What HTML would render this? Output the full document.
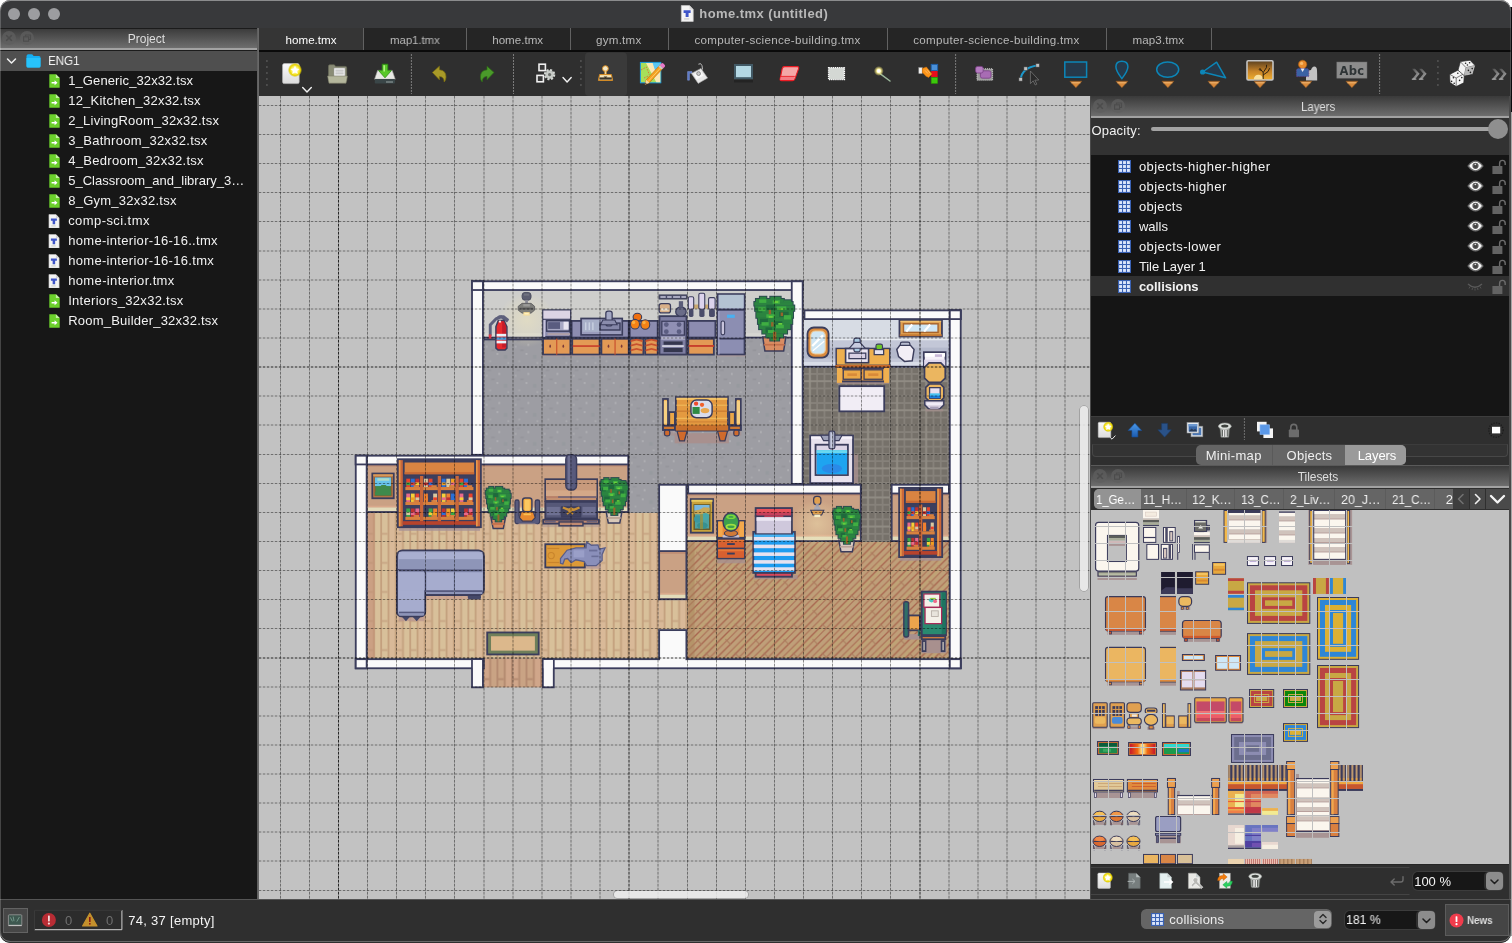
<!DOCTYPE html>
<html lang="en"><head><meta charset="utf-8"><title>home.tmx (untitled)</title>
<style>
*{box-sizing:border-box;margin:0;padding:0}
html,body{width:1512px;height:943px;overflow:hidden;background:#fff}
body{font-family:"Liberation Sans",sans-serif;font-size:13px;color:#e8e8e8;position:relative;-webkit-font-smoothing:antialiased}
#win{position:absolute;left:0;top:0;width:1510.5px;height:943.4px;background:#2f2f2f;border-radius:10.5px;overflow:hidden;will-change:transform}
#edge{position:absolute;left:0;top:0;width:1510.5px;height:942.4px;border-radius:10.5px;box-shadow:inset 0 1px 0 0 rgba(255,255,255,.42),inset 1px 0 0 0 rgba(255,255,255,.2),inset 0 -1px 0 0 rgba(255,255,255,.28),inset -1px 0 0 0 rgba(255,255,255,.16);pointer-events:none}
#behind1{position:absolute;left:1506px;top:7px;width:6px;height:105px;background:#0b0b0e}
#behind2{position:absolute;left:1506px;top:112px;width:6px;height:824px;background:#a6a6a6}
.abs{position:absolute}
.t{position:absolute;white-space:nowrap;line-height:1}
#titlebar{left:0;top:0;width:1512px;height:28px;background:#38393b}
.tl{position:absolute;top:8px;width:12px;height:12px;border-radius:50%;background:#9c9da0}
.dockhead{position:absolute;height:22px;background:linear-gradient(#3a3a3a 0,#3e3e3e 8%,#6c6c6c 88%,#707070 90%,#a2a2a2 91%,#a2a2a2 100%)}
.dockhead .ttl{position:absolute;left:0;right:0;top:4px;text-align:center;font-size:12px;color:#dedede;line-height:14px;letter-spacing:.2px}
.dbtn{position:absolute;top:2.8px;width:14px;height:14px;border-radius:50%;background:rgba(95,95,95,.75)}
.dbtn svg{position:absolute;left:0;top:0}
#proj{left:0;top:51px;width:258px;height:848px;background:#171717}
.row{position:absolute;left:0;width:258px;height:20px}
.row .t{top:3px;font-size:13px;line-height:14px;color:#f2f2f2;letter-spacing:.12px}
#tabs{left:259px;top:28px;width:1253px;height:23px;background:#252525}
.tab{position:absolute;top:0;height:23px;border-right:1.6px solid #626262}
.tab.act{background:#353535}
#toolbar{left:259px;top:52px;width:1253px;height:44px;background:#2f2f2f}
#mapview{left:259px;top:96px;width:831px;height:803px;background:#c2c2c2;overflow:hidden}
#right{left:1091px;top:96px;width:421px;height:803px;background:#2f2f2f}
#status{left:0;top:899px;width:1512px;height:44px;background:#2f2f2f;border-top:1px solid #555}
.lrow{position:absolute;left:0;width:418px;height:20px}
.lrow .t{left:48px;top:3px;font-size:13px;line-height:14px;color:#f2f2f2;letter-spacing:.15px}
.sep{position:absolute;width:1px;border-left:1px dotted #b0b0b0}
.grip{position:absolute;width:2px}

.ic{position:absolute}
</style></head><body><div id="behind1"></div><div id="behind2"></div><div id="win">
<div id="titlebar" class="abs">
<div class="tl" style="left:8px"></div>
<div class="tl" style="left:28px"></div>
<div class="tl" style="left:48px"></div>
<svg class="ic" style="left:680px;top:5px" width="14" height="17" viewBox="0 0 12 15"><path d="M1 .5h7.2L11.5 4v10.5H1z" fill="#f4f4f4" stroke="#c8c8c8" stroke-width=".6"/><path d="M8.2 .5V4h3.3z" fill="#d8d8d8"/><path d="M3 4.6h6.2v2.4H7.4v3.6H4.8V7H3z" fill="#3f55c8"/><rect x="3.4" y="11.8" width="4.6" height="1" fill="#c9c9c9"/></svg>
<div class="t" style="left:699.3px;top:6px;font-size:13px;line-height:15px;color:#b9b9b9;font-weight:bold;letter-spacing:0.438px;">home.tmx (untitled)</div>
</div>
<div class="dockhead" style="left:0;top:28px;width:258px"><div class="dbtn" style="left:2px"><svg width="14" height="14" viewBox="0 0 14 14"><path d="M4.2 4.2L9.8 9.8M9.8 4.2L4.2 9.8" stroke="#4c4c4c" stroke-width="1.6" fill="none"/></svg></div><div class="dbtn" style="left:20px"><svg width="14" height="14" viewBox="0 0 14 14"><path d="M5.5 5.5V4h5v4.5H9" stroke="#4c4c4c" stroke-width="1.1" fill="none"/><rect x="3.6" y="5.8" width="5" height="4.4" stroke="#4c4c4c" stroke-width="1.1" fill="none"/></svg></div><div class="t" style="left:127.7px;top:3.5px;font-size:12px;line-height:14px;color:#dedede;letter-spacing:0.007px;">Project</div></div>
<div class="abs" style="left:0;top:50px;width:258px;height:1px;background:#1c1c1c"></div>
<div class="abs" style="left:0;top:28px;width:258px;height:1px;background:#1b1b1b"></div>
<div id="proj" class="abs">
<div class="row" style="top:0;background:#4f4f4f"><svg class="ic" style="left:6px;top:5px" width="11" height="10" viewBox="0 0 11 10"><path d="M1.5 3L5.5 7L9.5 3" stroke="#f2f2f2" stroke-width="1.5" fill="none" stroke-linecap="round" stroke-linejoin="round"/></svg><svg class="ic" style="left:26px;top:2px" width="15" height="16" viewBox="0 0 15 16"><path d="M.5 3.2Q.5 1.2 2.4 1.2H5.4Q6.6 1.2 7.2 2.4L7.6 3H13Q14.5 3 14.5 4.6V13Q14.5 14.6 13 14.6H2Q.5 14.6 .5 13z" fill="#16b0f3"/><path d="M.5 5H14.5V13Q14.5 14.6 13 14.6H2Q.5 14.6 .5 13z" fill="#27c3fb"/></svg><div class="t" style="left:48.3px;top:1.8px;font-size:13px;line-height:15px;color:#f2f2f2;letter-spacing:-0.100px;transform:scaleX(0.9001);transform-origin:0 0;will-change:transform;">ENG1</div></div>
<div class="row" style="top:20px"><svg class="ic" style="left:48.6px;top:3.2px" width="11" height="14" viewBox="0 0 11 14"><path d="M.3 .3h6.600l3.800 3.800v9.600H.3z" fill="#6cd02c"/><path d="M6.900 .3v3.800h3.800z" fill="#c4f0a4"/><path d="M2.600 7.900h3V6.200l2.900 2.500-2.900 2.500V9.500h-3z" fill="#fff"/></svg><div class="t" style="left:68.2px;top:1.6px;font-size:13px;line-height:15px;color:#f2f2f2;letter-spacing:0.108px;">1_Generic_32x32.tsx</div></div>
<div class="row" style="top:40px"><svg class="ic" style="left:48.6px;top:3.2px" width="11" height="14" viewBox="0 0 11 14"><path d="M.3 .3h6.600l3.800 3.800v9.600H.3z" fill="#6cd02c"/><path d="M6.900 .3v3.800h3.800z" fill="#c4f0a4"/><path d="M2.600 7.900h3V6.200l2.900 2.500-2.900 2.500V9.500h-3z" fill="#fff"/></svg><div class="t" style="left:68.2px;top:1.6px;font-size:13px;line-height:15px;color:#f2f2f2;letter-spacing:0.230px;">12_Kitchen_32x32.tsx</div></div>
<div class="row" style="top:60px"><svg class="ic" style="left:48.6px;top:3.2px" width="11" height="14" viewBox="0 0 11 14"><path d="M.3 .3h6.600l3.800 3.800v9.600H.3z" fill="#6cd02c"/><path d="M6.900 .3v3.800h3.800z" fill="#c4f0a4"/><path d="M2.600 7.900h3V6.200l2.900 2.500-2.900 2.500V9.500h-3z" fill="#fff"/></svg><div class="t" style="left:68.2px;top:1.6px;font-size:13px;line-height:15px;color:#f2f2f2;letter-spacing:0.225px;">2_LivingRoom_32x32.tsx</div></div>
<div class="row" style="top:80px"><svg class="ic" style="left:48.6px;top:3.2px" width="11" height="14" viewBox="0 0 11 14"><path d="M.3 .3h6.600l3.800 3.800v9.600H.3z" fill="#6cd02c"/><path d="M6.900 .3v3.800h3.800z" fill="#c4f0a4"/><path d="M2.600 7.900h3V6.200l2.900 2.500-2.900 2.500V9.500h-3z" fill="#fff"/></svg><div class="t" style="left:68.2px;top:1.6px;font-size:13px;line-height:15px;color:#f2f2f2;letter-spacing:0.289px;">3_Bathroom_32x32.tsx</div></div>
<div class="row" style="top:100px"><svg class="ic" style="left:48.6px;top:3.2px" width="11" height="14" viewBox="0 0 11 14"><path d="M.3 .3h6.600l3.800 3.800v9.600H.3z" fill="#6cd02c"/><path d="M6.900 .3v3.800h3.800z" fill="#c4f0a4"/><path d="M2.600 7.900h3V6.200l2.900 2.500-2.900 2.500V9.500h-3z" fill="#fff"/></svg><div class="t" style="left:68.2px;top:1.6px;font-size:13px;line-height:15px;color:#f2f2f2;letter-spacing:0.295px;">4_Bedroom_32x32.tsx</div></div>
<div class="row" style="top:120px"><svg class="ic" style="left:48.6px;top:3.2px" width="11" height="14" viewBox="0 0 11 14"><path d="M.3 .3h6.600l3.800 3.800v9.600H.3z" fill="#6cd02c"/><path d="M6.900 .3v3.800h3.800z" fill="#c4f0a4"/><path d="M2.600 7.900h3V6.200l2.900 2.500-2.900 2.500V9.500h-3z" fill="#fff"/></svg><div class="t" style="left:68.2px;top:1.6px;font-size:13px;line-height:15px;color:#f2f2f2;letter-spacing:0.020px;">5_Classroom_and_library_3…</div></div>
<div class="row" style="top:140px"><svg class="ic" style="left:48.6px;top:3.2px" width="11" height="14" viewBox="0 0 11 14"><path d="M.3 .3h6.600l3.800 3.800v9.600H.3z" fill="#6cd02c"/><path d="M6.900 .3v3.800h3.800z" fill="#c4f0a4"/><path d="M2.600 7.900h3V6.200l2.900 2.500-2.900 2.500V9.500h-3z" fill="#fff"/></svg><div class="t" style="left:68.2px;top:1.6px;font-size:13px;line-height:15px;color:#f2f2f2;letter-spacing:0.244px;">8_Gym_32x32.tsx</div></div>
<div class="row" style="top:160px"><svg class="ic" style="left:48.4px;top:2.6px" width="11.6" height="14.6" viewBox="0 0 12 15"><path d="M1 .5h7.2L11.5 4v10.5H1z" fill="#f4f4f4" stroke="#c8c8c8" stroke-width=".6"/><path d="M8.2 .5V4h3.3z" fill="#d8d8d8"/><path d="M3 4.6h6.2v2.4H7.4v3.6H4.8V7H3z" fill="#3f55c8"/><rect x="3.4" y="11.8" width="4.6" height="1" fill="#c9c9c9"/></svg><div class="t" style="left:68.2px;top:1.6px;font-size:13px;line-height:15px;color:#f2f2f2;letter-spacing:0.422px;">comp-sci.tmx</div></div>
<div class="row" style="top:180px"><svg class="ic" style="left:48.4px;top:2.6px" width="11.6" height="14.6" viewBox="0 0 12 15"><path d="M1 .5h7.2L11.5 4v10.5H1z" fill="#f4f4f4" stroke="#c8c8c8" stroke-width=".6"/><path d="M8.2 .5V4h3.3z" fill="#d8d8d8"/><path d="M3 4.6h6.2v2.4H7.4v3.6H4.8V7H3z" fill="#3f55c8"/><rect x="3.4" y="11.8" width="4.6" height="1" fill="#c9c9c9"/></svg><div class="t" style="left:68.2px;top:1.6px;font-size:13px;line-height:15px;color:#f2f2f2;letter-spacing:0.307px;">home-interior-16-16..tmx</div></div>
<div class="row" style="top:200px"><svg class="ic" style="left:48.4px;top:2.6px" width="11.6" height="14.6" viewBox="0 0 12 15"><path d="M1 .5h7.2L11.5 4v10.5H1z" fill="#f4f4f4" stroke="#c8c8c8" stroke-width=".6"/><path d="M8.2 .5V4h3.3z" fill="#d8d8d8"/><path d="M3 4.6h6.2v2.4H7.4v3.6H4.8V7H3z" fill="#3f55c8"/><rect x="3.4" y="11.8" width="4.6" height="1" fill="#c9c9c9"/></svg><div class="t" style="left:68.2px;top:1.6px;font-size:13px;line-height:15px;color:#f2f2f2;letter-spacing:0.313px;">home-interior-16-16.tmx</div></div>
<div class="row" style="top:220px"><svg class="ic" style="left:48.4px;top:2.6px" width="11.6" height="14.6" viewBox="0 0 12 15"><path d="M1 .5h7.2L11.5 4v10.5H1z" fill="#f4f4f4" stroke="#c8c8c8" stroke-width=".6"/><path d="M8.2 .5V4h3.3z" fill="#d8d8d8"/><path d="M3 4.6h6.2v2.4H7.4v3.6H4.8V7H3z" fill="#3f55c8"/><rect x="3.4" y="11.8" width="4.6" height="1" fill="#c9c9c9"/></svg><div class="t" style="left:68.2px;top:1.6px;font-size:13px;line-height:15px;color:#f2f2f2;letter-spacing:0.355px;">home-interior.tmx</div></div>
<div class="row" style="top:240px"><svg class="ic" style="left:48.6px;top:3.2px" width="11" height="14" viewBox="0 0 11 14"><path d="M.3 .3h6.600l3.800 3.800v9.600H.3z" fill="#6cd02c"/><path d="M6.900 .3v3.800h3.800z" fill="#c4f0a4"/><path d="M2.600 7.900h3V6.200l2.900 2.500-2.900 2.500V9.500h-3z" fill="#fff"/></svg><div class="t" style="left:68.2px;top:1.6px;font-size:13px;line-height:15px;color:#f2f2f2;letter-spacing:0.292px;">Interiors_32x32.tsx</div></div>
<div class="row" style="top:260px"><svg class="ic" style="left:48.6px;top:3.2px" width="11" height="14" viewBox="0 0 11 14"><path d="M.3 .3h6.600l3.800 3.800v9.600H.3z" fill="#6cd02c"/><path d="M6.900 .3v3.800h3.800z" fill="#c4f0a4"/><path d="M2.600 7.900h3V6.200l2.900 2.500-2.900 2.500V9.500h-3z" fill="#fff"/></svg><div class="t" style="left:68.2px;top:1.6px;font-size:13px;line-height:15px;color:#f2f2f2;letter-spacing:0.221px;">Room_Builder_32x32.tsx</div></div>
</div>
<div class="abs" style="left:256.8px;top:28px;width:2.2px;height:871px;background:linear-gradient(90deg,#555,#6c6c6c 50%,#646464)"></div>
<div id="tabs" class="abs">
<div class="tab act" style="left:0px;width:105px"><div class="t" style="left:26.6px;top:4.5px;font-size:11.6px;line-height:13.6px;color:#fff;letter-spacing:-0.001px;">home.tmx</div></div>
<div class="tab" style="left:106px;width:102px"><div class="t" style="left:24.5px;top:4.5px;font-size:11.6px;line-height:13.6px;color:#b8b8b8;letter-spacing:-0.100px;transform:scaleX(0.9899);transform-origin:0 0;will-change:transform;">map1.tmx</div></div>
<div class="tab" style="left:209px;width:103px"><div class="t" style="left:24.2px;top:4.5px;font-size:11.6px;line-height:13.6px;color:#b8b8b8;letter-spacing:-0.001px;">home.tmx</div></div>
<div class="tab" style="left:313px;width:97px"><div class="t" style="left:24.1px;top:4.5px;font-size:11.6px;line-height:13.6px;color:#b8b8b8;letter-spacing:0.215px;">gym.tmx</div></div>
<div class="tab" style="left:411px;width:218px"><div class="t" style="left:24.5px;top:4.5px;font-size:11.6px;line-height:13.6px;color:#b8b8b8;letter-spacing:0.302px;">computer-science-building.tmx</div></div>
<div class="tab" style="left:630px;width:218px"><div class="t" style="left:24.2px;top:4.5px;font-size:11.6px;line-height:13.6px;color:#b8b8b8;letter-spacing:0.317px;">computer-science-building.tmx</div></div>
<div class="tab" style="left:849px;width:104px"><div class="t" style="left:24.6px;top:4.5px;font-size:11.6px;line-height:13.6px;color:#b8b8b8;letter-spacing:0.071px;">map3.tmx</div></div>
</div>
<div class="abs" style="left:259px;top:50px;width:1253px;height:2px;background:#0a0a0a"></div>
<div id="toolbar" class="abs"><svg class="ic" style="left:0;top:0" width="1253" height="44" viewBox="259 52 1253 44"><defs><radialGradient id="gst"><stop offset="0" stop-color="#fff"/><stop offset=".45" stop-color="#fff36a"/><stop offset=".75" stop-color="#e8d400"/><stop offset="1" stop-color="#c8b400" stop-opacity="0"/></radialGradient><linearGradient id="gpg" x1="0" y1="0" x2="0" y2="1"><stop offset="0" stop-color="#fafafa"/><stop offset="1" stop-color="#dcdcdc"/></linearGradient><linearGradient id="gch" x1="0" y1="0" x2="1" y2="1"><stop offset="0" stop-color="#4a4a4a"/><stop offset="1" stop-color="#b0b0b0"/></linearGradient><linearGradient id="gsun" x1="0" y1="0" x2="0" y2="1"><stop offset="0" stop-color="#5a4020"/><stop offset=".55" stop-color="#c88428"/><stop offset="1" stop-color="#f0b030"/></linearGradient><radialGradient id="gwand"><stop offset="0" stop-color="#fff"/><stop offset=".4" stop-color="#fff6a0"/><stop offset="1" stop-color="#f0e060" stop-opacity="0"/></radialGradient></defs><rect x="585" y="52.5" width="42" height="43.5" rx="4" fill="#3a3a3a"/><rect x="266.1" y="60.2" width="1.6" height="1.6" fill="#595959"/><rect x="266.1" y="66.2" width="1.6" height="1.6" fill="#595959"/><rect x="266.1" y="72.2" width="1.6" height="1.6" fill="#595959"/><rect x="266.1" y="78.2" width="1.6" height="1.6" fill="#595959"/><rect x="266.1" y="84.2" width="1.6" height="1.6" fill="#595959"/><rect x="580.1" y="60.2" width="1.6" height="1.6" fill="#595959"/><rect x="580.1" y="66.2" width="1.6" height="1.6" fill="#595959"/><rect x="580.1" y="72.2" width="1.6" height="1.6" fill="#595959"/><rect x="580.1" y="78.2" width="1.6" height="1.6" fill="#595959"/><rect x="580.1" y="84.2" width="1.6" height="1.6" fill="#595959"/><rect x="1437.1" y="60.2" width="1.6" height="1.6" fill="#595959"/><rect x="1437.1" y="66.2" width="1.6" height="1.6" fill="#595959"/><rect x="1437.1" y="72.2" width="1.6" height="1.6" fill="#595959"/><rect x="1437.1" y="78.2" width="1.6" height="1.6" fill="#595959"/><rect x="1437.1" y="84.2" width="1.6" height="1.6" fill="#595959"/><path d="M411.4 54.5V94" stroke="#c8c8c8" stroke-width="1" stroke-dasharray="1 2"/><path d="M513.5 54.5V94" stroke="#c8c8c8" stroke-width="1" stroke-dasharray="1 2"/><path d="M955.6 54.5V94" stroke="#c8c8c8" stroke-width="1" stroke-dasharray="1 2"/><path d="M1379.6 54.5V94" stroke="#c8c8c8" stroke-width="1" stroke-dasharray="1 2"/><rect x="282.6" y="63.6" width="16.6" height="20" rx="1.6" fill="url(#gpg)" stroke="#bdbdbd" stroke-width=".6"/><circle cx="295" cy="70" r="7.2" fill="url(#gst)"/><path d="M295 65.6l1.3 3 3.2.3-2.4 2.1.7 3.1-2.8-1.7-2.8 1.7.7-3.1-2.4-2.1 3.2-.3z" fill="#fff"/><path d="M302.7 87.6L307 92L311.3 87.6" stroke="#f2f2f2" stroke-width="1.4" fill="none" stroke-linecap="round" stroke-linejoin="round"/><path d="M328.5 66.2q0-1.4 1.4-1.4h4.4l1.4 1.6h9.6q1.4 0 1.4 1.4V81h-18.2z" fill="#8a8c76" stroke="#6c6e5a" stroke-width=".6"/><rect x="334" y="68" width="11" height="8.6" fill="#f0f0f0" stroke="#9a9a9a" stroke-width=".5"/><path d="M335.4 70.2h8.2M335.4 72h8.2M335.4 73.8h8.2" stroke="#a0a0a0" stroke-width=".7"/><path d="M327.6 76h19.8l-1.4 7.2h-17z" fill="#b4b69c" stroke="#7c7e68" stroke-width=".6"/><path d="M377.6 70.4h14.6l3 8.8h-20.6z" fill="#e8e8e4" stroke="#a8a8a4" stroke-width=".6"/><rect x="374.8" y="79" width="20.2" height="4.6" rx=".8" fill="#3a4648"/><path d="M386 82h7" stroke="#98a4a4" stroke-width="1"/><path d="M382.2 64.2h5.6v6.4h3.6l-6.4 7.2-6.4-7.2h3.6z" fill="#58c828" stroke="#2a8a10" stroke-width=".8"/><path d="M383.4 65.2h1.6v6.4h-1.6z" fill="#b0f080"/><path d="M432.4 72.4l7-6.2v3.6q6.6.6 6.6 7.2 0 3-1.8 5-0 -5.4-4.8-5.6v3.4z" fill="#a89a28" stroke="#7c7010" stroke-width=".7"/><path d="M494 72.4l-7-6.2v3.6q-6.6.6-6.6 7.2 0 3 1.8 5 0-5.4 4.8-5.6v3.4z" fill="#4a9a2a" stroke="#2c6c14" stroke-width=".7"/><rect x="539" y="64.2" width="6.4" height="6.4" fill="#3a3a3a" stroke="#f0f0f0" stroke-width="1.6"/><path d="M537.4 67.4h9.6M542.2 62.6v9.6" stroke="#f0f0f0" stroke-width=".01"/><rect x="537" y="75.4" width="6.4" height="6.4" fill="#3a3a3a" stroke="#f0f0f0" stroke-width="1.6"/><path d="M535.4 78.6h9.6M540.2 73.8v9.6" stroke="#f0f0f0" stroke-width=".01"/><circle cx="549.6" cy="74.6" r="4.6" fill="#9a9e9a" stroke="#d4d8d4" stroke-width="2.2" stroke-dasharray="2 1.6"/><circle cx="549.6" cy="74.6" r="3.6" fill="#c8ccc8"/><circle cx="549.6" cy="74.6" r="1.6" fill="#6c706c"/><path d="M563 77.6L567.1 82L571.2 77.6" stroke="#f2f2f2" stroke-width="1.4" fill="none" stroke-linecap="round" stroke-linejoin="round"/><circle cx="605.4" cy="68.6" r="2.9" fill="#f4e8c8" stroke="#d88a1c" stroke-width="1"/><rect x="604.6" y="71" width="1.8" height="4" fill="#e8d8a8" stroke="#d88a1c" stroke-width=".5"/><path d="M599.6 74.6h11.8l1.2 5.8h-14.2z" fill="#f4e4b8" stroke="#d88a1c" stroke-width="1"/><rect x="599.4" y="77.4" width="12.4" height="2.2" fill="#3a3428"/><path d="M603.6 76.6h3.8l-1.9 1.8z" fill="#3a3428"/><rect x="640.4" y="62.4" width="20.4" height="20.4" fill="#a6e05a" stroke="#1c9ae0" stroke-width="1"/><path d="M646 62.9h14.3v19.4h-4z" fill="#fbe8b4"/><path d="M652.6 62.9h7.7v8.2h-5z" fill="#5ac8f4"/><path d="M641 70l5.4-3 3 8M644 78l5-2.4" stroke="#e06a3a" stroke-width=".9" fill="none" stroke-dasharray="1.6 1.2"/><path d="M645 84.4l1.2-4.6 13.6-14.6 3.2 3-13.6 14.6z" fill="#f6a21e" stroke="#b86a10" stroke-width=".6"/><path d="M659.8 65.2l1.6-1.8q1-.8 2 .2l1.4 1.4q.8 1-.2 2l-1.6 1.6z" fill="#e878c8"/><path d="M658.4 66.6l1.4-1.4 3.2 3-1.4 1.4z" fill="#c8c8c8"/><path d="M645 84.4l1.2-4.6 3.2 3z" fill="#f4d8a8"/><path d="M645 84.4l.5-1.8 1.2 1.2z" fill="#333"/><path d="M648 81.6l12.4-13.4" stroke="#fcd070" stroke-width=".9"/><path d="M687.6 71.6h4.4v1.6h-2.6v7h-1.8z" fill="#5a78c8" stroke="#8aa0e0" stroke-width=".5"/><path d="M698.4 64.2q2.6-1.8 3.6 1.4l.6 4" stroke="#b8b8b8" stroke-width="1" fill="none"/><path d="M691.4 73.4l9.6-5 6.6 9.6-9.4 5.4z" fill="#e8e8e8" stroke="#a8a8a8" stroke-width=".6"/><path d="M694 74.6l6.6-3.4 3 4.4-7 3.8z" fill="#f8f8f8"/><circle cx="698.6" cy="73.6" r="1.9" fill="#c8c8c8" stroke="#6a6a6a" stroke-width=".7"/><rect x="734" y="80" width="19" height="2.4" fill="#1c1c1c" opacity=".6"/><rect x="735" y="65" width="17" height="13.2" fill="#b4d8e4" stroke="#425a66" stroke-width="2"/><path d="M784.6 66.6h12.6q2 0 1.4 2l-3.6 10q-.6 2-2.6 2h-10.8q-2 0-1.4-2l2-10q.4-2 2.400-2z" fill="#f4a8a8" stroke="#ec1c24" stroke-width="1.1"/><path d="M780.4 76.400h14.400" stroke="#ec1c24" stroke-width=".9"/><path d="M780.6 77h13.8l-.6 3h-13.600z" fill="#f47c84"/><rect x="828.6" y="67.6" width="15.8" height="12" fill="#d4d8d4" stroke="#ffffff" stroke-width="1.4" stroke-dasharray="1.2 .9"/><path d="M880 73.600l10 7.400" stroke="#9cb89c" stroke-width="1.5" stroke-linecap="round"/><circle cx="878.8" cy="71" r="5" fill="url(#gwand)"/><circle cx="878.8" cy="71" r="1.8" fill="#fff"/><rect x="931.200" y="64.400" width="6.400" height="6.200" fill="#4a90d8" stroke="#2060a8" stroke-width="1"/><rect x="931.200" y="71" width="6.400" height="6" fill="#e80c1c"/><rect x="931.200" y="77.400" width="6.400" height="6" fill="#3cc80c" stroke="#2a9800" stroke-width=".6"/><rect x="918.800" y="67.600" width="3.400" height="6" fill="#f0f0f0" stroke="#9a9a9a" stroke-width=".5"/><path d="M922.400 68.400l4-1.400 5.600 7-3.400 3.400-2.600-1.200-3.600-3.600z" fill="#fc9418" stroke="#d87000" stroke-width=".5"/><path d="M925 70.400l3 3.200M927 69.400l3 3.600" stroke="#fcd49c" stroke-width=".6"/><rect x="977" y="68.800" width="15.600" height="11.400" fill="#9a9a9a" stroke="#d0d0d0" stroke-width="1" stroke-dasharray="1 1"/><rect x="980.400" y="70.800" width="10.600" height="7.400" rx="2" fill="#a86cb4" stroke="#7c4088" stroke-width=".8"/><rect x="975.600" y="66.400" width="7.600" height="6.600" rx="2" fill="#b47cc0" stroke="#7c4088" stroke-width=".8"/><path d="M1020.600 79.400q1.400-12 17-14" stroke="#1c98cc" stroke-width="2" fill="none"/><rect x="1018.9" y="77.7" width="3.400" height="3.400" fill="#c0c0c0" stroke="#404040" stroke-width=".5"/><rect x="1023.9" y="66.9" width="3.400" height="3.400" fill="#c0c0c0" stroke="#404040" stroke-width=".5"/><rect x="1035.9" y="63.7" width="3.400" height="3.400" fill="#c0c0c0" stroke="#404040" stroke-width=".5"/><path d="M1030.400 71v12.600l2.800-2.800 2 4.200 1.600-.800-2-4 4-.2z" fill="#2a2a2a" stroke="#8a8a8a" stroke-width=".6"/><rect x="1064.800" y="62" width="21.800" height="15.200" fill="#26394a" stroke="#0c86b8" stroke-width="1.500"/><path d="M1121.900 78.600q-6-7.600-6-11.800 0-5.600 6-5.600t6 5.600q0 4.200-6 11.800z" fill="#26394a" stroke="#0c86b8" stroke-width="1.500"/><ellipse cx="1167.700" cy="69.600" rx="11" ry="7.700" fill="#26394a" stroke="#0c86b8" stroke-width="1.500"/><path d="M1202.600 72l14-9.800 9 15.600z" fill="#26394a" stroke="#0c86b8" stroke-width="1.500" stroke-linejoin="round"/><circle cx="1202.600" cy="72" r="2.600" fill="#0c86b8"/><rect x="1247" y="60.800" width="26" height="19.200" rx="1.200" fill="url(#gsun)" stroke="#c4c4c4" stroke-width="1.600"/><path d="M1253.800 79.200a4.600 4.600 0 0 1 9.200 0z" fill="#f8e0a0"/><path d="M1263.200 79v-6.400l-3.600-4.600M1263.200 72.600l3.200-5 .2-2.800M1263.200 75l4.800-3.400 1.600-3.400M1261.400 70.400l-2.600-.8" stroke="#20180c" stroke-width=".9" fill="none"/><path d="M1306 76.400q0-6 5-6.400 1-3.600 3.400-3.600t2.600 3.600q.2 4 .2 10.400h-11.200z" fill="#d4d4d4" opacity=".9"/><circle cx="1302.600" cy="64.400" r="4.200" fill="#e88a2c" stroke="#a85a10" stroke-width=".6"/><circle cx="1301.600" cy="63.400" r="1.600" fill="#f8b868"/><path d="M1296.400 76.600v-6q0-2.200 2.200-2.200h8q2.200 0 2.200 2.200v6z" fill="#3a62a4" stroke="#6c3c8c" stroke-width=".7" stroke-dasharray="1 .8"/><path d="M1300.600 68.600l2 3.400 2-3.400z" fill="#e8e8f0"/><rect x="1336.800" y="62" width="30.200" height="16.200" fill="#8c8c8c" stroke="#6a6a6a" stroke-width=".5"/><text x="1351.900" y="75" text-anchor="middle" font-family="DejaVu Sans, Liberation Sans, sans-serif" font-weight="bold" font-size="11.500" fill="#2e3436" letter-spacing=".3">Abc</text><path d="M1069.9 81.2H1081.9L1075.9 87.8Z" fill="#d88a3c" stroke="#8a5420" stroke-width=".6"/><path d="M1071.3 82.8H1080.5" stroke="#f4c080" stroke-width=".8"/><path d="M1115.9 81.2H1127.9L1121.9 87.8Z" fill="#d88a3c" stroke="#8a5420" stroke-width=".6"/><path d="M1117.3 82.8H1126.5" stroke="#f4c080" stroke-width=".8"/><path d="M1161.9 81.2H1173.9L1167.9 87.8Z" fill="#d88a3c" stroke="#8a5420" stroke-width=".6"/><path d="M1163.3 82.8H1172.5" stroke="#f4c080" stroke-width=".8"/><path d="M1207.9 81.2H1219.9L1213.9 87.8Z" fill="#d88a3c" stroke="#8a5420" stroke-width=".6"/><path d="M1209.3 82.8H1218.5" stroke="#f4c080" stroke-width=".8"/><path d="M1254 81.2H1266L1260 87.8Z" fill="#d88a3c" stroke="#8a5420" stroke-width=".6"/><path d="M1255.4 82.8H1264.6" stroke="#f4c080" stroke-width=".8"/><path d="M1299.9 81.2H1311.9L1305.9 87.8Z" fill="#d88a3c" stroke="#8a5420" stroke-width=".6"/><path d="M1301.3 82.8H1310.5" stroke="#f4c080" stroke-width=".8"/><path d="M1345.9 81.2H1357.9L1351.9 87.8Z" fill="#d88a3c" stroke="#8a5420" stroke-width=".6"/><path d="M1347.3 82.8H1356.5" stroke="#f4c080" stroke-width=".8"/><path d="M1412 68.8h3l4.6 5-4.6 5.4h-3l4.4-5.4z" fill="url(#gch)"/><path d="M1411.8 79.2h4.6" stroke="#d8d8d8" stroke-width=".8"/><path d="M1419 68.8h3l4.6 5-4.6 5.4h-3l4.4-5.4z" fill="url(#gch)"/><path d="M1418.8 79.2h4.6" stroke="#d8d8d8" stroke-width=".8"/><path d="M1492 68.8h3l4.6 5-4.6 5.4h-3l4.4-5.4z" fill="url(#gch)"/><path d="M1491.8 79.2h4.6" stroke="#d8d8d8" stroke-width=".8"/><path d="M1499 68.8h3l4.6 5-4.6 5.4h-3l4.4-5.4z" fill="url(#gch)"/><path d="M1498.8 79.2h4.6" stroke="#d8d8d8" stroke-width=".8"/><path d="M1449.600 74.400l8.200-4.200 6.600 3.600-.6 9-7.600 3.800-6.200-4z" fill="#f4f4f4" stroke="#2a2a2a" stroke-width=".7"/><path d="M1456.200 78l7.600-4.200M1456.200 78l-6.400-3.600M1456.200 78v8.400" stroke="#2a2a2a" stroke-width=".6" fill="none"/><path d="M1458 70.200l2.400-8.600 9.600-1.400 5.200 5.400-2.600 8.600-8.200 1.600z" fill="#f4f4f4" stroke="#2a2a2a" stroke-width=".7"/><path d="M1460.400 61.800l5.600 5.800 9-2M1466 67.600l-1.600 8" stroke="#2a2a2a" stroke-width=".6" fill="none"/><path d="M1466 67.600l8.800-1.800-2.400 8-8 1.600z" fill="#b8b8b8"/><circle cx="1465.6" cy="63.2" r=".8" fill="#222"/><circle cx="1469.6" cy="62.8" r=".8" fill="#222"/><circle cx="1467.4" cy="65" r=".8" fill="#222"/><circle cx="1468.4" cy="70.4" r=".8" fill="#222"/><circle cx="1470.4" cy="72.4" r=".8" fill="#222"/><circle cx="1472.2" cy="68.6" r=".8" fill="#222"/><circle cx="1453.4" cy="77.8" r=".8" fill="#222"/><circle cx="1451.6" cy="81.4" r=".8" fill="#222"/><circle cx="1454.2" cy="83.2" r=".8" fill="#222"/><circle cx="1457.8" cy="73.2" r=".8" fill="#222"/><circle cx="1459.6" cy="80.4" r=".8" fill="#222"/><circle cx="1461.8" cy="77.6" r=".8" fill="#222"/></svg></div>
<div id="mapview" class="abs">
<svg width="831" height="803" viewBox="0 0 831 803" style="position:absolute;left:0;top:0"><defs>
<pattern id="fk" width="16" height="16" patternUnits="userSpaceOnUse"><rect width="16" height="16" fill="#9d9da3"/>
<rect x="8" y="3" width="1" height="1" fill="#b2b2b6"/><rect x="1" y="4" width="1" height="1" fill="#acacb0"/><rect x="7" y="8" width="1" height="1" fill="#b0b0b4"/><rect x="13" y="13" width="1" height="1" fill="#acacb0"/><rect x="3" y="12" width="1" height="1" fill="#aaaaae"/>
<rect x="4" y="6" width="2" height="1" fill="#95959b"/><rect x="11" y="9" width="2" height="2" fill="#979a9f"/><rect x="2" y="1" width="2" height="1" fill="#96969c"/></pattern>
<pattern id="fb" width="4" height="4" patternUnits="userSpaceOnUse"><rect width="4" height="4" fill="#76716a"/><rect x="0" y="3" width="4" height="1" fill="#86817a"/><rect x="3" y="0" width="1" height="4" fill="#86817a"/></pattern>
<pattern id="fb2" width="16" height="16" patternUnits="userSpaceOnUse"><rect x="3" y="0" width="1" height="16" fill="#9a958b" opacity=".6"/><rect x="0" y="7" width="16" height="1" fill="#9a958b" opacity=".5"/></pattern>
<pattern id="fw" width="16" height="16" patternUnits="userSpaceOnUse"><rect width="16" height="16" fill="#d8c09a"/>
<rect x="0" y="0" width="3" height="16" fill="#d9b998"/><rect x="12" y="0" width="3" height="16" fill="#d9b998"/>
<rect x="3" y="0" width="1" height="16" fill="#c4a07e"/><rect x="7" y="0" width="1" height="16" fill="#c4a07e"/><rect x="11" y="0" width="1" height="16" fill="#c4a07e"/><rect x="15" y="0" width="1" height="16" fill="#c4a07e"/>
<rect x="0" y="11" width="3" height="1" fill="#c8a684"/><rect x="8" y="11" width="3" height="1" fill="#c8a684"/></pattern>
<pattern id="fwd" width="16" height="16" patternUnits="userSpaceOnUse"><rect width="16" height="16" fill="#c9a384"/>
<rect x="0" y="0" width="3" height="16" fill="#d0a68a"/><rect x="12" y="0" width="3" height="16" fill="#d0a68a"/>
<rect x="3" y="0" width="1" height="16" fill="#b48a70"/><rect x="7" y="0" width="1" height="16" fill="#b48a70"/><rect x="11" y="0" width="1" height="16" fill="#b48a70"/><rect x="15" y="0" width="1" height="16" fill="#b48a70"/>
<rect x="0" y="11" width="3" height="1" fill="#b48a70"/><rect x="8" y="11" width="3" height="1" fill="#b48a70"/></pattern>
<pattern id="fd" width="16" height="16" patternUnits="userSpaceOnUse"><rect width="16" height="16" fill="#bf9f79"/>
<path d="M-1 11L11 -1M5 17L17 5" stroke="#bfa672" stroke-width="1.8" fill="none" opacity=".55"/>
<path d="M-1 1L1 -1M-1 9L9 -1M-1 17L17 -1M7 17L17 7M15 17L17 15" stroke="#a25845" stroke-width=".75" fill="none" opacity=".8"/>
<path d="M-1 5L5 -1M-1 13L13 -1M3 17L17 3M11 17L17 11" stroke="#a5624c" stroke-width=".7" fill="none" opacity=".65"/>
<path d="M5 5.500L8 8.500M10 13L13 16M13 -1L16 2" stroke="#aa7a5c" stroke-width=".7" fill="none" opacity=".8"/></pattern>
<radialGradient id="glow"><stop offset="0" stop-color="#f8ecb8" stop-opacity=".42"/><stop offset=".6" stop-color="#f8ecb8" stop-opacity=".2"/><stop offset="1" stop-color="#fff3b0" stop-opacity="0"/></radialGradient>
</defs><g transform="translate(79.5 271.6) scale(1.81667)"><rect x="80" y="-16" width="170" height="64" fill="url(#fk)"/>
<rect x="160" y="48" width="90" height="16" fill="url(#fk)"/>
<rect x="160" y="48" width="16" height="32" fill="url(#fk)"/>
<rect x="256" y="0" width="80" height="64" fill="url(#fb)"/>
<rect x="288" y="64" width="16" height="32" fill="url(#fb)"/>
<rect x="256" y="0" width="80" height="64" fill="url(#fb2)"/>
<rect x="288" y="64" width="16" height="32" fill="url(#fb2)"/>
<rect x="16" y="80" width="160" height="80" fill="url(#fw)"/>
<rect x="176" y="128" width="16" height="16" fill="url(#fw)"/>
<rect x="16" y="80" width="4" height="80" fill="#c08c72" opacity=".55"/>
<rect x="80" y="160" width="32" height="16" fill="url(#fwd)"/>
<rect x="192" y="96" width="144" height="64" fill="url(#fd)"/>
<rect x="192" y="96" width="4" height="64" fill="#a8835c" opacity=".45"/>
<rect x="80" y="-43" width="170" height="27" fill="#cececc"/>
<rect x="80" y="-19" width="170" height="2" fill="#d6d6d2"/>
<rect x="80" y="-17" width="170" height="1" fill="#3b3d5c"/>
<rect x="256" y="-27" width="80" height="27" fill="#d7dce4"/>
<rect x="256" y="-16" width="80" height="1" fill="#e6eaf0"/>
<rect x="256" y="-15" width="80" height="12" fill="#c3c7d7"/>
<rect x="256" y="-11" width="80" height="6" fill="#b4b9cc"/>
<rect x="256" y="-3" width="80" height="2" fill="#d8dce8"/>
<rect x="256" y="-1" width="80" height="1" fill="#3b3d5c"/>
<rect x="16" y="53" width="144" height="27" fill="#caa184"/>
<rect x="16" y="53" width="144" height="1.5" fill="#bf8e74"/>
<rect x="16" y="76" width="144" height="1" fill="#d9a98c"/>
<rect x="16" y="77" width="144" height="2" fill="#e2dbba"/>
<rect x="16" y="79" width="144" height="1" fill="#3b3d5c"/>
<rect x="159" y="53" width="1" height="27" fill="#3b3d5c"/>
<rect x="192" y="69" width="96" height="27" fill="#caa184"/>
<rect x="192" y="69" width="96" height="1.5" fill="#bf8e74"/>
<rect x="192" y="92" width="96" height="1" fill="#d9a98c"/>
<rect x="192" y="93" width="96" height="2" fill="#e2dbba"/>
<rect x="192" y="95" width="96" height="1" fill="#3b3d5c"/>
<rect x="287" y="64" width="1" height="32" fill="#3b3d5c"/>
<rect x="304" y="69" width="32" height="27" fill="#caa184"/>
<rect x="304" y="69" width="32" height="1.5" fill="#bf8e74"/>
<rect x="304" y="92" width="32" height="1" fill="#d9a98c"/>
<rect x="304" y="93" width="32" height="2" fill="#e2dbba"/>
<rect x="304" y="95" width="32" height="1" fill="#3b3d5c"/>
<rect x="304" y="64" width="1" height="32" fill="#3b3d5c"/>
<rect x="176" y="101" width="16" height="27" fill="#caa184"/>
<rect x="176" y="101" width="16" height="1.5" fill="#bf8e74"/>
<rect x="176" y="124" width="16" height="1" fill="#d9a98c"/>
<rect x="176" y="125" width="16" height="2" fill="#e2dbba"/>
<rect x="176" y="127" width="16" height="1" fill="#3b3d5c"/>
<rect x="176" y="101" width="1" height="27" fill="#3b3d5c"/>
<rect x="191" y="101" width="1" height="27" fill="#3b3d5c"/>
<rect x="73.5" y="-47.5" width="182" height="4.8" fill="#fafafa" stroke="#3b3d5c" stroke-width="1"/>
<rect x="73.5" y="-47.5" width="6" height="95.5" fill="#fafafa" stroke="#3b3d5c" stroke-width="1"/>
<rect x="73.5" y="-47.5" width="6" height="4.8" fill="#fafafa" stroke="#3b3d5c" stroke-width="1"/>
<rect x="249.5" y="-47.5" width="6" height="111.5" fill="#fafafa" stroke="#3b3d5c" stroke-width="1"/>
<rect x="256.5" y="-31.5" width="86" height="4.8" fill="#fafafa" stroke="#3b3d5c" stroke-width="1"/>
<rect x="336.5" y="-31.5" width="6" height="197" fill="#fafafa" stroke="#3b3d5c" stroke-width="1"/>
<rect x="336.5" y="-31.5" width="6" height="4.8" fill="#fafafa" stroke="#3b3d5c" stroke-width="1"/>
<rect x="9.5" y="48.5" width="150" height="4.8" fill="#fafafa" stroke="#3b3d5c" stroke-width="1"/>
<rect x="9.5" y="48.5" width="6" height="117" fill="#fafafa" stroke="#3b3d5c" stroke-width="1"/>
<rect x="9.5" y="48.5" width="6" height="4.8" fill="#fafafa" stroke="#3b3d5c" stroke-width="1"/>
<rect x="9.5" y="160.5" width="70.5" height="5" fill="#fafafa" stroke="#3b3d5c" stroke-width="1"/>
<rect x="9.5" y="160.5" width="6" height="5" fill="#fafafa" stroke="#3b3d5c" stroke-width="1"/>
<rect x="73.5" y="160.5" width="6" height="15.5" fill="#fafafa" stroke="#3b3d5c" stroke-width="1"/>
<rect x="74" y="161" width="5" height="4.5" fill="#fafafa"/>
<rect x="112.5" y="160.5" width="230" height="5" fill="#fafafa" stroke="#3b3d5c" stroke-width="1"/>
<rect x="112.5" y="160.5" width="6" height="15.5" fill="#fafafa" stroke="#3b3d5c" stroke-width="1"/>
<rect x="113" y="161" width="5" height="4.5" fill="#fafafa"/>
<rect x="336.5" y="160.5" width="6" height="5" fill="#fafafa" stroke="#3b3d5c" stroke-width="1"/>
<rect x="192.5" y="64.5" width="95" height="4.8" fill="#fafafa" stroke="#3b3d5c" stroke-width="1"/>
<rect x="304.5" y="64.5" width="31.5" height="4.8" fill="#fafafa" stroke="#3b3d5c" stroke-width="1"/>
<rect x="176.5" y="64.5" width="15" height="36.5" fill="#fafafa" stroke="#3b3d5c" stroke-width="1"/>
<rect x="176.5" y="144.5" width="15" height="16" fill="#fafafa" stroke="#3b3d5c" stroke-width="1"/>
<rect x="177" y="159.5" width="14" height="2" fill="#fafafa"/>
<ellipse cx="103.58" cy="-26.2" rx="15.5" ry="15" fill="url(#glow)" />
<rect x="80" y="-16" width="32" height="1" fill="#3b3d5c"/>
<rect x="101.06" y="-41.36" width="4.92" height="4.26" rx="1.6" fill="#5c5e70" stroke="#4a4c5e" stroke-width="0.5"/>
<rect x="102.04" y="-40.7" width="2.95" height="1.14" fill="#70727f"/>
<rect x="102.77" y="-37.26" width="1.5" height="2.13" fill="#8a8b96"/>
<path d="M101.06 -35.36L105.98 -35.36L107.94 -33.72L107.94 -31.63L105.98 -29.99L101.06 -29.99L98.93 -31.63L98.93 -33.72Z" fill="#7e7e7a" stroke="#5e5e60" stroke-width="0.5" />
<rect x="101.72" y="-34.97" width="3.6" height="1.31" fill="#9a9a98"/>
<rect x="99.75" y="-32.94" width="7.37" height="0.98" fill="#5c5c5c"/>
<rect x="101.78" y="-30.55" width="3.48" height="1.87" fill="#f6dc98"/>
<rect x="102.37" y="-30.05" width="2.3" height="0.81" fill="#fdf0c0"/>
<path d="M83.53 -17.6L83.53 -23.5L86.64 -26.78L89.59 -27.93L93.2 -25.47" fill="none" stroke="#5e607c" stroke-width="1.6" />
<path d="M86.64 -26.78L88.61 -28.15L90.9 -28.15L93.53 -26.12" fill="none" stroke="#5e607c" stroke-width="1.4" />
<path d="M87.96 -25.96L91.07 -25.96L92.71 -22.52L92.71 -10.72L91.72 -9.74L87.79 -9.74L86.64 -10.72L86.64 -22.52Z" fill="#e62a2e" stroke="#3b3d5c" stroke-width="0.8" />
<path d="M90.09 -25.47L91.07 -25.47L92.28 -22.36L92.28 -11.05L90.09 -11.05Z" fill="#c41c2a" />
<rect x="88.28" y="-25.86" width="1.15" height="1.05" fill="#fbe0e0"/>
<rect x="87.04" y="-18.59" width="5.24" height="1.48" fill="#e8f2fa"/>
<rect x="87.04" y="-16.62" width="5.24" height="1.31" fill="#4aa8e8"/>
<rect x="87.04" y="-14.82" width="5.24" height="1.48" fill="#e8f2fa"/>
<rect x="82.71" y="-18.26" width="1.48" height="2.29" fill="#e03848"/>
<rect x="112.6" y="-31.6" width="15.05" height="14.73" fill="#8c8cae" stroke="#3b3d5c" stroke-width="1"/>
<rect x="112.75" y="-31.44" width="14.75" height="4.58" fill="#dcd4e4"/>
<rect x="112.75" y="-26.86" width="14.75" height="0.53" fill="#3b3d5c"/>
<rect x="114.59" y="-25.8" width="12.51" height="5.75" fill="#a8a8c4" stroke="#3b3d5c" stroke-width="0.8"/>
<rect x="115.37" y="-25.02" width="6.56" height="3.73" fill="#5a5c80"/>
<rect x="123.89" y="-25.22" width="2.75" height="4.26" fill="#e8e4f0"/>
<rect x="115.05" y="-18.99" width="12.45" height="1.18" fill="#b0a0a8"/>
<rect x="112.75" y="-26.2" width="1.05" height="9.3" fill="#c8c4dc"/>
<rect x="128.32" y="-25.7" width="31.44" height="9.16" fill="#8c8cb0" stroke="#3b3d5c" stroke-width="1"/>
<rect x="133.52" y="-27.06" width="22.69" height="9.06" fill="#9a9cbc" stroke="#3b3d5c" stroke-width="0.9"/>
<rect x="134.38" y="-26.2" width="9.17" height="6.55" fill="#a8b0c8"/>
<rect x="135.69" y="-24.89" width="0.78" height="4.26" fill="#c8d0e0"/>
<rect x="137.65" y="-24.89" width="0.79" height="4.26" fill="#c8d0e0"/>
<rect x="139.62" y="-24.89" width="0.79" height="4.26" fill="#c8d0e0"/>
<rect x="143.95" y="-24.49" width="11" height="3.79" fill="#8486a8" stroke="#3b3d5c" stroke-width="0.8"/>
<rect x="147.16" y="-31.12" width="3.47" height="8.19" rx="1.2" fill="#a4a8c4" stroke="#3b3d5c" stroke-width="0.7"/>
<path d="M145.52 -26.2L152.07 -26.2L153.38 -23.58L144.21 -23.58Z" fill="#8a8cac" stroke="#3b3d5c" stroke-width="0.6" />
<rect x="112.6" y="-15.87" width="15.05" height="8.7" fill="#e39a55" stroke="#3b3d5c" stroke-width="1"/>
<rect x="119.8" y="-16.04" width="0.65" height="8.97" fill="#c8502e"/>
<ellipse cx="116.51" cy="-11.79" rx="0.458715" ry="0.91743" fill="#7a3a3a" />
<ellipse cx="123.74" cy="-11.79" rx="0.458715" ry="0.91743" fill="#7a3a3a" />
<rect x="128.65" y="-15.87" width="15.06" height="8.7" fill="#e39a55" stroke="#3b3d5c" stroke-width="1"/>
<rect x="128.94" y="-12.31" width="14.87" height="0.92" fill="#c8402c"/>
<rect x="144.71" y="-15.87" width="15.05" height="8.7" fill="#e39a55" stroke="#3b3d5c" stroke-width="1"/>
<rect x="151.91" y="-16.04" width="0.65" height="8.97" fill="#c8502e"/>
<ellipse cx="148.62" cy="-11.79" rx="0.458715" ry="0.91743" fill="#7a3a3a" />
<ellipse cx="155.85" cy="-11.79" rx="0.458715" ry="0.91743" fill="#7a3a3a" />
<rect x="112.1" y="-6.67" width="48.16" height="0.52" fill="#b89a98" opacity=".7"/>
<rect x="160.3" y="-25.7" width="15.39" height="9.16" fill="#8c8cb0" stroke="#3b3d5c" stroke-width="1"/>
<rect x="160.63" y="-15.87" width="7.19" height="8.7" fill="#e39a55" stroke="#3b3d5c" stroke-width="1"/>
<rect x="168.82" y="-15.87" width="6.87" height="8.7" fill="#e39a55" stroke="#3b3d5c" stroke-width="1"/>
<path d="M160.79 -15.06L164.06 -15.85L167.34 -15.06L167.34 -14.14L164.06 -14.93L160.79 -14.14Z" fill="#c8502e" />
<path d="M160.79 -12.57L164.06 -13.36L167.34 -12.57L167.34 -11.65L164.06 -12.44L160.79 -11.65Z" fill="#c8502e" />
<path d="M160.79 -9.95L164.06 -10.74L167.34 -9.95L167.34 -9.03L164.06 -9.82L160.79 -9.03Z" fill="#c8502e" />
<path d="M168.98 -15.06L172.25 -15.85L175.53 -15.06L175.53 -14.14L172.25 -14.93L168.98 -14.14Z" fill="#c8502e" />
<path d="M168.98 -12.57L172.25 -13.36L175.53 -12.57L175.53 -11.65L172.25 -12.44L168.98 -11.65Z" fill="#c8502e" />
<path d="M168.98 -9.95L172.25 -10.74L175.53 -9.95L175.53 -9.03L172.25 -9.82L168.98 -9.03Z" fill="#c8502e" />
<ellipse cx="164.52" cy="-27.84" rx="2.3591" ry="2.09698" fill="#f07010" stroke="#3b3d5c" stroke-width="0.6" />
<ellipse cx="163.21" cy="-23.91" rx="2.49017" ry="2.62123" fill="#f58216" stroke="#3b3d5c" stroke-width="0.6" />
<ellipse cx="168.85" cy="-23.71" rx="2.49017" ry="2.62123" fill="#f58216" stroke="#3b3d5c" stroke-width="0.6" />
<ellipse cx="162.42" cy="-24.89" rx="0.91743" ry="0.91743" fill="#fcb040" />
<ellipse cx="168.19" cy="-24.76" rx="0.91743" ry="0.91743" fill="#fcb040" />
<rect x="176.69" y="-28.32" width="14.85" height="21.15" fill="#7e7ea2" stroke="#3b3d5c" stroke-width="1"/>
<rect x="176.19" y="-40.29" width="15.85" height="2.82" fill="#44465f"/>
<rect x="177.17" y="-39.44" width="14.09" height="1.12" fill="#a8a8c0"/>
<rect x="180.12" y="-39.57" width="0.78" height="1.44" fill="#4a4c6a"/>
<rect x="183.39" y="-39.57" width="0.79" height="1.44" fill="#4a4c6a"/>
<rect x="187.98" y="-39.57" width="0.79" height="1.44" fill="#4a4c6a"/>
<rect x="176.51" y="-35.25" width="6.23" height="5.12" rx="1.2" fill="#d8b088" stroke="#3b3d5c" stroke-width="0.7"/>
<rect x="177.63" y="-32.62" width="4.13" height="1.18" fill="#f4ecdc"/>
<ellipse cx="188.51" cy="-30.79" rx="2.88335" ry="2.62123" fill="#6a6c88" stroke="#3b3d5c" stroke-width="0.7" />
<rect x="187.33" y="-36.56" width="2.36" height="3.28" fill="#5a5c78"/>
<rect x="177.98" y="-25.52" width="12.4" height="7.62" fill="#9090b4" stroke="#3b3d5c" stroke-width="0.7"/>
<ellipse cx="180.45" cy="-23.71" rx="1.31061" ry="1.31061" fill="#5c5e82" />
<ellipse cx="187.46" cy="-23.71" rx="1.31061" ry="1.31061" fill="#5c5e82" />
<ellipse cx="180.45" cy="-19.78" rx="1.31061" ry="1.31061" fill="#5c5e82" />
<ellipse cx="187.46" cy="-19.78" rx="1.31061" ry="1.31061" fill="#5c5e82" />
<rect x="177.63" y="-17.03" width="13.1" height="1.64" fill="#b8b8d0"/>
<rect x="178.94" y="-14.41" width="10.48" height="1.84" fill="#34364e"/>
<rect x="178.15" y="-12.31" width="11.93" height="0.92" fill="#d8d8e4"/>
<rect x="178.94" y="-10.8" width="10.48" height="2.29" fill="#34364e"/>
<rect x="192.54" y="-25.7" width="14.93" height="9.16" fill="#8c8cb0" stroke="#3b3d5c" stroke-width="1"/>
<rect x="192.54" y="-15.87" width="14.08" height="8.7" fill="#e39a55" stroke="#3b3d5c" stroke-width="1"/>
<rect x="192.7" y="-12.44" width="13.96" height="1.05" fill="#c8402c"/>
<rect x="192.57" y="-34.72" width="15.07" height="2.29" fill="#c8a870"/>
<rect x="192.57" y="-38.98" width="2.95" height="6.88" rx="0.8" fill="#dcd4ec" stroke="#3b3d5c" stroke-width="0.6"/>
<rect x="192.83" y="-32.1" width="2.56" height="4.26" rx="0.8" fill="#4a4c6a"/>
<rect x="198.34" y="-40.95" width="3.27" height="8.85" rx="0.8" fill="#dcd4ec" stroke="#3b3d5c" stroke-width="0.6"/>
<rect x="198.6" y="-32.1" width="2.88" height="4.26" rx="0.8" fill="#4a4c6a"/>
<rect x="203.71" y="-38.52" width="3.6" height="6.42" rx="0.8" fill="#dcd4ec" stroke="#3b3d5c" stroke-width="0.6"/>
<rect x="203.97" y="-32.1" width="3.21" height="4.26" rx="0.8" fill="#4a4c6a"/>
<rect x="208.66" y="-40.45" width="14.86" height="33.28" fill="#8c8eb2" stroke="#3b3d5c" stroke-width="1"/>
<rect x="209.28" y="-40.09" width="13.76" height="7.47" fill="#b4c2d2"/>
<rect x="208.62" y="-32.36" width="14.88" height="1.05" fill="#3b3d5c"/>
<rect x="208.62" y="-16.37" width="14.88" height="0.92" fill="#3b3d5c"/>
<rect x="210.59" y="-25.68" width="1.97" height="7.67" rx="1" fill="#c8c4dc" stroke="#3b3d5c" stroke-width="0.6"/>
<rect x="213.87" y="-29.15" width="4.26" height="1.77" fill="#4ab0f0"/>
<rect x="208.95" y="-31.12" width="0.79" height="23.92" fill="#a0a2c4"/>
<rect x="208.16" y="-6.67" width="15.86" height="0.52" fill="#b89a98" opacity=".7"/>
<path d="M233.514 -16.9132H246.245L245.046 -9.16H234.714Z" fill="#d98c62" stroke="#3b3d5c" stroke-width="0.8" />
<rect x="234.114" y="-13.0366" width="11.531" height="0.9" fill="#c4704c"/>
<rect x="231.428" y="-39.53" width="4.612" height="2.54401" fill="#2c4c50"/>
<rect x="237.135" y="-39.53" width="6.807" height="2.54401" fill="#2c4c50"/>
<rect x="229.233" y="-38.3267" width="16.465" height="2.78468" fill="#2c4c50"/>
<rect x="244.598" y="-37.6047" width="5.051" height="2.06267" fill="#2c4c50"/>
<rect x="228.355" y="-36.642" width="22.172" height="3.02534" fill="#2c4c50"/>
<rect x="228.794" y="-34.7166" width="22.611" height="3.98802" fill="#2c4c50"/>
<rect x="229.452" y="-31.8286" width="21.294" height="4.95069" fill="#2c4c50"/>
<rect x="230.331" y="-27.9779" width="19.977" height="4.46935" fill="#2c4c50"/>
<rect x="230.989" y="-24.6086" width="18.221" height="3.98802" fill="#2c4c50"/>
<rect x="232.745" y="-21.7206" width="14.709" height="3.50668" fill="#2c4c50"/>
<rect x="234.94" y="-19.3139" width="10.319" height="3.26601" fill="#2c4c50"/>
<rect x="237.135" y="-17.1479" width="5.929" height="2.78468" fill="#2c4c50"/>
<rect x="231.978" y="-38.98" width="3.512" height="1.49401" fill="#2b8440"/>
<rect x="237.685" y="-38.98" width="5.707" height="1.49401" fill="#2b8440"/>
<rect x="229.783" y="-37.7767" width="15.365" height="1.73468" fill="#2b8440"/>
<rect x="245.148" y="-37.0547" width="3.951" height="1.01267" fill="#2b8440"/>
<rect x="228.905" y="-36.092" width="21.072" height="1.97534" fill="#2b8440"/>
<rect x="229.344" y="-34.1666" width="21.511" height="2.93802" fill="#2b8440"/>
<rect x="230.002" y="-31.2786" width="20.194" height="3.90069" fill="#2b8440"/>
<rect x="230.881" y="-27.4279" width="18.877" height="3.41935" fill="#2b8440"/>
<rect x="231.539" y="-24.0586" width="17.121" height="2.93802" fill="#2b8440"/>
<rect x="233.295" y="-21.1706" width="13.609" height="2.45668" fill="#2b8440"/>
<rect x="235.49" y="-18.7639" width="9.219" height="2.21601" fill="#2b8440"/>
<rect x="237.685" y="-16.5979" width="4.829" height="1.73468" fill="#2b8440"/>
<rect x="235.49" y="-34.648" width="4.39" height="2.88802" fill="#1f6a3c"/>
<rect x="242.514" y="-30.7973" width="5.268" height="2.88802" fill="#1f6a3c"/>
<rect x="231.978" y="-26.9466" width="4.39" height="2.88802" fill="#1f6a3c"/>
<rect x="239.88" y="-25.5026" width="4.39" height="3.36935" fill="#1f6a3c"/>
<rect x="230.222" y="-32.7226" width="3.073" height="2.40668" fill="#1f6a3c"/>
<rect x="235.051" y="-22.1332" width="3.512" height="2.88802" fill="#1f6a3c"/>
<rect x="231.539" y="-37.536" width="3.951" height="1.92534" fill="#3fae42"/>
<rect x="239.002" y="-37.0547" width="3.951" height="1.92534" fill="#3fae42"/>
<rect x="241.197" y="-33.6853" width="5.268" height="1.92534" fill="#3fae42"/>
<rect x="231.1" y="-33.204" width="3.951" height="2.16601" fill="#3fae42"/>
<rect x="235.49" y="-29.3533" width="4.829" height="1.92534" fill="#3fae42"/>
<rect x="245.148" y="-28.8719" width="3.951" height="2.40668" fill="#3fae42"/>
<rect x="232.856" y="-25.0213" width="3.951" height="1.92534" fill="#3fae42"/>
<rect x="240.758" y="-23.5772" width="4.39" height="1.92534" fill="#3fae42"/>
<rect x="236.368" y="-20.6892" width="3.512" height="1.68468" fill="#3fae42"/>
<rect x="239.88" y="-36.5733" width="2.195" height="0.962672" fill="#6bd23c"/>
<rect x="242.514" y="-32.7226" width="2.195" height="0.962672" fill="#6bd23c"/>
<rect x="236.807" y="-28.3906" width="2.195" height="0.962672" fill="#6bd23c"/>
<rect x="242.075" y="-24.5399" width="2.195" height="0.962672" fill="#6bd23c"/>
<rect x="236.807" y="-31.76" width="1.317" height="2.40668" fill="#96642c"/>
<rect x="243.392" y="-30.316" width="1.317" height="1.92534" fill="#96642c"/>
<rect x="238.124" y="-25.0213" width="1.317" height="2.40668" fill="#96642c"/>
<rect x="239.221" y="-19.7266" width="1.756" height="4.81336" fill="#96642c"/>
<rect x="185.03" y="36.1" width="29.82" height="5.57" fill="#a8908e"/>
<rect x="178.48" y="35.12" width="6.88" height="2.3" fill="#a8908e" opacity=".6"/>
<rect x="214.72" y="35.12" width="7.01" height="2.3" fill="#a8908e" opacity=".6"/>
<rect x="178.65" y="17.27" width="2.67" height="17.02" fill="#f0b45a" stroke="#3b3d5c" stroke-width="1"/>
<rect x="179.07" y="18.41" width="1.83" height="12.45" fill="#f8d080"/>
<rect x="218.76" y="17.27" width="2.67" height="17.02" fill="#f0b45a" stroke="#3b3d5c" stroke-width="1"/>
<rect x="219.17" y="18.41" width="1.84" height="12.45" fill="#f8d080"/>
<rect x="182.06" y="24.48" width="3.13" height="7.19" fill="#eaa648" stroke="#3b3d5c" stroke-width="1"/>
<rect x="215.09" y="24.48" width="3.06" height="7.19" fill="#eaa648" stroke="#3b3d5c" stroke-width="1"/>
<rect x="178.65" y="32.02" width="6.54" height="2.27" fill="#d07830" stroke="#3b3d5c" stroke-width="1"/>
<rect x="215.09" y="32.02" width="6.34" height="2.27" fill="#d07830" stroke="#3b3d5c" stroke-width="1"/>
<rect x="179.46" y="34.47" width="2.89" height="3.08" rx="1" fill="#d06a2c" stroke="#3b3d5c" stroke-width="0.7"/>
<rect x="217.6" y="34.47" width="2.88" height="3.08" rx="1" fill="#d06a2c" stroke="#3b3d5c" stroke-width="0.7"/>
<path d="M186.34 34.79L191.91 34.79L190.41 40.36L187.78 40.36Z" fill="#d06a2c" stroke="#3b3d5c" stroke-width="0.7" />
<path d="M208.62 34.79L214.19 34.79L212.69 40.36L210.07 40.36Z" fill="#d06a2c" stroke="#3b3d5c" stroke-width="0.7" />
<rect x="185.73" y="16.29" width="28.62" height="18.33" fill="#e49a40" stroke="#3b3d5c" stroke-width="1"/>
<rect x="186.02" y="16.58" width="28.04" height="1.18" fill="#f4c468"/>
<rect x="186.02" y="20.38" width="28.04" height="0.65" fill="#f0b858"/>
<rect x="186.02" y="23.65" width="28.04" height="0.66" fill="#c87a30"/>
<rect x="186.02" y="27.59" width="28.04" height="0.78" fill="#f0b858"/>
<rect x="186.02" y="29.55" width="28.04" height="0.66" fill="#d08436"/>
<rect x="185.69" y="31.65" width="28.77" height="3.01" fill="#c8702c"/>
<rect x="194.01" y="17.89" width="11.66" height="9.7" rx="3" fill="#d8dcec" stroke="#3b3d5c" stroke-width="0.8"/>
<ellipse cx="196.83" cy="19.85" rx="1.17955" ry="1.17955" fill="#f04a2c" />
<ellipse cx="200.1" cy="20.51" rx="1.17955" ry="1.17955" fill="#f0602c" />
<ellipse cx="201.74" cy="23.65" rx="2.3591" ry="1.44167" fill="#e8a850" />
<rect x="194.86" y="21.69" width="3.93" height="3.8" fill="#2f8a43"/>
<rect x="258.16" y="-22.07" width="11.6" height="16.58" rx="3.5" fill="#d98a3e" stroke="#3b3d5c" stroke-width="1"/>
<rect x="259.93" y="-20.11" width="8.06" height="12.65" rx="2.5" fill="#cfe6f4" stroke="#f0c890" stroke-width="0.6"/>
<path d="M260.79 -11.92L266.68 -17.81" fill="none" stroke="#ffffff" stroke-width="1.2" />
<path d="M261.11 -9.29L267.34 -14.54" fill="none" stroke="#ffffff" stroke-width="0.7" />
<rect x="308.8" y="-26.16" width="23.37" height="9.03" fill="#e0a050" stroke="#3b3d5c" stroke-width="1"/>
<rect x="309.28" y="-25.81" width="22.48" height="0.79" fill="#f0c070"/>
<rect x="310.99" y="-24.1" width="19.06" height="4.71" fill="#cfe6f4" stroke="#a8642c" stroke-width="0.8"/>
<path d="M312.56 -19.78L315.83 -23.71" fill="none" stroke="#ffffff" stroke-width="1.2" />
<path d="M322.38 -19.78L325.66 -23.71" fill="none" stroke="#ffffff" stroke-width="1.2" />
<rect x="308.95" y="-18.34" width="23.07" height="1.05" fill="#c47a34"/>
<rect x="274.22" y="7.74" width="28.83" height="1.31" fill="#a8908e" opacity=".7"/>
<rect x="274.06" y="-10.43" width="29.15" height="9.15" fill="#e8a540" stroke="#3b3d5c" stroke-width="1"/>
<rect x="274.35" y="-10.08" width="28.7" height="8.32" fill="#eeb050"/>
<rect x="279.13" y="-10.48" width="12.66" height="7.81" fill="#ece6f2" stroke="#3b3d5c" stroke-width="0.9"/>
<rect x="280.99" y="-7.96" width="9.26" height="3.03" fill="#d8d0e4" stroke="#3b3d5c" stroke-width="0.7"/>
<rect x="283.72" y="-16.18" width="3.47" height="7.54" rx="1" fill="#a9c8e0" stroke="#3b3d5c" stroke-width="0.7"/>
<path d="M281.1 -10.61L284.05 -13.88L287 -13.88L289.95 -10.61Z" fill="#c8cce0" stroke="#3b3d5c" stroke-width="0.6" />
<rect x="294.88" y="-9.93" width="5.2" height="2.78" fill="#e8e4f0" stroke="#3b3d5c" stroke-width="0.7"/>
<rect x="295.84" y="-12.9" width="3.61" height="2.95" rx="1" fill="#6cc828" stroke="#3b3d5c" stroke-width="0.6"/>
<rect x="273.56" y="-1.43" width="30.15" height="1.64" fill="#c86a2c"/>
<rect x="274.85" y="0.38" width="27.7" height="7.19" fill="#e49a40" stroke="#3b3d5c" stroke-width="1"/>
<rect x="277.85" y="1.21" width="9.78" height="5.2" fill="#eca848" stroke="#3b3d5c" stroke-width="0.7"/>
<rect x="289.31" y="1.21" width="10.12" height="5.2" fill="#eca848" stroke="#3b3d5c" stroke-width="0.7"/>
<rect x="280.12" y="3.16" width="5.24" height="1.44" fill="#d88a3a"/>
<rect x="291.59" y="3.16" width="5.57" height="1.44" fill="#d88a3a"/>
<rect x="274.35" y="0.21" width="2.82" height="8.19" fill="#f0b050"/>
<rect x="300.3" y="0.21" width="2.75" height="8.19" fill="#f0b050"/>
<rect x="309.28" y="-14.01" width="5.24" height="2.75" rx="1" fill="#b8bcd0" stroke="#3b3d5c" stroke-width="0.7"/>
<path d="M307.31 -9.95L308.95 -12.24L314.85 -12.24L316.81 -9.95L315.83 -3.72L311.57 -3.4L308.3 -6.02Z" fill="#f2eef6" stroke="#3b3d5c" stroke-width="0.8" />
<rect x="322.23" y="-8.47" width="11.91" height="8.5" fill="#f4f0f8" stroke="#3b3d5c" stroke-width="1"/>
<rect x="322.71" y="-7.98" width="11.14" height="1.96" fill="#ffffff"/>
<rect x="328.28" y="-7.33" width="3.93" height="1.44" fill="#c8b8d8"/>
<rect x="322.38" y="-4.38" width="11.6" height="4.26" fill="#e0d8ec"/>
<path d="M325.01 -2.61L331.56 -2.61L333.98 -0.12L333.98 5.78L331.56 8.07L325.01 8.07L322.58 5.78L322.58 -0.12Z" fill="#ebb660" stroke="#3b3d5c" stroke-width="0.9" />
<path d="M325.2 9.05L331.36 9.05L333.2 10.89L333.2 16.59L331.36 18.56L325.2 18.56L323.24 16.59L323.24 10.89Z" fill="#ebb660" stroke="#3b3d5c" stroke-width="0.9" />
<rect x="325.36" y="11.04" width="5.85" height="5.86" fill="#e8e0f0" stroke="#3b3d5c" stroke-width="0.7"/>
<rect x="325.46" y="14.17" width="5.64" height="1.44" fill="#48c0f0"/>
<rect x="325.46" y="15.48" width="5.64" height="1.31" fill="#1a80e0"/>
<path d="M322.71 18.23L333.2 18.23L333.2 20.52L330.9 22.82L325.01 22.82L322.71 20.52Z" fill="#d8d0e0" stroke="#3b3d5c" stroke-width="0.8" />
<rect x="323.7" y="19.21" width="8.71" height="1.51" fill="#f0ecf6"/>
<rect x="325.66" y="21.5" width="4.59" height="1.32" fill="#a8a0b8"/>
<rect x="323.04" y="22.82" width="9.83" height="1.31" fill="#a8908e" opacity=".6"/>
<rect x="275.7" y="10.21" width="24.69" height="13.87" fill="#f1edf5" stroke="#3b3d5c" stroke-width="1"/>
<rect x="283.72" y="47.72" width="2.3" height="16.05" fill="#a8908e" opacity=".8"/>
<rect x="259.65" y="37.4" width="23.57" height="26.2" fill="#e8e2ee" stroke="#3b3d5c" stroke-width="1"/>
<rect x="260.13" y="37.89" width="22.61" height="1.31" fill="#f6f2fa"/>
<rect x="262.6" y="42.45" width="17.8" height="16.69" fill="#dcd4e6" stroke="#3b3d5c" stroke-width="1"/>
<rect x="263.21" y="45.42" width="16.78" height="13.31" fill="#1ea4f0"/>
<rect x="263.21" y="45.42" width="16.78" height="1.64" fill="#6ad8f0"/>
<ellipse cx="271.6" cy="55.58" rx="5.57011" ry="2.49017" fill="#2a8ae8" />
<path d="M265.37 37.23L277.17 37.23L275.53 40.18L267.01 40.18Z" fill="#9ca0b8" stroke="#3b3d5c" stroke-width="0.6" />
<rect x="269.96" y="34.94" width="3.28" height="9.83" rx="1" fill="#a4a8c0" stroke="#3b3d5c" stroke-width="0.7"/>
<rect x="270.94" y="35.92" width="0.79" height="8.19" fill="#c8cce0"/>
<rect x="18.63" y="58.31" width="11.77" height="13.61" fill="#b87a48" stroke="#3b3d5c" stroke-width="1"/>
<rect x="19.11" y="58.73" width="10.81" height="1.04" fill="#d89a5a"/>
<rect x="20.06" y="60.47" width="8.91" height="10.01" fill="#3f8a4c" stroke="#8a5a30" stroke-width="0.6"/>
<rect x="20.09" y="60.43" width="8.85" height="4.78" fill="#68c4ec"/>
<path d="M20.09 68.82L23.7 64.56L25.99 64.56L28.94 67.83L28.94 70.46L20.09 70.46Z" fill="#3f8a4c" />
<rect x="21.4" y="60.95" width="6.56" height="1.31" fill="#d8ecb0" opacity=".6"/>
<rect x="33.21" y="86.85" width="44.66" height="3" fill="#a89296" opacity=".8"/>
<rect x="32.71" y="50.44" width="45.66" height="37.41" fill="#3d3f5e" stroke="#3b3d5c" stroke-width="1"/>
<rect x="33.21" y="50.94" width="2.2" height="36.41" fill="#c9673a"/>
<rect x="75.67" y="50.94" width="2.2" height="36.41" fill="#c9673a"/>
<rect x="33.21" y="50.94" width="0.9" height="36.41" fill="#e8984c"/>
<rect x="75.67" y="50.94" width="0.9" height="36.41" fill="#e8984c"/>
<rect x="36.01" y="51.84" width="39.06" height="7.2" fill="#d98442" stroke="#3b3d5c" stroke-width="0.8"/>
<rect x="36.41" y="57.54" width="38.26" height="1.2" fill="#c76a36"/>
<rect x="37.31" y="61.14" width="2.12167" height="4.60333" fill="#e8422c"/>
<rect x="37.31" y="63.2417" width="2.12167" height="1.501" fill="#38a848"/>
<rect x="39.8317" y="61.14" width="2.12167" height="4.60333" fill="#2a6fd6"/>
<rect x="39.8317" y="63.2417" width="2.12167" height="1.501" fill="#e8422c"/>
<rect x="42.3533" y="61.14" width="2.12167" height="4.60333" fill="#c03030"/>
<rect x="42.3533" y="63.2417" width="2.12167" height="1.501" fill="#f6d03a"/>
<rect x="36.81" y="65.7433" width="8.165" height="1.7" fill="#d8803e"/>
<rect x="41.3807" y="64.7433" width="2.9295" height="1" fill="#d8803e"/>
<rect x="37.31" y="69.3433" width="2.12167" height="4.60333" fill="#e86a8c"/>
<rect x="37.31" y="71.445" width="2.12167" height="1.501" fill="#f6d03a"/>
<rect x="39.8317" y="69.3433" width="2.12167" height="4.60333" fill="#f6d03a"/>
<rect x="39.8317" y="71.445" width="2.12167" height="1.501" fill="#f0a020"/>
<rect x="42.3533" y="69.3433" width="2.12167" height="4.60333" fill="#e8422c"/>
<rect x="42.3533" y="71.445" width="2.12167" height="1.501" fill="#d8c8a0"/>
<rect x="36.81" y="73.9467" width="8.165" height="1.7" fill="#d8803e"/>
<rect x="41.3807" y="72.9467" width="2.9295" height="1" fill="#d8803e"/>
<rect x="37.31" y="77.5467" width="2.12167" height="4.60333" fill="#38a848"/>
<rect x="37.31" y="79.6483" width="2.12167" height="1.501" fill="#d8c8a0"/>
<rect x="39.8317" y="77.5467" width="2.12167" height="4.60333" fill="#c03030"/>
<rect x="39.8317" y="79.6483" width="2.12167" height="1.501" fill="#e86a8c"/>
<rect x="42.3533" y="77.5467" width="2.12167" height="4.60333" fill="#e86a8c"/>
<rect x="42.3533" y="79.6483" width="2.12167" height="1.501" fill="#c03030"/>
<rect x="36.81" y="82.15" width="8.165" height="1.7" fill="#d8803e"/>
<rect x="41.3807" y="81.15" width="2.9295" height="1" fill="#d8803e"/>
<rect x="44.875" y="59.64" width="1.8" height="25.11" fill="#c9673a"/>
<rect x="47.075" y="61.14" width="2.12167" height="4.60333" fill="#d8c8a0"/>
<rect x="47.075" y="63.2417" width="2.12167" height="1.501" fill="#c03030"/>
<rect x="49.5967" y="61.14" width="2.12167" height="4.60333" fill="#e8422c"/>
<rect x="49.5967" y="63.2417" width="2.12167" height="1.501" fill="#2a6fd6"/>
<rect x="46.575" y="65.7433" width="8.165" height="1.7" fill="#d8803e"/>
<rect x="51.1457" y="64.7433" width="2.9295" height="1" fill="#d8803e"/>
<rect x="47.075" y="69.3433" width="2.12167" height="4.60333" fill="#f08030"/>
<rect x="47.075" y="71.445" width="2.12167" height="1.501" fill="#f08030"/>
<rect x="52.1183" y="69.3433" width="2.12167" height="4.60333" fill="#d8c8a0"/>
<rect x="52.1183" y="71.445" width="2.12167" height="1.501" fill="#e8422c"/>
<rect x="46.575" y="73.9467" width="8.165" height="1.7" fill="#d8803e"/>
<rect x="51.1457" y="72.9467" width="2.9295" height="1" fill="#d8803e"/>
<rect x="49.5967" y="77.5467" width="2.12167" height="4.60333" fill="#38a848"/>
<rect x="49.5967" y="79.6483" width="2.12167" height="1.501" fill="#f6d03a"/>
<rect x="52.1183" y="77.5467" width="2.12167" height="4.60333" fill="#f08030"/>
<rect x="52.1183" y="79.6483" width="2.12167" height="1.501" fill="#f0a020"/>
<rect x="46.575" y="82.15" width="8.165" height="1.7" fill="#d8803e"/>
<rect x="51.1457" y="81.15" width="2.9295" height="1" fill="#d8803e"/>
<rect x="54.64" y="59.64" width="1.8" height="25.11" fill="#c9673a"/>
<rect x="56.84" y="61.14" width="2.12167" height="4.60333" fill="#2a6fd6"/>
<rect x="56.84" y="63.2417" width="2.12167" height="1.501" fill="#f0a020"/>
<rect x="59.3617" y="61.14" width="2.12167" height="4.60333" fill="#d8c8a0"/>
<rect x="59.3617" y="63.2417" width="2.12167" height="1.501" fill="#d8c8a0"/>
<rect x="61.8833" y="61.14" width="2.12167" height="4.60333" fill="#f0a020"/>
<rect x="61.8833" y="63.2417" width="2.12167" height="1.501" fill="#e86a8c"/>
<rect x="56.34" y="65.7433" width="8.165" height="1.7" fill="#d8803e"/>
<rect x="60.9108" y="64.7433" width="2.9295" height="1" fill="#d8803e"/>
<rect x="56.84" y="69.3433" width="2.12167" height="4.60333" fill="#f6d03a"/>
<rect x="56.84" y="71.445" width="2.12167" height="1.501" fill="#e86a8c"/>
<rect x="59.3617" y="69.3433" width="2.12167" height="4.60333" fill="#f08030"/>
<rect x="59.3617" y="71.445" width="2.12167" height="1.501" fill="#c03030"/>
<rect x="61.8833" y="69.3433" width="2.12167" height="4.60333" fill="#2a6fd6"/>
<rect x="61.8833" y="71.445" width="2.12167" height="1.501" fill="#2a6fd6"/>
<rect x="56.34" y="73.9467" width="8.165" height="1.7" fill="#d8803e"/>
<rect x="60.9108" y="72.9467" width="2.9295" height="1" fill="#d8803e"/>
<rect x="56.84" y="77.5467" width="2.12167" height="4.60333" fill="#c03030"/>
<rect x="56.84" y="79.6483" width="2.12167" height="1.501" fill="#2a6fd6"/>
<rect x="59.3617" y="77.5467" width="2.12167" height="4.60333" fill="#f0a020"/>
<rect x="59.3617" y="79.6483" width="2.12167" height="1.501" fill="#f08030"/>
<rect x="61.8833" y="77.5467" width="2.12167" height="4.60333" fill="#f6d03a"/>
<rect x="61.8833" y="79.6483" width="2.12167" height="1.501" fill="#38a848"/>
<rect x="56.34" y="82.15" width="8.165" height="1.7" fill="#d8803e"/>
<rect x="60.9108" y="81.15" width="2.9295" height="1" fill="#d8803e"/>
<rect x="64.405" y="59.64" width="1.8" height="25.11" fill="#c9673a"/>
<rect x="66.605" y="61.14" width="2.12167" height="4.60333" fill="#e8422c"/>
<rect x="66.605" y="63.2417" width="2.12167" height="1.501" fill="#38a848"/>
<rect x="69.1267" y="61.14" width="2.12167" height="4.60333" fill="#2a6fd6"/>
<rect x="69.1267" y="63.2417" width="2.12167" height="1.501" fill="#e8422c"/>
<rect x="66.105" y="65.7433" width="8.165" height="1.7" fill="#d8803e"/>
<rect x="70.6758" y="64.7433" width="2.9295" height="1" fill="#d8803e"/>
<rect x="66.605" y="69.3433" width="2.12167" height="4.60333" fill="#e86a8c"/>
<rect x="66.605" y="71.445" width="2.12167" height="1.501" fill="#f6d03a"/>
<rect x="71.6483" y="69.3433" width="2.12167" height="4.60333" fill="#e8422c"/>
<rect x="71.6483" y="71.445" width="2.12167" height="1.501" fill="#d8c8a0"/>
<rect x="66.105" y="73.9467" width="8.165" height="1.7" fill="#d8803e"/>
<rect x="70.6758" y="72.9467" width="2.9295" height="1" fill="#d8803e"/>
<rect x="69.1267" y="77.5467" width="2.12167" height="4.60333" fill="#c03030"/>
<rect x="69.1267" y="79.6483" width="2.12167" height="1.501" fill="#e86a8c"/>
<rect x="71.6483" y="77.5467" width="2.12167" height="4.60333" fill="#e86a8c"/>
<rect x="71.6483" y="79.6483" width="2.12167" height="1.501" fill="#c03030"/>
<rect x="66.105" y="82.15" width="8.165" height="1.7" fill="#d8803e"/>
<rect x="70.6758" y="81.15" width="2.9295" height="1" fill="#d8803e"/>
<rect x="35.41" y="84.55" width="40.26" height="2" fill="#b8432c"/>
<path d="M83.9296 82.6456H91.9104L90.7104 88.61H85.1296Z" fill="#d98c62" stroke="#3b3d5c" stroke-width="0.8" />
<rect x="84.5296" y="85.6278" width="6.7808" height="0.9" fill="#c4704c"/>
<rect x="82.4164" y="65.12" width="3.3016" height="2.23854" fill="#2c4c50"/>
<rect x="85.994" y="65.12" width="4.6776" height="2.23854" fill="#2c4c50"/>
<rect x="81.0404" y="66.0688" width="10.732" height="2.42829" fill="#2c4c50"/>
<rect x="90.6724" y="66.638" width="3.5768" height="1.85902" fill="#2c4c50"/>
<rect x="80.49" y="67.3971" width="14.3096" height="2.61805" fill="#2c4c50"/>
<rect x="80.7652" y="68.9151" width="14.5848" height="3.37707" fill="#2c4c50"/>
<rect x="81.178" y="71.1922" width="13.7592" height="4.1361" fill="#2c4c50"/>
<rect x="81.7284" y="74.2283" width="12.9336" height="3.75658" fill="#2c4c50"/>
<rect x="82.1412" y="76.8849" width="11.8328" height="3.37707" fill="#2c4c50"/>
<rect x="83.242" y="79.1619" width="9.6312" height="2.99756" fill="#2c4c50"/>
<rect x="84.618" y="81.0595" width="6.8792" height="2.8078" fill="#2c4c50"/>
<rect x="85.994" y="82.7673" width="4.1272" height="2.42829" fill="#2c4c50"/>
<rect x="82.9664" y="65.67" width="2.2016" height="1.18854" fill="#2b8440"/>
<rect x="86.544" y="65.67" width="3.5776" height="1.18854" fill="#2b8440"/>
<rect x="81.5904" y="66.6188" width="9.632" height="1.37829" fill="#2b8440"/>
<rect x="91.2224" y="67.188" width="2.4768" height="0.809024" fill="#2b8440"/>
<rect x="81.04" y="67.9471" width="13.2096" height="1.56805" fill="#2b8440"/>
<rect x="81.3152" y="69.4651" width="13.4848" height="2.32707" fill="#2b8440"/>
<rect x="81.728" y="71.7422" width="12.6592" height="3.0861" fill="#2b8440"/>
<rect x="82.2784" y="74.7783" width="11.8336" height="2.70658" fill="#2b8440"/>
<rect x="82.6912" y="77.4349" width="10.7328" height="2.32707" fill="#2b8440"/>
<rect x="83.792" y="79.7119" width="8.5312" height="1.94756" fill="#2b8440"/>
<rect x="85.168" y="81.6095" width="5.7792" height="1.7578" fill="#2b8440"/>
<rect x="86.544" y="83.3173" width="3.0272" height="1.37829" fill="#2b8440"/>
<rect x="85.168" y="69.0856" width="2.752" height="2.27707" fill="#1f6a3c"/>
<rect x="89.5712" y="72.1217" width="3.3024" height="2.27707" fill="#1f6a3c"/>
<rect x="82.9664" y="75.1578" width="2.752" height="2.27707" fill="#1f6a3c"/>
<rect x="87.92" y="76.2963" width="2.752" height="2.65658" fill="#1f6a3c"/>
<rect x="81.8656" y="70.6037" width="1.9264" height="1.89756" fill="#1f6a3c"/>
<rect x="84.8928" y="78.9529" width="2.2016" height="2.27707" fill="#1f6a3c"/>
<rect x="82.6912" y="66.8085" width="2.4768" height="1.51805" fill="#3fae42"/>
<rect x="87.3696" y="67.188" width="2.4768" height="1.51805" fill="#3fae42"/>
<rect x="88.7456" y="69.8446" width="3.3024" height="1.51805" fill="#3fae42"/>
<rect x="82.416" y="70.2241" width="2.4768" height="1.7078" fill="#3fae42"/>
<rect x="85.168" y="73.2602" width="3.0272" height="1.51805" fill="#3fae42"/>
<rect x="91.2224" y="73.6398" width="2.4768" height="1.89756" fill="#3fae42"/>
<rect x="83.5168" y="76.6758" width="2.4768" height="1.51805" fill="#3fae42"/>
<rect x="88.4704" y="77.8144" width="2.752" height="1.51805" fill="#3fae42"/>
<rect x="85.7184" y="80.0915" width="2.2016" height="1.32829" fill="#3fae42"/>
<rect x="87.92" y="67.5676" width="1.376" height="0.759024" fill="#6bd23c"/>
<rect x="89.5712" y="70.6037" width="1.376" height="0.759024" fill="#6bd23c"/>
<rect x="85.9936" y="74.0193" width="1.376" height="0.759024" fill="#6bd23c"/>
<rect x="89.296" y="77.0554" width="1.376" height="0.759024" fill="#6bd23c"/>
<rect x="85.9936" y="71.3627" width="0.8256" height="1.89756" fill="#96642c"/>
<rect x="90.1216" y="72.5012" width="0.8256" height="1.51805" fill="#96642c"/>
<rect x="86.8192" y="76.6758" width="0.8256" height="1.89756" fill="#96642c"/>
<rect x="87.5072" y="80.8505" width="1.1008" height="3.79512" fill="#96642c"/>
<rect x="97.94" y="84.55" width="12.78" height="1.83" fill="#a8908e" opacity=".7"/>
<rect x="97.16" y="72.88" width="2.22" height="12.98" rx="1" fill="#585a7c" stroke="#3b3d5c" stroke-width="0.7"/>
<rect x="108.3" y="72.88" width="2.42" height="12.98" rx="1" fill="#585a7c" stroke="#3b3d5c" stroke-width="0.7"/>
<rect x="98.6" y="81.92" width="11.14" height="3.94" fill="#585a7c"/>
<rect x="101.35" y="71.77" width="5.11" height="7.53" rx="1.4" fill="#f4ac40" stroke="#3b3d5c" stroke-width="0.8"/>
<rect x="102.53" y="72.88" width="2.75" height="5.64" fill="#fcc860"/>
<path d="M100.56 79.3L107.25 79.3L108.3 82.58L106.46 84.55L101.35 84.55L99.58 82.58Z" fill="#e88a30" stroke="#3b3d5c" stroke-width="0.7" />
<rect x="101.87" y="80.29" width="4.07" height="0.98" fill="#fcc050"/>
<rect x="112.36" y="85.2" width="31.45" height="2.62" fill="#a8908e" opacity=".5"/>
<rect x="113.84" y="61.45" width="28.49" height="11.98" fill="#c49070" stroke="#3b3d5c" stroke-width="1"/>
<rect x="114.19" y="61.94" width="27.79" height="5.57" fill="#c89a7c"/>
<rect x="114.19" y="67.51" width="27.79" height="3.27" fill="#d4a888"/>
<rect x="114.19" y="70.78" width="27.79" height="0.99" fill="#b8806a"/>
<rect x="120.88" y="70.91" width="20.97" height="0.66" fill="#585a7c"/>
<rect x="113.84" y="73.9" width="28.49" height="9.16" fill="#565878" stroke="#3b3d5c" stroke-width="1"/>
<rect x="114.65" y="76.68" width="7.21" height="4.59" fill="#6e7092"/>
<rect x="134.31" y="76.68" width="7.21" height="4.59" fill="#6e7092"/>
<rect x="122.87" y="76.7" width="10.44" height="5.53" fill="#3f4160" stroke="#3b3d5c" stroke-width="0.7"/>
<path d="M123.5 77.01L126.78 78.32L128.09 77.66L129.4 78.32L132.67 77.01" fill="none" stroke="#c89038" stroke-width="1.3" />
<path d="M125.79 80.61L127.43 78.97L129.07 80.61" fill="none" stroke="#c89038" stroke-width="1" />
<rect x="112.73" y="83.73" width="30.58" height="2.15" fill="#c08a70" stroke="#3b3d5c" stroke-width="1"/>
<rect x="121.41" y="84.95" width="13.16" height="2.14" fill="#c08a70" stroke="#3b3d5c" stroke-width="0.8"/>
<rect x="113.67" y="84.55" width="5.9" height="0.65" fill="#585a7c"/>
<rect x="136.61" y="84.55" width="5.89" height="0.65" fill="#585a7c"/>
<rect x="125.14" y="47.98" width="5.9" height="19.4" rx="2.5" fill="#585a7c" stroke="#3b3d5c" stroke-width="0.8"/>
<rect x="126.25" y="48.5" width="1.18" height="18.02" fill="#6e7092"/>
<path d="M147.31 79.1054H156.05L154.85 85.53H148.51Z" fill="#d8c8b8" stroke="#3b3d5c" stroke-width="0.8" />
<rect x="147.91" y="82.3177" width="7.5406" height="0.9" fill="#b8a090"/>
<rect x="145.705" y="60.27" width="3.5112" height="2.31712" fill="#2c4c50"/>
<rect x="149.623" y="60.27" width="5.0182" height="2.31712" fill="#2c4c50"/>
<rect x="144.198" y="61.2843" width="11.649" height="2.51998" fill="#2c4c50"/>
<rect x="154.747" y="61.8928" width="3.8126" height="1.91142" fill="#2c4c50"/>
<rect x="143.595" y="62.7042" width="15.5672" height="2.72283" fill="#2c4c50"/>
<rect x="143.896" y="64.3271" width="15.8686" height="3.53425" fill="#2c4c50"/>
<rect x="144.348" y="66.7613" width="14.9644" height="4.34566" fill="#2c4c50"/>
<rect x="144.951" y="70.007" width="14.0602" height="3.93996" fill="#2c4c50"/>
<rect x="145.403" y="72.8469" width="12.8546" height="3.53425" fill="#2c4c50"/>
<rect x="146.609" y="75.2812" width="10.4434" height="3.12854" fill="#2c4c50"/>
<rect x="148.116" y="77.3097" width="7.4294" height="2.92569" fill="#2c4c50"/>
<rect x="149.623" y="79.1354" width="4.4154" height="2.51998" fill="#2c4c50"/>
<rect x="146.255" y="60.82" width="2.4112" height="1.26712" fill="#2b8440"/>
<rect x="150.173" y="60.82" width="3.9182" height="1.26712" fill="#2b8440"/>
<rect x="144.748" y="61.8343" width="10.549" height="1.46998" fill="#2b8440"/>
<rect x="155.297" y="62.4428" width="2.7126" height="0.861416" fill="#2b8440"/>
<rect x="144.145" y="63.2542" width="14.4672" height="1.67283" fill="#2b8440"/>
<rect x="144.446" y="64.8771" width="14.7686" height="2.48425" fill="#2b8440"/>
<rect x="144.898" y="67.3113" width="13.8644" height="3.29566" fill="#2b8440"/>
<rect x="145.501" y="70.557" width="12.9602" height="2.88996" fill="#2b8440"/>
<rect x="145.953" y="73.3969" width="11.7546" height="2.48425" fill="#2b8440"/>
<rect x="147.159" y="75.8312" width="9.3434" height="2.07854" fill="#2b8440"/>
<rect x="148.666" y="77.8597" width="6.3294" height="1.87569" fill="#2b8440"/>
<rect x="150.173" y="79.6854" width="3.3154" height="1.46998" fill="#2b8440"/>
<rect x="148.666" y="64.4714" width="3.014" height="2.43425" fill="#1f6a3c"/>
<rect x="153.488" y="67.717" width="3.6168" height="2.43425" fill="#1f6a3c"/>
<rect x="146.255" y="70.9627" width="3.014" height="2.43425" fill="#1f6a3c"/>
<rect x="151.68" y="72.1798" width="3.014" height="2.83996" fill="#1f6a3c"/>
<rect x="145.049" y="66.0942" width="2.1098" height="2.02854" fill="#1f6a3c"/>
<rect x="148.365" y="75.0198" width="2.4112" height="2.43425" fill="#1f6a3c"/>
<rect x="145.953" y="62.0371" width="2.7126" height="1.62283" fill="#3fae42"/>
<rect x="151.077" y="62.4428" width="2.7126" height="1.62283" fill="#3fae42"/>
<rect x="152.584" y="65.2828" width="3.6168" height="1.62283" fill="#3fae42"/>
<rect x="145.652" y="65.6885" width="2.7126" height="1.82569" fill="#3fae42"/>
<rect x="148.666" y="68.9342" width="3.3154" height="1.62283" fill="#3fae42"/>
<rect x="155.297" y="69.3399" width="2.7126" height="2.02854" fill="#3fae42"/>
<rect x="146.858" y="72.5855" width="2.7126" height="1.62283" fill="#3fae42"/>
<rect x="152.283" y="73.8027" width="3.014" height="1.62283" fill="#3fae42"/>
<rect x="149.269" y="76.2369" width="2.4112" height="1.41998" fill="#3fae42"/>
<rect x="151.68" y="62.8485" width="1.507" height="0.811416" fill="#6bd23c"/>
<rect x="153.488" y="66.0942" width="1.507" height="0.811416" fill="#6bd23c"/>
<rect x="149.57" y="69.7456" width="1.507" height="0.811416" fill="#6bd23c"/>
<rect x="153.187" y="72.9912" width="1.507" height="0.811416" fill="#6bd23c"/>
<rect x="149.57" y="66.9056" width="0.9042" height="2.02854" fill="#96642c"/>
<rect x="154.091" y="68.1227" width="0.9042" height="1.62283" fill="#96642c"/>
<rect x="150.474" y="72.5855" width="0.9042" height="2.02854" fill="#96642c"/>
<rect x="151.228" y="77.0483" width="1.2056" height="4.05708" fill="#96642c"/>
<rect x="33.2" y="135.66" width="14.09" height="3.93" fill="#b8948e" opacity=".7"/>
<rect x="48.27" y="124.52" width="30.14" height="2.95" fill="#c8a090" opacity=".8"/>
<path d="M34.18 136.31L40.08 136.31L37.13 139.59Z" fill="#454868" />
<path d="M40.08 136.31L45.98 136.31L43.03 139.59Z" fill="#454868" />
<rect x="71.21" y="124.85" width="7.2" height="2.81" rx="1" fill="#454868"/>
<rect x="32.21" y="100.6" width="47.84" height="24.57" rx="3" fill="#9aa0c2" stroke="#3b3d5c" stroke-width="1"/>
<rect x="32.21" y="110.76" width="15.54" height="26.21" rx="2.5" fill="#a4aacb" stroke="#3b3d5c" stroke-width="1"/>
<rect x="32.87" y="111.41" width="14.22" height="13.76" fill="#a4aacb"/>
<rect x="33.2" y="101.58" width="46" height="3.93" fill="#a9afd0"/>
<rect x="33.2" y="105.51" width="46" height="5.57" fill="#8e95b8"/>
<rect x="33.2" y="111.08" width="46" height="1.12" fill="#565a7e"/>
<rect x="33.2" y="112.85" width="46" height="9.7" fill="#a6acce"/>
<rect x="48.27" y="122.55" width="30.93" height="0.99" fill="#565a7e"/>
<rect x="48.27" y="123.54" width="30.93" height="1.11" fill="#8e95b8"/>
<rect x="33.2" y="122.55" width="13.89" height="11.8" fill="#a6acce"/>
<rect x="33.2" y="134.35" width="13.89" height="0.98" fill="#565a7e"/>
<rect x="33.2" y="135.33" width="13.89" height="1.12" fill="#8e95b8"/>
<rect x="47.48" y="112.85" width="0.79" height="10.69" fill="#565a7e"/>
<rect x="63.47" y="112.85" width="0.66" height="10.69" fill="#7a80a6"/>
<rect x="126.12" y="107.09" width="18.35" height="3.6" fill="#b89a98" opacity=".8"/>
<rect x="113.84" y="97.23" width="21.74" height="12.77" fill="#dd9a38" stroke="#3b3d5c" stroke-width="1"/>
<rect x="114.98" y="99.22" width="6.55" height="0.66" fill="#c8842c"/>
<rect x="114.98" y="106.96" width="6.55" height="0.65" fill="#c8842c"/>
<ellipse cx="117.08" cy="103.48" rx="1.7038" ry="1.7038" fill="none" stroke="#c8842c" stroke-width="0.6" />
<path d="M122.19 105.12L125.79 100.53L130.71 99.22L136.28 99.22L136.61 95.95L139.23 97.78L142.83 97.59L143.49 99.88L146.76 99.22L145.12 102.83L145.12 106.1L141.85 109.05L136.61 109.05L135.29 106.76L130.71 105.78L128.09 107.42L126.12 105.12L124.48 105.45L123.5 108.07L122.19 107.74Z" fill="#8a8fba" stroke="#5a5e88" stroke-width="0.7" />
<rect x="137.92" y="100.21" width="4.58" height="0.98" fill="#6a6e98"/>
<rect x="139.23" y="103.48" width="3.93" height="0.86" fill="#6a6e98"/>
<rect x="129.4" y="100.53" width="5.89" height="3.94" fill="#9a9fc8"/>
<rect x="81.86" y="145.79" width="28.34" height="12.11" fill="#6f7f5a" stroke="#3b3d5c" stroke-width="1"/>
<rect x="83.96" y="147.89" width="24.14" height="7.91" fill="#dcb88c"/>
<rect x="193.92" y="72.4" width="12.24" height="18.46" fill="#c8a23c" stroke="#3b3d5c" stroke-width="1"/>
<rect x="194.27" y="72.75" width="11.6" height="1.11" fill="#e8cc60"/>
<rect x="195.79" y="75.57" width="8.57" height="13.42" fill="#4fa0a0" stroke="#6a5a28" stroke-width="0.8"/>
<rect x="195.84" y="75.63" width="8.39" height="3.15" fill="#78b8e0"/>
<path d="M195.84 78.78L198.99 78.12L200.96 76.81L204.23 77.14L204.23 80.74L195.84 80.74Z" fill="#c8a858" />
<ellipse cx="197.68" cy="83.37" rx="1.96592" ry="1.96592" fill="#3c98a0" />
<ellipse cx="201.94" cy="82.05" rx="2.09698" ry="1.96592" fill="#48a8a8" />
<ellipse cx="200.3" cy="86.97" rx="2.94888" ry="1.83486" fill="#389090" />
<rect x="198.99" y="80.74" width="1.64" height="8.2" fill="#a89030" opacity=".7"/>
<rect x="208.49" y="104.99" width="15.4" height="2.75" fill="#a8908e" opacity=".8"/>
<rect x="208.66" y="84.39" width="14.73" height="20.62" fill="#e88a38" stroke="#3b3d5c" stroke-width="1"/>
<rect x="208.95" y="84.68" width="2.49" height="8.52" fill="#f4a84c"/>
<rect x="220.62" y="84.68" width="2.62" height="8.52" fill="#f4a84c"/>
<rect x="208.16" y="93.2" width="15.73" height="1.63" fill="#3b3d5c"/>
<rect x="211.44" y="92.21" width="9.18" height="1.31" fill="#c8c0d0"/>
<rect x="208.95" y="94.83" width="14.29" height="4.59" fill="#d86030"/>
<rect x="208.95" y="100.08" width="14.29" height="4.58" fill="#d86030"/>
<rect x="208.95" y="99.09" width="14.29" height="0.99" fill="#3b3d5c"/>
<rect x="208.95" y="94.83" width="14.29" height="0.99" fill="#e87838"/>
<rect x="208.95" y="100.08" width="14.29" height="0.98" fill="#e87838"/>
<rect x="213.93" y="96.6" width="4.2" height="1.05" fill="#3b3d5c"/>
<rect x="213.93" y="101.85" width="4.2" height="1.04" fill="#3b3d5c"/>
<ellipse cx="216.03" cy="91.23" rx="3.60419" ry="1.7038" fill="#d07a38" stroke="#3b3d5c" stroke-width="0.6" />
<ellipse cx="216.03" cy="85" rx="4.32502" ry="5.11139" fill="#3ca04c" stroke="#3b3d5c" stroke-width="0.8" />
<ellipse cx="216.03" cy="82.19" rx="2.62123" ry="1.17955" fill="#7ad83c" />
<ellipse cx="216.03" cy="87.63" rx="2.49017" ry="1.17955" fill="none" stroke="#a0e040" stroke-width="1" />
<ellipse cx="216.03" cy="82.19" rx="1.44167" ry="0.524245" fill="#3ca04c" />
<rect x="228.48" y="114.16" width="24.25" height="2.3" fill="#a8908e" opacity=".8"/>
<rect x="229.63" y="77.31" width="19.97" height="4.24" fill="#e8505a" stroke="#3b3d5c" stroke-width="1"/>
<rect x="230.12" y="79.76" width="19" height="1.97" fill="#c8405c"/>
<rect x="229.63" y="112.04" width="19.97" height="3.07" fill="#d8485c" stroke="#3b3d5c" stroke-width="1"/>
<rect x="228.32" y="90.42" width="22.92" height="22.59" fill="#1e9cf0" stroke="#3b3d5c" stroke-width="1"/>
<rect x="229.63" y="81.9" width="19.97" height="9.81" fill="#cfc8dc" stroke="#3b3d5c" stroke-width="1"/>
<rect x="230.12" y="82.38" width="19" height="1.97" fill="#ebe6f2"/>
<rect x="234.38" y="81.4" width="10.48" height="0.79" fill="#c8405c"/>
<rect x="228.61" y="93.2" width="22.28" height="1.96" fill="#e6e2f0"/>
<rect x="228.61" y="97.45" width="22.28" height="1.97" fill="#e6e2f0"/>
<rect x="228.61" y="101.71" width="22.28" height="1.97" fill="#e6e2f0"/>
<rect x="228.61" y="105.97" width="22.28" height="1.97" fill="#e6e2f0"/>
<rect x="228.61" y="109.91" width="22.28" height="1.96" fill="#e6e2f0"/>
<rect x="228.61" y="91.88" width="22.28" height="1.32" fill="#48b4f4"/>
<ellipse cx="263.54" cy="85.91" rx="15" ry="13" fill="url(#glow)" />
<rect x="261.54" y="70.91" width="4" height="4.5" rx="1.6" fill="#e0a050" stroke="#3b3d5c" stroke-width="0.7"/>
<rect x="262.74" y="74.91" width="1.6" height="3" fill="#9a9aac"/>
<ellipse cx="263.54" cy="78.11" rx="1.8" ry="1.8" fill="#a9a9b4" />
<path d="M259.94 78.51H267.14L265.94 81.11H261.14Z" fill="#e0a050" stroke="#3b3d5c" stroke-width="0.6" />
<rect x="261.94" y="80.91" width="3.2" height="1.4" fill="#f4ecc8"/>
<path d="M275.405 94.9654H284.035L282.835 101.39H276.605Z" fill="#d8c8c0" stroke="#3b3d5c" stroke-width="0.8" />
<rect x="276.005" y="98.1777" width="7.4304" height="0.9" fill="#b8a098"/>
<rect x="273.813" y="76.13" width="3.4808" height="2.31712" fill="#2c4c50"/>
<rect x="277.682" y="76.13" width="4.9688" height="2.31712" fill="#2c4c50"/>
<rect x="272.325" y="77.1443" width="11.516" height="2.51998" fill="#2c4c50"/>
<rect x="282.741" y="77.7528" width="3.7784" height="1.91142" fill="#2c4c50"/>
<rect x="271.73" y="78.5642" width="15.3848" height="2.72283" fill="#2c4c50"/>
<rect x="272.028" y="80.1871" width="15.6824" height="3.53425" fill="#2c4c50"/>
<rect x="272.474" y="82.6213" width="14.7896" height="4.34566" fill="#2c4c50"/>
<rect x="273.069" y="85.867" width="13.8968" height="3.93996" fill="#2c4c50"/>
<rect x="273.516" y="88.7069" width="12.7064" height="3.53425" fill="#2c4c50"/>
<rect x="274.706" y="91.1412" width="10.3256" height="3.12854" fill="#2c4c50"/>
<rect x="276.194" y="93.1697" width="7.3496" height="2.92569" fill="#2c4c50"/>
<rect x="277.682" y="94.9954" width="4.3736" height="2.51998" fill="#2c4c50"/>
<rect x="274.363" y="76.68" width="2.3808" height="1.26712" fill="#2b8440"/>
<rect x="278.232" y="76.68" width="3.8688" height="1.26712" fill="#2b8440"/>
<rect x="272.875" y="77.6943" width="10.416" height="1.46998" fill="#2b8440"/>
<rect x="283.291" y="78.3028" width="2.6784" height="0.861416" fill="#2b8440"/>
<rect x="272.28" y="79.1142" width="14.2848" height="1.67283" fill="#2b8440"/>
<rect x="272.578" y="80.7371" width="14.5824" height="2.48425" fill="#2b8440"/>
<rect x="273.024" y="83.1713" width="13.6896" height="3.29566" fill="#2b8440"/>
<rect x="273.619" y="86.417" width="12.7968" height="2.88996" fill="#2b8440"/>
<rect x="274.066" y="89.2569" width="11.6064" height="2.48425" fill="#2b8440"/>
<rect x="275.256" y="91.6912" width="9.2256" height="2.07854" fill="#2b8440"/>
<rect x="276.744" y="93.7197" width="6.2496" height="1.87569" fill="#2b8440"/>
<rect x="278.232" y="95.5454" width="3.2736" height="1.46998" fill="#2b8440"/>
<rect x="276.744" y="80.3314" width="2.976" height="2.43425" fill="#1f6a3c"/>
<rect x="281.506" y="83.577" width="3.5712" height="2.43425" fill="#1f6a3c"/>
<rect x="274.363" y="86.8227" width="2.976" height="2.43425" fill="#1f6a3c"/>
<rect x="279.72" y="88.0398" width="2.976" height="2.83996" fill="#1f6a3c"/>
<rect x="273.173" y="81.9542" width="2.0832" height="2.02854" fill="#1f6a3c"/>
<rect x="276.446" y="90.8798" width="2.3808" height="2.43425" fill="#1f6a3c"/>
<rect x="274.066" y="77.8971" width="2.6784" height="1.62283" fill="#3fae42"/>
<rect x="279.125" y="78.3028" width="2.6784" height="1.62283" fill="#3fae42"/>
<rect x="280.613" y="81.1428" width="3.5712" height="1.62283" fill="#3fae42"/>
<rect x="273.768" y="81.5485" width="2.6784" height="1.82569" fill="#3fae42"/>
<rect x="276.744" y="84.7942" width="3.2736" height="1.62283" fill="#3fae42"/>
<rect x="283.291" y="85.1999" width="2.6784" height="2.02854" fill="#3fae42"/>
<rect x="274.958" y="88.4455" width="2.6784" height="1.62283" fill="#3fae42"/>
<rect x="280.315" y="89.6627" width="2.976" height="1.62283" fill="#3fae42"/>
<rect x="277.339" y="92.0969" width="2.3808" height="1.41998" fill="#3fae42"/>
<rect x="279.72" y="78.7085" width="1.488" height="0.811416" fill="#6bd23c"/>
<rect x="281.506" y="81.9542" width="1.488" height="0.811416" fill="#6bd23c"/>
<rect x="277.637" y="85.6056" width="1.488" height="0.811416" fill="#6bd23c"/>
<rect x="281.208" y="88.8512" width="1.488" height="0.811416" fill="#6bd23c"/>
<rect x="277.637" y="82.7656" width="0.8928" height="2.02854" fill="#96642c"/>
<rect x="282.101" y="83.9827" width="0.8928" height="1.62283" fill="#96642c"/>
<rect x="278.53" y="88.4455" width="0.8928" height="2.02854" fill="#96642c"/>
<rect x="279.274" y="92.9083" width="1.1904" height="4.05708" fill="#96642c"/>
<rect x="309.1" y="103.29" width="22.7" height="3" fill="#a89296" opacity=".8"/>
<rect x="308.6" y="66.17" width="23.7" height="38.12" fill="#3d3f5e" stroke="#3b3d5c" stroke-width="1"/>
<rect x="309.1" y="66.67" width="2.2" height="37.12" fill="#c9673a"/>
<rect x="329.6" y="66.67" width="2.2" height="37.12" fill="#c9673a"/>
<rect x="309.1" y="66.67" width="0.9" height="37.12" fill="#e8984c"/>
<rect x="329.6" y="66.67" width="0.9" height="37.12" fill="#e8984c"/>
<rect x="311.9" y="67.57" width="17.1" height="7.2" fill="#d98442" stroke="#3b3d5c" stroke-width="0.8"/>
<rect x="312.3" y="73.27" width="16.3" height="1.2" fill="#c76a36"/>
<rect x="313.2" y="76.87" width="1.71667" height="4.84" fill="#e8422c"/>
<rect x="313.2" y="79.09" width="1.71667" height="1.572" fill="#38a848"/>
<rect x="315.317" y="76.87" width="1.71667" height="4.84" fill="#2a6fd6"/>
<rect x="315.317" y="79.09" width="1.71667" height="1.572" fill="#e8422c"/>
<rect x="317.433" y="76.87" width="1.71667" height="4.84" fill="#c03030"/>
<rect x="317.433" y="79.09" width="1.71667" height="1.572" fill="#f6d03a"/>
<rect x="312.7" y="81.71" width="6.95" height="1.7" fill="#d8803e"/>
<rect x="316.603" y="80.71" width="2.565" height="1" fill="#d8803e"/>
<rect x="313.2" y="85.31" width="1.71667" height="4.84" fill="#e86a8c"/>
<rect x="313.2" y="87.53" width="1.71667" height="1.572" fill="#f6d03a"/>
<rect x="315.317" y="85.31" width="1.71667" height="4.84" fill="#f6d03a"/>
<rect x="315.317" y="87.53" width="1.71667" height="1.572" fill="#f0a020"/>
<rect x="317.433" y="85.31" width="1.71667" height="4.84" fill="#e8422c"/>
<rect x="317.433" y="87.53" width="1.71667" height="1.572" fill="#d8c8a0"/>
<rect x="312.7" y="90.15" width="6.95" height="1.7" fill="#d8803e"/>
<rect x="316.603" y="89.15" width="2.565" height="1" fill="#d8803e"/>
<rect x="313.2" y="93.75" width="1.71667" height="4.84" fill="#38a848"/>
<rect x="313.2" y="95.97" width="1.71667" height="1.572" fill="#d8c8a0"/>
<rect x="315.317" y="93.75" width="1.71667" height="4.84" fill="#c03030"/>
<rect x="315.317" y="95.97" width="1.71667" height="1.572" fill="#e86a8c"/>
<rect x="317.433" y="93.75" width="1.71667" height="4.84" fill="#e86a8c"/>
<rect x="317.433" y="95.97" width="1.71667" height="1.572" fill="#c03030"/>
<rect x="312.7" y="98.59" width="6.95" height="1.7" fill="#d8803e"/>
<rect x="316.603" y="97.59" width="2.565" height="1" fill="#d8803e"/>
<rect x="319.55" y="75.37" width="1.8" height="25.82" fill="#c9673a"/>
<rect x="321.75" y="76.87" width="1.71667" height="4.84" fill="#d8c8a0"/>
<rect x="321.75" y="79.09" width="1.71667" height="1.572" fill="#c03030"/>
<rect x="323.867" y="76.87" width="1.71667" height="4.84" fill="#e8422c"/>
<rect x="323.867" y="79.09" width="1.71667" height="1.572" fill="#2a6fd6"/>
<rect x="321.25" y="81.71" width="6.95" height="1.7" fill="#d8803e"/>
<rect x="325.153" y="80.71" width="2.565" height="1" fill="#d8803e"/>
<rect x="321.75" y="85.31" width="1.71667" height="4.84" fill="#f08030"/>
<rect x="321.75" y="87.53" width="1.71667" height="1.572" fill="#f08030"/>
<rect x="325.983" y="85.31" width="1.71667" height="4.84" fill="#d8c8a0"/>
<rect x="325.983" y="87.53" width="1.71667" height="1.572" fill="#e8422c"/>
<rect x="321.25" y="90.15" width="6.95" height="1.7" fill="#d8803e"/>
<rect x="325.153" y="89.15" width="2.565" height="1" fill="#d8803e"/>
<rect x="323.867" y="93.75" width="1.71667" height="4.84" fill="#38a848"/>
<rect x="323.867" y="95.97" width="1.71667" height="1.572" fill="#f6d03a"/>
<rect x="325.983" y="93.75" width="1.71667" height="4.84" fill="#f08030"/>
<rect x="325.983" y="95.97" width="1.71667" height="1.572" fill="#f0a020"/>
<rect x="321.25" y="98.59" width="6.95" height="1.7" fill="#d8803e"/>
<rect x="325.153" y="97.59" width="2.565" height="1" fill="#d8803e"/>
<rect x="311.3" y="100.99" width="18.3" height="2" fill="#b8432c"/>
<rect x="311.38" y="146.73" width="8.84" height="2.95" fill="#a8908e"/>
<rect x="320.88" y="149.68" width="13.76" height="7.54" fill="#a8908e"/>
<rect x="311.18" y="128.84" width="2.62" height="19.4" rx="1" fill="#2f6f68" stroke="#3b3d5c" stroke-width="0.8"/>
<rect x="313.84" y="136.42" width="6.21" height="8.18" fill="#eca44c" stroke="#3b3d5c" stroke-width="1"/>
<rect x="318.91" y="144.44" width="1.44" height="3.28" fill="#2f6f68"/>
<rect x="321.05" y="123.31" width="13.35" height="23.91" fill="#2a8a70" stroke="#3b3d5c" stroke-width="1"/>
<rect x="332.02" y="123.8" width="2.29" height="22.93" fill="#1f7460"/>
<rect x="322.21" y="124.61" width="8.8" height="7.36" fill="#f4f0e8" stroke="#a82a58" stroke-width="0.7"/>
<rect x="322.87" y="132.01" width="9.13" height="8.93" fill="#f4f0e8" stroke="#a82a58" stroke-width="0.7"/>
<ellipse cx="326.45" cy="128.06" rx="1.44167" ry="1.17955" fill="#4ac8c0" />
<ellipse cx="328.41" cy="128.58" rx="1.04849" ry="1.04849" fill="#f06a8a" />
<rect x="325.79" y="126.75" width="2.95" height="0.78" fill="#9ad040"/>
<rect x="326.37" y="133.88" width="3.76" height="3.1" fill="#e8e4dc" stroke="#b8b0a8" stroke-width="0.5"/>
<rect x="321.05" y="147.89" width="12.96" height="1.62" fill="#e8883a" stroke="#3b3d5c" stroke-width="1"/>
<rect x="321.51" y="150.51" width="1.62" height="5.55" fill="#e8e0d0" stroke="#3b3d5c" stroke-width="1"/>
<rect x="331.99" y="150.51" width="1.62" height="5.55" fill="#e8e0d0" stroke="#3b3d5c" stroke-width="1"/></g></svg>
<svg class="grid" width="831" height="803" viewBox="0 0 831 803" style="position:absolute;left:0;top:0">
<path d="M21.5 0V803M50.5 0V803M108.5 0V803M137.5 0V803M166.5 0V803M195.5 0V803M225 0V803M254 0V803M283 0V803M312 0V803M341 0V803M399 0V803M428.5 0V803M457.5 0V803M486.5 0V803M515.5 0V803M544.5 0V803M573.5 0V803M602.5 0V803M631.5 0V803M690 0V803M719 0V803M748 0V803M777 0V803M806 0V803" stroke="#000" stroke-opacity="0.43" stroke-width="1" stroke-dasharray="2.9 1.1" stroke-dashoffset="0.3" fill="none"/><path d="M0 9.5H831M0 38.5H831M0 67.5H831M0 96.5H831M0 125.5H831M0 155H831M0 184H831M0 213H831M0 242H831M0 300H831M0 329H831M0 358.5H831M0 387.5H831M0 416.5H831M0 445.5H831M0 474.5H831M0 503.5H831M0 532.5H831M0 591H831M0 620H831M0 649H831M0 678H831M0 707H831M0 736H831M0 765H831M0 794.5H831" stroke="#000" stroke-opacity="0.43" stroke-width="1" stroke-dasharray="2.5 1.5" stroke-dashoffset="0.2" fill="none"/>
<path d="M79.5 0V803M370 0V803M661 0V803" stroke="#000" stroke-opacity="0.8" stroke-width="1" stroke-dasharray="2.9 1.1" stroke-dashoffset="0.3" fill="none"/><path d="M0 271H831M0 562H831" stroke="#000" stroke-opacity="0.8" stroke-width="1" stroke-dasharray="2.5 1.5" stroke-dashoffset="0.2" fill="none"/>
</svg>
<div class="abs" style="left:821.4px;top:310.4px;width:8px;height:184.6px;border-radius:4px;background:rgba(236,236,236,.86);box-shadow:0 0 0 .6px rgba(0,0,0,.28)"></div>
<div class="abs" style="left:354.6px;top:794.8px;width:134px;height:7.2px;border-radius:3.6px;background:rgba(236,236,236,.86);box-shadow:0 0 0 .6px rgba(0,0,0,.28)"></div>
</div>
<div id="right" class="abs">
<div class="dockhead" style="left:0;top:0;width:418px"><div class="dbtn" style="left:2px"><svg width="14" height="14" viewBox="0 0 14 14"><path d="M4.2 4.2L9.8 9.8M9.8 4.2L4.2 9.8" stroke="#4c4c4c" stroke-width="1.6" fill="none"/></svg></div><div class="dbtn" style="left:20px"><svg width="14" height="14" viewBox="0 0 14 14"><path d="M5.5 5.5V4h5v4.5H9" stroke="#4c4c4c" stroke-width="1.1" fill="none"/><rect x="3.6" y="5.8" width="5" height="4.4" stroke="#4c4c4c" stroke-width="1.1" fill="none"/></svg></div><div class="t" style="left:209.6px;top:3.5px;font-size:12px;line-height:14px;color:#dedede;letter-spacing:-0.100px;transform:scaleX(0.9653);transform-origin:0 0;will-change:transform;">Layers</div></div>
<div class="abs" style="left:0;top:22px;width:418px;height:37px;background:#323232"></div>
<div class="t" style="left:0.4px;top:26.5px;font-size:13px;line-height:15px;color:#f2f2f2;letter-spacing:0.216px;">Opacity:</div>
<div class="abs" style="left:60px;top:30.5px;width:348px;height:4px;border-radius:2px;background:#a3a3a3"></div>
<div class="abs" style="left:397px;top:22.5px;width:20px;height:20px;border-radius:50%;background:#8f8f8f"></div>
<div class="abs" style="left:0;top:59px;width:418px;height:261px;background:#151515">
<div class="lrow" style="top:1px;"><svg class="ic" style="left:27px;top:4px" width="13" height="13" viewBox="0 0 13 13"><rect x="0" y="0" width="13" height="13" fill="#3a62b4"/><rect x="1.1" y="1.1" width="2.9" height="2.9" fill="#dbe6fb"/><rect x="1.1" y="5.05" width="2.9" height="2.9" fill="#dbe6fb"/><rect x="1.1" y="9" width="2.9" height="2.9" fill="#dbe6fb"/><rect x="5.05" y="1.1" width="2.9" height="2.9" fill="#dbe6fb"/><rect x="5.05" y="5.05" width="2.9" height="2.9" fill="#dbe6fb"/><rect x="5.05" y="9" width="2.9" height="2.9" fill="#dbe6fb"/><rect x="9" y="1.1" width="2.9" height="2.9" fill="#dbe6fb"/><rect x="9" y="5.05" width="2.9" height="2.9" fill="#dbe6fb"/><rect x="9" y="9" width="2.9" height="2.9" fill="#dbe6fb"/></svg><div class="t" style="left:47.9px;top:2.5px;font-size:13px;line-height:15px;color:#f2f2f2;letter-spacing:0.449px;">objects-higher-higher</div><svg class="ic" style="left:376.4px;top:3.1px" width="17" height="14" viewBox="0 0 17 14"><path d="M1.2 7Q8.500 -2.600 15.800 7Q8.500 16.600 1.200 7z" fill="#fafafa" stroke="#6c6c6c" stroke-width="1.300"/><circle cx="8.500" cy="6.800" r="3.100" fill="#5e5e5e"/><circle cx="8.500" cy="7.200" r="1.700" fill="#444"/><circle cx="8.300" cy="5.400" r=".75" fill="#e4e4e4"/></svg><svg class="ic" style="left:401px;top:3.1px" width="14" height="16" viewBox="0 0 14 16"><path d="M7.6 7V4.4Q7.6 1.4 10.4 1.4Q13.2 1.4 13.2 4.4V6" stroke="#6c6c6c" stroke-width="1.4" fill="none"/><rect x=".4" y="7" width="10" height="8" fill="#636363"/></svg></div>
<div class="lrow" style="top:21px;"><svg class="ic" style="left:27px;top:4px" width="13" height="13" viewBox="0 0 13 13"><rect x="0" y="0" width="13" height="13" fill="#3a62b4"/><rect x="1.1" y="1.1" width="2.9" height="2.9" fill="#dbe6fb"/><rect x="1.1" y="5.05" width="2.9" height="2.9" fill="#dbe6fb"/><rect x="1.1" y="9" width="2.9" height="2.9" fill="#dbe6fb"/><rect x="5.05" y="1.1" width="2.9" height="2.9" fill="#dbe6fb"/><rect x="5.05" y="5.05" width="2.9" height="2.9" fill="#dbe6fb"/><rect x="5.05" y="9" width="2.9" height="2.9" fill="#dbe6fb"/><rect x="9" y="1.1" width="2.9" height="2.9" fill="#dbe6fb"/><rect x="9" y="5.05" width="2.9" height="2.9" fill="#dbe6fb"/><rect x="9" y="9" width="2.9" height="2.9" fill="#dbe6fb"/></svg><div class="t" style="left:47.9px;top:2.5px;font-size:13px;line-height:15px;color:#f2f2f2;letter-spacing:0.442px;">objects-higher</div><svg class="ic" style="left:376.4px;top:3.1px" width="17" height="14" viewBox="0 0 17 14"><path d="M1.2 7Q8.500 -2.600 15.800 7Q8.500 16.600 1.200 7z" fill="#fafafa" stroke="#6c6c6c" stroke-width="1.300"/><circle cx="8.500" cy="6.800" r="3.100" fill="#5e5e5e"/><circle cx="8.500" cy="7.200" r="1.700" fill="#444"/><circle cx="8.300" cy="5.400" r=".75" fill="#e4e4e4"/></svg><svg class="ic" style="left:401px;top:3.1px" width="14" height="16" viewBox="0 0 14 16"><path d="M7.6 7V4.4Q7.6 1.4 10.4 1.4Q13.2 1.4 13.2 4.4V6" stroke="#6c6c6c" stroke-width="1.4" fill="none"/><rect x=".4" y="7" width="10" height="8" fill="#636363"/></svg></div>
<div class="lrow" style="top:41px;"><svg class="ic" style="left:27px;top:4px" width="13" height="13" viewBox="0 0 13 13"><rect x="0" y="0" width="13" height="13" fill="#3a62b4"/><rect x="1.1" y="1.1" width="2.9" height="2.9" fill="#dbe6fb"/><rect x="1.1" y="5.05" width="2.9" height="2.9" fill="#dbe6fb"/><rect x="1.1" y="9" width="2.9" height="2.9" fill="#dbe6fb"/><rect x="5.05" y="1.1" width="2.9" height="2.9" fill="#dbe6fb"/><rect x="5.05" y="5.05" width="2.9" height="2.9" fill="#dbe6fb"/><rect x="5.05" y="9" width="2.9" height="2.9" fill="#dbe6fb"/><rect x="9" y="1.1" width="2.9" height="2.9" fill="#dbe6fb"/><rect x="9" y="5.05" width="2.9" height="2.9" fill="#dbe6fb"/><rect x="9" y="9" width="2.9" height="2.9" fill="#dbe6fb"/></svg><div class="t" style="left:47.9px;top:2.5px;font-size:13px;line-height:15px;color:#f2f2f2;letter-spacing:0.366px;">objects</div><svg class="ic" style="left:376.4px;top:3.1px" width="17" height="14" viewBox="0 0 17 14"><path d="M1.2 7Q8.500 -2.600 15.800 7Q8.500 16.600 1.200 7z" fill="#fafafa" stroke="#6c6c6c" stroke-width="1.300"/><circle cx="8.500" cy="6.800" r="3.100" fill="#5e5e5e"/><circle cx="8.500" cy="7.200" r="1.700" fill="#444"/><circle cx="8.300" cy="5.400" r=".75" fill="#e4e4e4"/></svg><svg class="ic" style="left:401px;top:3.1px" width="14" height="16" viewBox="0 0 14 16"><path d="M7.6 7V4.4Q7.6 1.4 10.4 1.4Q13.2 1.4 13.2 4.4V6" stroke="#6c6c6c" stroke-width="1.4" fill="none"/><rect x=".4" y="7" width="10" height="8" fill="#636363"/></svg></div>
<div class="lrow" style="top:61px;"><svg class="ic" style="left:27px;top:4px" width="13" height="13" viewBox="0 0 13 13"><rect x="0" y="0" width="13" height="13" fill="#3a62b4"/><rect x="1.1" y="1.1" width="2.9" height="2.9" fill="#dbe6fb"/><rect x="1.1" y="5.05" width="2.9" height="2.9" fill="#dbe6fb"/><rect x="1.1" y="9" width="2.9" height="2.9" fill="#dbe6fb"/><rect x="5.05" y="1.1" width="2.9" height="2.9" fill="#dbe6fb"/><rect x="5.05" y="5.05" width="2.9" height="2.9" fill="#dbe6fb"/><rect x="5.05" y="9" width="2.9" height="2.9" fill="#dbe6fb"/><rect x="9" y="1.1" width="2.9" height="2.9" fill="#dbe6fb"/><rect x="9" y="5.05" width="2.9" height="2.9" fill="#dbe6fb"/><rect x="9" y="9" width="2.9" height="2.9" fill="#dbe6fb"/></svg><div class="t" style="left:47.9px;top:2.5px;font-size:13px;line-height:15px;color:#f2f2f2;letter-spacing:0.048px;">walls</div><svg class="ic" style="left:376.4px;top:3.1px" width="17" height="14" viewBox="0 0 17 14"><path d="M1.2 7Q8.500 -2.600 15.800 7Q8.500 16.600 1.200 7z" fill="#fafafa" stroke="#6c6c6c" stroke-width="1.300"/><circle cx="8.500" cy="6.800" r="3.100" fill="#5e5e5e"/><circle cx="8.500" cy="7.200" r="1.700" fill="#444"/><circle cx="8.300" cy="5.400" r=".75" fill="#e4e4e4"/></svg><svg class="ic" style="left:401px;top:3.1px" width="14" height="16" viewBox="0 0 14 16"><path d="M7.6 7V4.4Q7.6 1.4 10.4 1.4Q13.2 1.4 13.2 4.4V6" stroke="#6c6c6c" stroke-width="1.4" fill="none"/><rect x=".4" y="7" width="10" height="8" fill="#636363"/></svg></div>
<div class="lrow" style="top:81px;"><svg class="ic" style="left:27px;top:4px" width="13" height="13" viewBox="0 0 13 13"><rect x="0" y="0" width="13" height="13" fill="#3a62b4"/><rect x="1.1" y="1.1" width="2.9" height="2.9" fill="#dbe6fb"/><rect x="1.1" y="5.05" width="2.9" height="2.9" fill="#dbe6fb"/><rect x="1.1" y="9" width="2.9" height="2.9" fill="#dbe6fb"/><rect x="5.05" y="1.1" width="2.9" height="2.9" fill="#dbe6fb"/><rect x="5.05" y="5.05" width="2.9" height="2.9" fill="#dbe6fb"/><rect x="5.05" y="9" width="2.9" height="2.9" fill="#dbe6fb"/><rect x="9" y="1.1" width="2.9" height="2.9" fill="#dbe6fb"/><rect x="9" y="5.05" width="2.9" height="2.9" fill="#dbe6fb"/><rect x="9" y="9" width="2.9" height="2.9" fill="#dbe6fb"/></svg><div class="t" style="left:47.9px;top:2.5px;font-size:13px;line-height:15px;color:#f2f2f2;letter-spacing:0.451px;">objects-lower</div><svg class="ic" style="left:376.4px;top:3.1px" width="17" height="14" viewBox="0 0 17 14"><path d="M1.2 7Q8.500 -2.600 15.800 7Q8.500 16.600 1.200 7z" fill="#fafafa" stroke="#6c6c6c" stroke-width="1.300"/><circle cx="8.500" cy="6.800" r="3.100" fill="#5e5e5e"/><circle cx="8.500" cy="7.200" r="1.700" fill="#444"/><circle cx="8.300" cy="5.400" r=".75" fill="#e4e4e4"/></svg><svg class="ic" style="left:401px;top:3.1px" width="14" height="16" viewBox="0 0 14 16"><path d="M7.6 7V4.4Q7.6 1.4 10.4 1.4Q13.2 1.4 13.2 4.4V6" stroke="#6c6c6c" stroke-width="1.4" fill="none"/><rect x=".4" y="7" width="10" height="8" fill="#636363"/></svg></div>
<div class="lrow" style="top:101px;"><svg class="ic" style="left:27px;top:4px" width="13" height="13" viewBox="0 0 13 13"><rect x="0" y="0" width="13" height="13" fill="#3a62b4"/><rect x="1.1" y="1.1" width="2.9" height="2.9" fill="#dbe6fb"/><rect x="1.1" y="5.05" width="2.9" height="2.9" fill="#dbe6fb"/><rect x="1.1" y="9" width="2.9" height="2.9" fill="#dbe6fb"/><rect x="5.05" y="1.1" width="2.9" height="2.9" fill="#dbe6fb"/><rect x="5.05" y="5.05" width="2.9" height="2.9" fill="#dbe6fb"/><rect x="5.05" y="9" width="2.9" height="2.9" fill="#dbe6fb"/><rect x="9" y="1.1" width="2.9" height="2.9" fill="#dbe6fb"/><rect x="9" y="5.05" width="2.9" height="2.9" fill="#dbe6fb"/><rect x="9" y="9" width="2.9" height="2.9" fill="#dbe6fb"/></svg><div class="t" style="left:47.9px;top:2.5px;font-size:13px;line-height:15px;color:#f2f2f2;letter-spacing:-0.058px;">Tile Layer 1</div><svg class="ic" style="left:376.4px;top:3.1px" width="17" height="14" viewBox="0 0 17 14"><path d="M1.2 7Q8.500 -2.600 15.800 7Q8.500 16.600 1.200 7z" fill="#fafafa" stroke="#6c6c6c" stroke-width="1.300"/><circle cx="8.500" cy="6.800" r="3.100" fill="#5e5e5e"/><circle cx="8.500" cy="7.200" r="1.700" fill="#444"/><circle cx="8.300" cy="5.400" r=".75" fill="#e4e4e4"/></svg><svg class="ic" style="left:401px;top:3.1px" width="14" height="16" viewBox="0 0 14 16"><path d="M7.6 7V4.4Q7.6 1.4 10.4 1.4Q13.2 1.4 13.2 4.4V6" stroke="#6c6c6c" stroke-width="1.4" fill="none"/><rect x=".4" y="7" width="10" height="8" fill="#636363"/></svg></div>
<div class="lrow" style="top:121px;background:#303030"><svg class="ic" style="left:27px;top:4px" width="13" height="13" viewBox="0 0 13 13"><rect x="0" y="0" width="13" height="13" fill="#3a62b4"/><rect x="1.1" y="1.1" width="2.9" height="2.9" fill="#dbe6fb"/><rect x="1.1" y="5.05" width="2.9" height="2.9" fill="#dbe6fb"/><rect x="1.1" y="9" width="2.9" height="2.9" fill="#dbe6fb"/><rect x="5.05" y="1.1" width="2.9" height="2.9" fill="#dbe6fb"/><rect x="5.05" y="5.05" width="2.9" height="2.9" fill="#dbe6fb"/><rect x="5.05" y="9" width="2.9" height="2.9" fill="#dbe6fb"/><rect x="9" y="1.1" width="2.9" height="2.9" fill="#dbe6fb"/><rect x="9" y="5.05" width="2.9" height="2.9" fill="#dbe6fb"/><rect x="9" y="9" width="2.9" height="2.9" fill="#dbe6fb"/></svg><div class="t" style="left:47.9px;top:2.5px;font-size:13px;line-height:15px;color:#f2f2f2;font-weight:bold;letter-spacing:-0.030px;">collisions</div><svg class="ic" style="left:376.4px;top:5px" width="16" height="11" viewBox="0 0 16 11"><path d="M1 3Q8 9.5 15 3" stroke="#5a5a5a" stroke-width="1.3" fill="none"/><path d="M3 5.5L2 7.5M5.5 7L5 9M8 7.5V9.6M10.5 7L11 9M13 5.5L14 7.5" stroke="#505050" stroke-width="1" fill="none"/></svg><svg class="ic" style="left:401px;top:3.1px" width="14" height="16" viewBox="0 0 14 16"><path d="M7.6 7V4.4Q7.6 1.4 10.4 1.4Q13.2 1.4 13.2 4.4V6" stroke="#6c6c6c" stroke-width="1.4" fill="none"/><rect x=".4" y="7" width="10" height="8" fill="#636363"/></svg></div>
</div>
<div class="abs" style="left:0;top:320px;width:418px;height:28px;background:#2f2f2f;border-top:1px solid #3d3d3d"><svg class="ic" style="left:0;top:-1px" width="418" height="28" viewBox="1091 416 418 28"><defs><radialGradient id="gst2"><stop offset="0" stop-color="#fff"/><stop offset=".45" stop-color="#fff36a"/><stop offset=".75" stop-color="#e8d400"/><stop offset="1" stop-color="#c8b400" stop-opacity="0"/></radialGradient><linearGradient id="gpg2" x1="0" y1="0" x2="0" y2="1"><stop offset="0" stop-color="#fafafa"/><stop offset="1" stop-color="#dcdcdc"/></linearGradient><linearGradient id="gbl" x1="0" y1="0" x2="0" y2="1"><stop offset="0" stop-color="#4a98e8"/><stop offset="1" stop-color="#1c5cb0"/></linearGradient><linearGradient id="gtr" x1="0" y1="0" x2="1" y2="0"><stop offset="0" stop-color="#8a8e8a"/><stop offset=".5" stop-color="#f0f0f0"/><stop offset="1" stop-color="#7a7e7a"/></linearGradient></defs><rect x="1098.2" y="422.2" width="12.6" height="15.4" rx="1.2" fill="url(#gpg2)" stroke="#bdbdbd" stroke-width=".5"/><circle cx="1108.2" cy="426.8" r="5.4" fill="url(#gst2)"/><path d="M1108.2 423.6l1 2.200 2.400.2-1.800 1.600.5 2.400-2.100-1.300-2.100 1.300.5-2.400-1.800-1.600 2.400-.2z" fill="#fff"/><path d="M1110.200 437.400l1.800 1.800 3.400-3.600" stroke="#e8e8e8" stroke-width="1" fill="none"/><path d="M1134.900 423.200l6.800 7.400h-3.800v6.400h-6v-6.400h-3.800z" fill="url(#gbl)" stroke="#164c94" stroke-width=".6"/><path d="M1164.600 437.200l6.800-7.400h-3.800v-6.400h-6v6.400h-3.800z" fill="#2a5288" stroke="#1c3c68" stroke-width=".6"/><rect x="1191" y="426.200" width="11.800" height="10.600" fill="#d8dce0" stroke="#8a8e92" stroke-width=".6"/><rect x="1192.600" y="427.800" width="8.600" height="7.400" fill="#4a78b8"/><rect x="1187" y="422.400" width="11.800" height="10.600" fill="#e8ecf0" stroke="#8a8e92" stroke-width=".6"/><rect x="1188.600" y="424" width="8.600" height="7.400" fill="#3a68a8"/><path d="M1188.600 431.400l3-3 2 1.600 1.600-1.200 2 2.600z" fill="#2a3c58"/><rect x="1188.600" y="424" width="8.600" height="2.400" fill="#6c98d0"/><path d="M1219.6 426.8h10.400l-1 9.600q-.2 1.200-1.400 1.200h-5.600q-1.200 0-1.400-1.200z" fill="url(#gtr)" stroke="#4a4e4a" stroke-width=".5"/><path d="M1222.4 429.8v6.600M1224.8 429.8v7M1227.2 429.8v6.600" stroke="#5a5e5a" stroke-width="1"/><path d="M1223.6 429.8v6.600M1226 429.8v7" stroke="#fafafa" stroke-width=".8"/><ellipse cx="1224.8" cy="426.2" rx="6.400" ry="3.200" fill="#dfe3df" stroke="#9a9e9a" stroke-width=".6"/><ellipse cx="1224.8" cy="426" rx="3.600" ry="1.500" fill="#3e423e"/><path d="M1244.400 418.500V440" stroke="#b0b0b0" stroke-width="1" stroke-dasharray="1 2"/><rect x="1257" y="421.800" width="9.600" height="9.600" fill="#f4f4f4"/><rect x="1263.400" y="428.400" width="9.600" height="9.600" fill="#f4f4f4"/><rect x="1260" y="424.800" width="9.600" height="9.600" fill="#5a98e8" stroke="#8ab8f4" stroke-width=".6"/><path d="M1290.800 430v-2.400q0-3.200 3-3.200t3 3.200v2.400" stroke="#6c6c6c" stroke-width="1.600" fill="none"/><rect x="1288.800" y="429.600" width="10.200" height="7.600" rx=".6" fill="#6c6c6c"/><circle cx="1496" cy="430.100" r="7.200" fill="none" stroke="#1a1a1a" stroke-width="1.200" stroke-dasharray="1.200 1.400"/><rect x="1492" y="426.800" width="8.200" height="6.600" fill="#ffffff"/></svg></div>
<div class="abs" style="left:1px;top:348px;width:416px;height:13px;border:1px solid #474747;border-top-color:#3c3c3c;border-radius:0 0 4px 4px;background:#333"></div>
<div class="abs" style="left:105px;top:349px;width:210px;height:20px;border-radius:5px;background:#656565;overflow:hidden"><div class="abs" style="left:0;top:0;width:77px;height:20px;border-right:1px solid #5a5a5a"></div><div class="abs" style="left:149px;top:0;width:61px;height:20px;background:#9a9a9a"></div><div class="t" style="left:9.7px;top:2.5px;font-size:13px;line-height:15px;color:#f0f0f0;letter-spacing:0.319px;">Mini-map</div><div class="t" style="left:90.6px;top:2.5px;font-size:13px;line-height:15px;color:#f0f0f0;letter-spacing:0.220px;">Objects</div><div class="t" style="left:161.7px;top:2.5px;font-size:13px;line-height:15px;color:#ffffff;letter-spacing:-0.086px;">Layers</div></div>
<div class="abs" style="left:0;top:369px;width:418px;height:1px;background:#5a5a5a"></div>
<div class="dockhead" style="left:0;top:370px;width:418px"><div class="dbtn" style="left:2px"><svg width="14" height="14" viewBox="0 0 14 14"><path d="M4.2 4.2L9.8 9.8M9.8 4.2L4.2 9.8" stroke="#4c4c4c" stroke-width="1.6" fill="none"/></svg></div><div class="dbtn" style="left:20px"><svg width="14" height="14" viewBox="0 0 14 14"><path d="M5.5 5.5V4h5v4.5H9" stroke="#4c4c4c" stroke-width="1.1" fill="none"/><rect x="3.6" y="5.8" width="5" height="4.4" stroke="#4c4c4c" stroke-width="1.1" fill="none"/></svg></div><div class="t" style="left:206.7px;top:3.5px;font-size:12px;line-height:14px;color:#dedede;letter-spacing:-0.044px;">Tilesets</div></div>
<div class="abs" style="left:3px;top:393px;width:359px;height:20px;border-radius:5px 0 0 5px;background:#656565;overflow:hidden">
<div class="abs" style="left:0px;top:0;width:47px;height:20px;background:#939393"></div>
<div class="t" style="left:1.7px;top:2.5px;font-size:13px;line-height:15px;color:#ffffff;letter-spacing:-0.100px;transform:scaleX(0.8826);transform-origin:0 0;will-change:transform;">1_Ge…</div>
<div class="abs" style="left:47px;top:0;width:46px;height:20px;border-right:1px solid #5c5c5c"></div>
<div class="t" style="left:49.4px;top:2.5px;font-size:13px;line-height:15px;color:#f0f0f0;letter-spacing:-0.100px;transform:scaleX(0.9105);transform-origin:0 0;will-change:transform;">11_H…</div>
<div class="abs" style="left:93px;top:0;width:48px;height:20px;border-right:1px solid #5c5c5c"></div>
<div class="t" style="left:98px;top:2.5px;font-size:13px;line-height:15px;color:#f0f0f0;letter-spacing:-0.100px;transform:scaleX(0.9168);transform-origin:0 0;will-change:transform;">12_K…</div>
<div class="abs" style="left:141px;top:0;width:49px;height:20px;border-right:1px solid #5c5c5c"></div>
<div class="t" style="left:146.6px;top:2.5px;font-size:13px;line-height:15px;color:#f0f0f0;letter-spacing:-0.100px;transform:scaleX(0.9021);transform-origin:0 0;will-change:transform;">13_C…</div>
<div class="abs" style="left:190px;top:0;width:51px;height:20px;border-right:1px solid #5c5c5c"></div>
<div class="t" style="left:196px;top:2.5px;font-size:13px;line-height:15px;color:#f0f0f0;letter-spacing:-0.100px;transform:scaleX(0.9317);transform-origin:0 0;will-change:transform;">2_Liv…</div>
<div class="abs" style="left:241px;top:0;width:51px;height:20px;border-right:1px solid #5c5c5c"></div>
<div class="t" style="left:247.4px;top:2.5px;font-size:13px;line-height:15px;color:#f0f0f0;letter-spacing:-0.100px;transform:scaleX(0.9681);transform-origin:0 0;will-change:transform;">20_J…</div>
<div class="abs" style="left:292px;top:0;width:49px;height:20px;border-right:1px solid #5c5c5c"></div>
<div class="t" style="left:298px;top:2.5px;font-size:13px;line-height:15px;color:#f0f0f0;letter-spacing:-0.100px;transform:scaleX(0.8906);transform-origin:0 0;will-change:transform;">21_C…</div>
<div class="abs" style="left:341px;top:0;width:19px;height:20px;border-right:1px solid #5c5c5c"></div>
<div class="t" style="left:351.7px;top:2.5px;font-size:13px;line-height:15px;color:#f0f0f0;letter-spacing:0.000px;">2</div>
</div>
<div class="abs" style="left:362px;top:393px;width:16px;height:20px;background:#3e3e3e"><svg class="ic" style="left:3px;top:4px" width="10" height="12" viewBox="0 0 10 12"><path d="M7 1.5L2.5 6L7 10.5" stroke="#707070" stroke-width="1.6" fill="none" stroke-linecap="round" stroke-linejoin="round"/></svg></div>
<div class="abs" style="left:379px;top:393px;width:15px;height:20px;background:#4a4a4a"><svg class="ic" style="left:3px;top:4px" width="10" height="12" viewBox="0 0 10 12"><path d="M2.5 1.5L7 6L2.5 10.5" stroke="#f0f0f0" stroke-width="1.6" fill="none" stroke-linecap="round" stroke-linejoin="round"/></svg></div>
<div class="abs" style="left:395px;top:393px;width:23px;height:20px;background:#4a4a4a"><svg class="ic" style="left:3px;top:5px" width="17" height="11" viewBox="0 0 17 11"><path d="M2 2L8.5 8.5L15 2" stroke="#f4f4f4" stroke-width="2.4" fill="none" stroke-linecap="round" stroke-linejoin="round"/></svg></div>
<div class="abs" id="tsview" style="left:0;top:414px;width:418px;height:354px;background:#c0c0c0;overflow:hidden"><svg width="418" height="355" viewBox="0 0 418 355" style="position:absolute;left:0;top:0"><defs><linearGradient id="gsun2" x1="0" y1="0" x2="1" y2="0"><stop offset="0" stop-color="#c8182c"/><stop offset=".3" stop-color="#f06a10"/><stop offset=".5" stop-color="#fff8a0"/><stop offset=".7" stop-color="#f06a10"/><stop offset="1" stop-color="#c8182c"/></linearGradient><pattern id="bal" width="4.25" height="16" patternUnits="userSpaceOnUse"><rect width="4.25" height="16" fill="#3a3a5a"/><rect x="1.2" y="0" width="1.8" height="16" fill="#c8a070"/><rect x="1.4" y="12" width="1.4" height="2.2" fill="#f0a840"/></pattern><pattern id="ps" width="2" height="6" patternUnits="userSpaceOnUse"><rect width="2" height="6" fill="#ecc0b0"/><rect width="1" height="6" fill="#c27a74"/></pattern><pattern id="pt" width="4" height="6" patternUnits="userSpaceOnUse"><rect width="4" height="6" fill="#c8a078"/><rect width="1.5" height="6" fill="#a8805c"/></pattern></defs><rect x="6.47" y="61.3" width="39.38" height="8.68" fill="#a89494"/><rect x="4.58" y="12.35" width="43.17" height="48.85" fill="#fbf6ee" stroke="#3a3a5a" stroke-width="1.2" rx="3"/><rect x="6.97" y="61.8" width="38.38" height="4.29" fill="#9a9c88" stroke="#3a3a5a" stroke-width="1"/><rect x="7.97" y="63.3" width="36.39" height="1.99" fill="#b8bca4"/><rect x="16.44" y="25.41" width="18.94" height="26.12" fill="#c0c0c0" stroke="#3a3a5a" stroke-width="1"/><rect x="17.44" y="25.41" width="17.25" height="2.69" fill="#5c5e5a"/><rect x="17.44" y="28.1" width="17.25" height="2.3" fill="#a8ac98"/><rect x="17.44" y="31.09" width="17.25" height="2" fill="#d0b8b8"/><rect x="17.44" y="33.89" width="17.25" height="1.99" fill="#a89494"/><rect x="52.03" y="-0.01" width="15.96" height="8.47" fill="#fbf6ee"/><rect x="54.63" y="2.08" width="10.86" height="4.09" fill="#f4ece0" stroke="#d8c8c0" stroke-width="0.6"/><rect x="52.03" y="8.46" width="15.96" height="1.5" fill="#d0c3bc"/><rect x="52.03" y="9.96" width="15.96" height="2.49" fill="#5c5e5a"/><rect x="52.03" y="12.45" width="15.96" height="2.49" fill="#a8ac98"/><rect x="52.03" y="14.94" width="15.96" height="1" fill="#3a3a5a"/><rect x="52.53" y="17.44" width="12.27" height="14.95" fill="#fbf6ee" stroke="#3a3a5a" stroke-width="1"/><rect x="52.83" y="26.91" width="11.77" height="1.19" fill="#3a3a5a"/><rect x="55.83" y="34.39" width="11.66" height="14.95" fill="#fbf6ee" stroke="#3a3a5a" stroke-width="1"/><rect x="72.48" y="17.44" width="11.76" height="14.95" fill="#fbf6ee" stroke="#3a3a5a" stroke-width="1"/><rect x="74.27" y="17.44" width="2.49" height="14.45" fill="#4a4a66"/><rect x="78.26" y="20.93" width="3.98" height="10.46" fill="#4a4a66"/><rect x="79.25" y="22.12" width="2" height="8.28" fill="#d8c8c0"/><rect x="70.28" y="34.39" width="11.17" height="14.95" fill="#fbf6ee" stroke="#3a3a5a" stroke-width="1"/><rect x="71.98" y="37.87" width="4.28" height="10.77" fill="#4a4a66"/><rect x="72.97" y="39.07" width="2.3" height="8.58" fill="#d8c8c0"/><rect x="77.56" y="34.38" width="2.39" height="14.46" fill="#4a4a66"/><rect x="86.63" y="26.31" width="1.89" height="16.15" fill="#fbf6ee" stroke="#3a3a5a" stroke-width="0.8"/><rect x="86.23" y="42.86" width="1" height="6.98" fill="#3a3a5a"/><rect x="103.48" y="10.46" width="12.16" height="10.96" fill="#6c6c68" stroke="#3a3a5a" stroke-width="1"/><rect x="104.18" y="10.96" width="10.47" height="1.49" fill="#d8d8d0"/><path d="M107.17 18.43L109.66 14.94L112.15 18.43Z" fill="#e8e8e0"/><rect x="116.04" y="15.34" width="2.39" height="4.69" fill="#5c5c60" stroke="#3a3a5a" stroke-width="0.8"/><rect x="106.17" y="21.72" width="6.98" height="2" fill="#4a4a50"/><rect x="102.98" y="22.12" width="15.85" height="3.29" fill="#fbf6ee"/><rect x="102.98" y="25.41" width="15.85" height="1.7" fill="#d0c3bc"/><rect x="102.98" y="27.11" width="15.85" height="2.79" fill="#5c5e5a"/><rect x="102.98" y="29.9" width="15.85" height="2.19" fill="#a8ac98"/><rect x="102.98" y="32.09" width="15.85" height="1" fill="#3a3a5a"/><rect x="101.19" y="33.89" width="17.64" height="15.95" fill="#c0c0c0"/><rect x="103.48" y="34.88" width="14.85" height="7.48" fill="#fbf6ee" stroke="#3a3a5a" stroke-width="1"/><rect x="101.19" y="33.89" width="0.99" height="15.95" fill="#3a3a5a"/><rect x="103.48" y="42.86" width="1" height="6.98" fill="#3a3a5a"/><rect x="117.84" y="42.86" width="0.99" height="6.98" fill="#3a3a5a"/><rect x="121.63" y="52.53" width="12.96" height="11.76" fill="#e8a83c" stroke="#3a3a5a" stroke-width="1"/><rect x="122.82" y="53.63" width="10.77" height="2.19" fill="#f4c460"/><rect x="122.82" y="58.81" width="10.77" height="2" fill="#d88a30"/><rect x="104.68" y="61.8" width="12.96" height="12.46" fill="#e8a83c" stroke="#3a3a5a" stroke-width="1"/><rect x="105.87" y="63" width="10.77" height="1.99" fill="#f4c460"/><rect x="105.87" y="69.58" width="10.77" height="1.99" fill="#d88a30"/><rect x="70.08" y="62" width="13.86" height="21.94" fill="#1f1c30"/><rect x="86.03" y="62" width="15.86" height="21.94" fill="#1f1c30"/><path d="M70.08 83.94L70.08 80.75L74.77 77.26L83.94 77.26L83.94 83.94Z" fill="#3d3a58"/><rect x="86.03" y="78.25" width="15.86" height="5.69" fill="#3d3a58"/><rect x="138" y="1" width="32" height="4.5" fill="#fbf6ee"/><rect x="138" y="5.5" width="32" height="5" fill="#d0c3bc"/><rect x="138" y="9.5" width="32" height="1" fill="#b8a09c"/><rect x="138" y="10.5" width="32" height="4.5" fill="#fbf6ee"/><rect x="138" y="15" width="32" height="4.5" fill="#fbf6ee"/><rect x="138" y="19.5" width="32" height="5" fill="#d0c3bc"/><rect x="138" y="23.5" width="32" height="1" fill="#b8a09c"/><rect x="138" y="24.5" width="32" height="4.5" fill="#fbf6ee"/><rect x="138" y="29" width="32" height="4" fill="#d0c3bc"/><rect x="138" y="32" width="32" height="1" fill="#b8a09c"/><rect x="137" y="29.9" width="32.9" height="2.99" fill="#e0dcd8"/><rect x="136.5" y="-0.01" width="33.4" height="2.99" fill="#3a3a5a"/><rect x="169.4" y="-0.01" width="6.68" height="32.9" fill="#a89494"/><rect x="170.9" y="0.49" width="3.29" height="31.9" fill="#f2b84a" stroke="#3a3a5a" stroke-width="1"/><rect x="133.01" y="0.49" width="3.49" height="31.9" fill="#f2b84a" stroke="#3a3a5a" stroke-width="1"/><rect x="188" y="2" width="16.3" height="4.5" fill="#fbf6ee"/><rect x="188" y="6.5" width="16.3" height="5" fill="#d0c3bc"/><rect x="188" y="10.5" width="16.3" height="1" fill="#b8a09c"/><rect x="188" y="11.5" width="16.3" height="4.5" fill="#fbf6ee"/><rect x="188" y="16" width="16.3" height="4.5" fill="#fbf6ee"/><rect x="188" y="20.5" width="16.3" height="5" fill="#d0c3bc"/><rect x="188" y="24.5" width="16.3" height="1" fill="#b8a09c"/><rect x="188" y="25.5" width="16.3" height="4.5" fill="#fbf6ee"/><rect x="188" y="30" width="16.3" height="3" fill="#d0c3bc"/><rect x="188" y="32" width="16.3" height="1" fill="#b8a09c"/><rect x="187.85" y="1.48" width="16.45" height="1.3" fill="#3a3a5a"/><rect x="187.85" y="29.9" width="16.45" height="2.99" fill="#e0dcd8"/><rect x="217.26" y="-0.01" width="43.87" height="54.83" fill="#a89494"/><rect x="222.5" y="0" width="32.5" height="4.5" fill="#fbf6ee"/><rect x="222.5" y="4.5" width="32.5" height="5" fill="#d0c3bc"/><rect x="222.5" y="8.5" width="32.5" height="1" fill="#b8a09c"/><rect x="222.5" y="9.5" width="32.5" height="4.5" fill="#fbf6ee"/><rect x="222.5" y="14" width="32.5" height="4.5" fill="#fbf6ee"/><rect x="222.5" y="18.5" width="32.5" height="5" fill="#d0c3bc"/><rect x="222.5" y="22.5" width="32.5" height="1" fill="#b8a09c"/><rect x="222.5" y="23.5" width="32.5" height="4.5" fill="#fbf6ee"/><rect x="222.5" y="28" width="32.5" height="5" fill="#d0c3bc"/><rect x="222.5" y="32" width="32.5" height="1" fill="#b8a09c"/><rect x="222.5" y="33" width="32.5" height="4.5" fill="#fbf6ee"/><rect x="222.5" y="37.5" width="32.5" height="5" fill="#d0c3bc"/><rect x="222.5" y="41.5" width="32.5" height="1" fill="#b8a09c"/><rect x="222.5" y="42.5" width="32.5" height="4.5" fill="#fbf6ee"/><rect x="222.5" y="47" width="32.5" height="2" fill="#fbf6ee"/><rect x="222.74" y="0.49" width="31.91" height="48.85" fill="none" stroke="#3a3a5a" stroke-width="1"/><rect x="222.74" y="50.34" width="31.91" height="4.28" fill="#a89494"/><rect x="218.76" y="0.49" width="2.69" height="52.84" fill="#f2b84a" stroke="#3a3a5a" stroke-width="1"/><rect x="255.94" y="0.49" width="2.69" height="52.84" fill="#f2b84a" stroke="#3a3a5a" stroke-width="1"/><rect x="156.44" y="46.55" width="10.97" height="8.97" fill="#f8f4fa" stroke="#3a3a5a" stroke-width="1"/><rect x="158.73" y="49.84" width="6.68" height="2.19" fill="#c0b0d8"/><rect x="173.59" y="46.55" width="10.97" height="8.97" fill="#f8f4fa" stroke="#3a3a5a" stroke-width="1"/><rect x="175.88" y="49.84" width="6.68" height="2.19" fill="#c0b0d8"/><rect x="190.54" y="46.55" width="10.96" height="8.97" fill="#f8f4fa" stroke="#3a3a5a" stroke-width="1"/><rect x="192.83" y="49.84" width="6.68" height="2.19" fill="#c0b0d8"/><rect x="137" y="68.28" width="15.95" height="31.91" fill="#c8a844"/><rect x="137" y="68.28" width="15.95" height="2.7" fill="#b94442"/><rect x="137" y="80.75" width="15.95" height="2.99" fill="#b94442"/><rect x="137" y="84.73" width="15.95" height="2.99" fill="#2e86d6"/><rect x="137" y="97.69" width="15.95" height="2.5" fill="#2e86d6"/><rect x="221.95" y="67.98" width="15.95" height="15.96" fill="#c8a844"/><rect x="221.95" y="67.98" width="2.99" height="15.96" fill="#b94442"/><rect x="234.91" y="67.98" width="2.99" height="15.96" fill="#b94442"/><rect x="238.89" y="67.98" width="16.26" height="15.96" fill="#d8b038"/><rect x="238.89" y="67.98" width="3" height="15.96" fill="#2e86d6"/><rect x="252.15" y="67.98" width="3" height="15.96" fill="#2e86d6"/><rect x="156.5" y="72.8" width="62.3" height="40.6" fill="#c8a844" stroke="#3a3a5a" stroke-width="1"/><rect x="159" y="75.3" width="57.3" height="35.6" fill="#b94442"/><rect x="164" y="80.3" width="47.3" height="25.6" fill="#c8a844"/><rect x="171" y="87.3" width="33.3" height="11.6" fill="#b94442"/><rect x="174" y="90.3" width="27.3" height="5.6" fill="#c8a844"/><rect x="156.5" y="123.6" width="62.3" height="40.8" fill="#c8a844" stroke="#3a3a5a" stroke-width="1"/><rect x="159" y="126.1" width="57.3" height="35.8" fill="#2e86d6"/><rect x="164" y="131.1" width="47.3" height="25.8" fill="#c8a844"/><rect x="171" y="138.1" width="33.3" height="11.8" fill="#2e86d6"/><rect x="174" y="141.1" width="27.3" height="5.8" fill="#c8a844"/><rect x="226.5" y="87.5" width="41.1" height="61.8" fill="#dcb034" stroke="#3a3a5a" stroke-width="1"/><rect x="229" y="90" width="36.1" height="56.8" fill="#2e86d6"/><rect x="234" y="95" width="26.1" height="46.8" fill="#dcb034"/><rect x="239" y="100" width="16.1" height="36.8" fill="#2e86d6"/><rect x="242" y="103" width="10.1" height="30.8" fill="#dcb034"/><rect x="226.5" y="155.5" width="41.1" height="62.1" fill="#c8a844" stroke="#3a3a5a" stroke-width="1"/><rect x="229" y="158" width="36.1" height="57.1" fill="#b94442"/><rect x="234" y="163" width="26.1" height="47.1" fill="#c8a844"/><rect x="239" y="168" width="16.1" height="37.1" fill="#b94442"/><rect x="242" y="171" width="10.1" height="31.1" fill="#c8a844"/><rect x="16.44" y="120.88" width="36.39" height="3.99" fill="#a89494"/><rect x="14.55" y="86.58" width="39.88" height="34.2" fill="#d98646" stroke="#3a3a5a" stroke-width="1.2" rx="2.5"/><rect x="15.15" y="119.08" width="38.68" height="1.8" fill="#d0582c"/><rect x="17.84" y="121.48" width="2.69" height="2.49" fill="#d0582c" stroke="#3a3a5a" stroke-width="0.8"/><rect x="48.45" y="121.48" width="2.79" height="2.49" fill="#d0582c" stroke="#3a3a5a" stroke-width="0.8"/><rect x="68.98" y="121.38" width="16.06" height="3.49" fill="#a89494"/><rect x="68.98" y="85.98" width="16.06" height="35.4" fill="#d98646"/><rect x="68.98" y="85.98" width="16.06" height="1.2" fill="#3a3a5a"/><rect x="68.98" y="119.08" width="16.06" height="1.8" fill="#d0582c"/><rect x="68.98" y="120.88" width="16.06" height="0.79" fill="#3a3a5a"/><rect x="16.44" y="171.72" width="36.39" height="3.99" fill="#a89494"/><rect x="14.55" y="137.43" width="39.88" height="34.19" fill="#ebb661" stroke="#3a3a5a" stroke-width="1.2" rx="2.5"/><rect x="15.15" y="169.93" width="38.68" height="1.79" fill="#e08a3c"/><rect x="17.84" y="172.32" width="2.69" height="2.49" fill="#e08a3c" stroke="#3a3a5a" stroke-width="0.8"/><rect x="48.45" y="172.32" width="2.79" height="2.49" fill="#e08a3c" stroke="#3a3a5a" stroke-width="0.8"/><rect x="68.98" y="172.22" width="16.06" height="3.49" fill="#a89494"/><rect x="68.98" y="136.83" width="16.06" height="35.39" fill="#ebb661"/><rect x="68.98" y="136.83" width="16.06" height="1.2" fill="#3a3a5a"/><rect x="68.98" y="169.93" width="16.06" height="1.79" fill="#e08a3c"/><rect x="68.98" y="171.72" width="16.06" height="0.8" fill="#3a3a5a"/><rect x="89.22" y="95.95" width="9.97" height="3.99" fill="#a89494"/><rect x="87.83" y="86.58" width="12.76" height="9.77" fill="#ebb860" stroke="#3a3a5a" stroke-width="1.2" rx="4"/><rect x="90.52" y="97.05" width="1.89" height="2.39" fill="#e08a3c" stroke="#3a3a5a" stroke-width="0.6"/><rect x="95.51" y="97.05" width="1.89" height="2.39" fill="#e08a3c" stroke="#3a3a5a" stroke-width="0.6"/><rect x="92.71" y="128.35" width="36.39" height="3.49" fill="#a89494"/><rect x="91.52" y="110.51" width="38.68" height="17.74" fill="#d98646" stroke="#3a3a5a" stroke-width="1.2" rx="3"/><rect x="92.21" y="125.86" width="37.39" height="2" fill="#d0582c"/><rect x="93.61" y="128.75" width="2.69" height="2.5" fill="#d0582c" stroke="#3a3a5a" stroke-width="0.8"/><rect x="125.52" y="128.75" width="2.69" height="2.5" fill="#d0582c" stroke="#3a3a5a" stroke-width="0.8"/><rect x="91.42" y="144.51" width="21.93" height="5.98" fill="#e08a3c" stroke="#3a3a5a" stroke-width="1"/><rect x="92.91" y="145.8" width="18.95" height="3.49" fill="#cfe8f6"/><rect x="124.62" y="145.5" width="24.92" height="14.76" fill="#e08a3c" stroke="#3a3a5a" stroke-width="1"/><rect x="126.11" y="147" width="9.97" height="11.76" fill="#cfe8f6"/><rect x="138.08" y="147" width="9.97" height="11.76" fill="#cfe8f6"/><rect x="89.42" y="160.46" width="25.23" height="19.54" fill="#a8785c" stroke="#3a3a5a" stroke-width="1"/><rect x="90.92" y="161.95" width="10.47" height="7.18" fill="#e4dcf0"/><rect x="90.92" y="170.23" width="10.47" height="7.18" fill="#e4dcf0"/><rect x="103.48" y="161.95" width="10.47" height="7.18" fill="#e4dcf0"/><rect x="103.48" y="170.23" width="10.47" height="7.18" fill="#e4dcf0"/><rect x="1.69" y="216.36" width="14.45" height="2.69" fill="#a89494"/><rect x="1.74" y="192.68" width="14.45" height="24.63" fill="#e0a050" stroke="#3a3a5a" stroke-width="1.1" rx="1"/><rect x="4.18" y="196.12" width="9.57" height="9.77" fill="#3a3a5a"/><rect x="4.18" y="198.91" width="9.57" height="1" fill="#e0a050"/><rect x="4.18" y="202.9" width="9.57" height="1" fill="#e0a050"/><rect x="6.97" y="196.12" width="1" height="9.77" fill="#e0a050"/><rect x="10.16" y="196.12" width="1" height="9.77" fill="#e0a050"/><rect x="3.68" y="207.09" width="10.67" height="6.78" fill="#ebb860" rx="2"/><rect x="18.93" y="216.36" width="14.46" height="2.69" fill="#a89494"/><rect x="18.99" y="192.68" width="14.45" height="24.63" fill="#e0a050" stroke="#3a3a5a" stroke-width="1.1" rx="1"/><rect x="21.43" y="196.12" width="9.57" height="9.77" fill="#3a3a5a"/><rect x="21.43" y="198.91" width="9.57" height="1" fill="#e0a050"/><rect x="21.43" y="202.9" width="9.57" height="1" fill="#e0a050"/><rect x="24.22" y="196.12" width="1" height="9.77" fill="#e0a050"/><rect x="27.41" y="196.12" width="1" height="9.77" fill="#e0a050"/><rect x="20.93" y="207.09" width="10.67" height="6.78" fill="#4a8ad8" rx="2"/><rect x="36.88" y="216.36" width="12.96" height="2.69" fill="#a89494"/><rect x="35.93" y="192.68" width="14.36" height="9.67" fill="#e0a050" stroke="#3a3a5a" stroke-width="1.1" rx="3"/><rect x="38.48" y="203.3" width="9.17" height="4.19" fill="#e0a050" stroke="#3a3a5a" stroke-width="0.8"/><rect x="40.87" y="204.4" width="4.98" height="2.29" fill="#f0e8e0"/><rect x="35.93" y="207.94" width="14.36" height="6.87" fill="#ebb860" stroke="#3a3a5a" stroke-width="1.1" rx="3"/><rect x="36.73" y="215.71" width="2.29" height="2.59" fill="#e08a3c" stroke="#3a3a5a" stroke-width="0.7"/><rect x="47.2" y="215.71" width="2.29" height="2.59" fill="#e08a3c" stroke="#3a3a5a" stroke-width="0.7"/><rect x="56.32" y="216.86" width="7.48" height="2.99" fill="#a89494"/><rect x="54.18" y="197.97" width="11.86" height="5.88" fill="#e8b058" stroke="#3a3a5a" stroke-width="1.1" rx="3"/><rect x="56.02" y="199.71" width="8.28" height="1.99" fill="#3a3a5a"/><ellipse cx="60.01" cy="209.88" rx="6.58026" ry="5.48355" fill="#ebb860" stroke="#3a3a5a" stroke-width="1.1"/><rect x="58.02" y="215.76" width="4.18" height="3.19" fill="#e08a3c" stroke="#3a3a5a" stroke-width="0.8"/><rect x="71.48" y="193.63" width="2.79" height="23.73" fill="#ebb860" stroke="#3a3a5a" stroke-width="1"/><rect x="74.77" y="205.89" width="8.47" height="11.47" fill="#e0a050" stroke="#3a3a5a" stroke-width="1"/><rect x="75.76" y="207.09" width="6.78" height="6.78" fill="#ebb860"/><rect x="97" y="193.63" width="2.69" height="23.73" fill="#ebb860" stroke="#3a3a5a" stroke-width="1"/><rect x="87.73" y="205.89" width="8.67" height="11.47" fill="#e0a050" stroke="#3a3a5a" stroke-width="1"/><rect x="88.53" y="207.09" width="6.97" height="6.78" fill="#ebb860"/><rect x="104.18" y="211.87" width="30.61" height="2" fill="#a89494"/><rect x="103.73" y="187.7" width="31.5" height="24.62" fill="#e8a848" stroke="#3a3a5a" stroke-width="1.1" rx="1"/><rect x="105.37" y="191.44" width="28.22" height="9.67" fill="#c44a68"/><rect x="105.37" y="201.11" width="28.22" height="3.29" fill="#f07078"/><rect x="105.37" y="204.4" width="28.22" height="3.49" fill="#ee5c6c"/><rect x="105.37" y="207.89" width="28.22" height="3.19" fill="#c8485c"/><rect x="138.38" y="211.87" width="13.16" height="2" fill="#a89494"/><rect x="137.93" y="187.7" width="14.05" height="24.62" fill="#e8a848" stroke="#3a3a5a" stroke-width="1.1" rx="1"/><rect x="139.57" y="191.44" width="10.77" height="9.67" fill="#c44a68"/><rect x="139.57" y="201.11" width="10.77" height="3.29" fill="#f07078"/><rect x="139.57" y="204.4" width="10.77" height="3.49" fill="#ee5c6c"/><rect x="139.57" y="207.89" width="10.77" height="3.19" fill="#c8485c"/><rect x="6.47" y="231.52" width="20.94" height="12.96" fill="#c86a30" stroke="#3a3a5a" stroke-width="1"/><rect x="8.17" y="233.01" width="17.94" height="10.27" fill="#1c8a4c"/><rect x="8.17" y="233.01" width="17.94" height="3.29" fill="#0c5c3c"/><rect x="11.96" y="238.79" width="7.97" height="2.99" fill="#38a860"/><rect x="37.58" y="232.51" width="27.91" height="12.96" fill="#c86a30" stroke="#3a3a5a" stroke-width="1"/><rect x="39.07" y="234.01" width="24.93" height="9.97" fill="url(#gsun2)"/><rect x="71.48" y="232.51" width="28.01" height="12.96" fill="#c86a30" stroke="#3a3a5a" stroke-width="1"/><rect x="72.97" y="234.01" width="25.23" height="9.97" fill="#1c9a4c"/><rect x="72.97" y="234.01" width="25.23" height="2.99" fill="#30d8d0"/><rect x="87.23" y="238.79" width="10.97" height="3.49" fill="#1c78c8"/><rect x="158.5" y="179.5" width="24.2" height="18" fill="#c8a844" stroke="#3a3a5a" stroke-width="1"/><rect x="160" y="181" width="21.2" height="15" fill="#b94442"/><rect x="163" y="184" width="15.2" height="9" fill="#c8a844"/><rect x="164" y="185" width="13.2" height="7" fill="#b94442"/><rect x="165" y="186" width="11.2" height="5" fill="#c8a844"/><rect x="192.5" y="179.5" width="24" height="18" fill="#c8a844" stroke="#3a3a5a" stroke-width="1"/><rect x="194" y="181" width="21" height="15" fill="#0a860a"/><rect x="197" y="184" width="15" height="9" fill="#c8a844"/><rect x="198" y="185" width="13" height="7" fill="#0a860a"/><rect x="199" y="186" width="11" height="5" fill="#c8a844"/><rect x="192.5" y="213.6" width="24" height="17.8" fill="#dcb034" stroke="#3a3a5a" stroke-width="1"/><rect x="194" y="215.1" width="21" height="14.8" fill="#2e86d6"/><rect x="197" y="218.1" width="15" height="8.8" fill="#dcb034"/><rect x="198" y="219.1" width="13" height="6.8" fill="#2e86d6"/><rect x="199" y="220.1" width="11" height="4.8" fill="#dcb034"/><rect x="140.49" y="224.54" width="42.07" height="27.91" fill="#8c8cb2" stroke="#3a3a5a" stroke-width="1"/><rect x="143.18" y="227.03" width="36.89" height="22.93" fill="#6c6e8e"/><rect x="147.97" y="232.01" width="27.12" height="12.97" fill="#8c8cb2"/><rect x="155.15" y="235.3" width="12.96" height="6.48" fill="#6c6e8e"/><rect x="137" y="255.02" width="58.82" height="16.15" fill="url(#bal)"/><rect x="247.17" y="255.02" width="24.92" height="16.15" fill="url(#bal)"/><rect x="137" y="271.97" width="59.62" height="2.19" fill="#f0a840"/><rect x="137" y="274.16" width="59.62" height="4.79" fill="#c8562c"/><rect x="137" y="278.95" width="59.62" height="1.99" fill="#3a3a5a"/><rect x="246.67" y="271.97" width="25.42" height="2.19" fill="#f0a840"/><rect x="246.67" y="274.16" width="25.42" height="4.79" fill="#c8562c"/><rect x="246.67" y="278.95" width="25.42" height="1.99" fill="#3a3a5a"/><rect x="205" y="263.99" width="2.99" height="61.82" fill="#a89494"/><rect x="206" y="269" width="32.5" height="4.5" fill="#fbf6ee"/><rect x="206" y="273.5" width="32.5" height="5" fill="#d0c3bc"/><rect x="206" y="277.5" width="32.5" height="1" fill="#b8a09c"/><rect x="206" y="278.5" width="32.5" height="4.5" fill="#fbf6ee"/><rect x="206" y="283" width="32.5" height="4.5" fill="#fbf6ee"/><rect x="206" y="287.5" width="32.5" height="5" fill="#d0c3bc"/><rect x="206" y="291.5" width="32.5" height="1" fill="#b8a09c"/><rect x="206" y="292.5" width="32.5" height="4.5" fill="#fbf6ee"/><rect x="206" y="297" width="32.5" height="5" fill="#d0c3bc"/><rect x="206" y="301" width="32.5" height="1" fill="#b8a09c"/><rect x="206" y="302" width="32.5" height="4.5" fill="#fbf6ee"/><rect x="206" y="306.5" width="32.5" height="5" fill="#d0c3bc"/><rect x="206" y="310.5" width="32.5" height="1" fill="#b8a09c"/><rect x="206" y="311.5" width="32.5" height="4.5" fill="#fbf6ee"/><rect x="206" y="316" width="32.5" height="4.5" fill="#fbf6ee"/><rect x="206" y="320.5" width="32.5" height="0.5" fill="#d0c3bc"/><rect x="206" y="320" width="32.5" height="1" fill="#b8a09c"/><rect x="205" y="267.98" width="33.5" height="1.2" fill="#3a3a5a"/><rect x="205" y="320.82" width="33.5" height="1.2" fill="#3a3a5a"/><rect x="205" y="323.02" width="33.5" height="4.78" fill="#a89494"/><rect x="196.32" y="251.53" width="7.48" height="53.04" fill="#d98040" stroke="#3a3a5a" stroke-width="1"/><rect x="197.12" y="252.03" width="2.19" height="52.34" fill="#f0a850"/><rect x="195.63" y="251.53" width="8.87" height="7.98" fill="#eca050" stroke="#3a3a5a" stroke-width="1"/><rect x="195.63" y="306.57" width="8.87" height="19.93" fill="#d98040" stroke="#3a3a5a" stroke-width="1"/><rect x="196.12" y="307.06" width="7.88" height="5.99" fill="#eca050"/><rect x="195.13" y="313.05" width="9.87" height="0.99" fill="#3a3a5a"/><rect x="239.69" y="251.53" width="7.48" height="53.04" fill="#d98040" stroke="#3a3a5a" stroke-width="1"/><rect x="240.49" y="252.03" width="2.19" height="52.34" fill="#f0a850"/><rect x="239" y="251.53" width="8.87" height="7.98" fill="#eca050" stroke="#3a3a5a" stroke-width="1"/><rect x="239" y="306.57" width="8.87" height="19.93" fill="#d98040" stroke="#3a3a5a" stroke-width="1"/><rect x="239.49" y="307.06" width="7.88" height="5.99" fill="#eca050"/><rect x="238.5" y="313.05" width="9.87" height="0.99" fill="#3a3a5a"/><rect x="137" y="280.94" width="15.95" height="23.93" fill="#ebb050"/><rect x="143.98" y="283.93" width="8.97" height="13.96" fill="#f2ea92"/><rect x="137" y="290.91" width="15.95" height="1.2" fill="#e8603c"/><rect x="137" y="297.09" width="15.95" height="2" fill="#e8603c"/><rect x="137" y="300.38" width="15.95" height="2.7" fill="#f08048"/><rect x="137" y="303.38" width="15.95" height="1.49" fill="#585a7c"/><rect x="154.15" y="280.94" width="15.75" height="23.93" fill="#d06452"/><rect x="159.93" y="283.93" width="9.97" height="12.97" fill="#e08860"/><rect x="154.15" y="290.91" width="15.75" height="1.2" fill="#c8404c"/><rect x="154.15" y="297.09" width="15.75" height="5.79" fill="#c03848"/><rect x="154.15" y="303.38" width="15.75" height="1.49" fill="#3a3a5a"/><rect x="171.1" y="280.94" width="15.95" height="6.98" fill="#e08860"/><rect x="171.1" y="280.94" width="15.95" height="2.79" fill="#d06452"/><rect x="171.1" y="298.09" width="15.95" height="6.78" fill="#f2ea92"/><rect x="171.1" y="298.09" width="15.95" height="2.79" fill="#ebb050"/><rect x="137" y="315.04" width="15.95" height="23.93" fill="#e8d8d0"/><rect x="143.98" y="318.03" width="8.97" height="15.75" fill="#f6efe2"/><rect x="137" y="335.28" width="15.95" height="1.99" fill="#a8a0a0"/><rect x="137" y="337.57" width="15.95" height="1.4" fill="#3a3a5a"/><rect x="154.15" y="315.04" width="15.75" height="23.93" fill="#6874c0"/><rect x="160.93" y="318.03" width="8.97" height="12.76" fill="#8080c8"/><rect x="154.15" y="324.81" width="15.75" height="1.2" fill="#5040a0"/><rect x="154.15" y="330.99" width="15.75" height="5.99" fill="#5040a0"/><rect x="160.93" y="332.99" width="8.97" height="3.99" fill="#7050b0"/><rect x="154.15" y="337.57" width="15.75" height="1.4" fill="#3a3a5a"/><rect x="171.1" y="315.04" width="15.95" height="6.78" fill="#8080c8"/><rect x="171.1" y="315.04" width="15.95" height="2.79" fill="#6874c0"/><rect x="171.1" y="331.99" width="15.95" height="6.98" fill="#f6efe2"/><rect x="171.1" y="331.99" width="15.95" height="2.79" fill="#e8d8d0"/><rect x="137" y="348.94" width="15.95" height="5.28" fill="#ecd4b0"/><rect x="154.15" y="348.94" width="15.75" height="5.28" fill="url(#ps)"/><rect x="171.1" y="348.94" width="15.95" height="5.28" fill="url(#ps)"/><rect x="188.05" y="348.94" width="15.95" height="5.28" fill="url(#pt)"/><rect x="205" y="348.94" width="15.95" height="5.28" fill="url(#pt)"/><rect x="3.48" y="282.44" width="28.42" height="5.68" fill="#a89494"/><rect x="2.49" y="269.48" width="30.1" height="12.46" fill="#e0c898" stroke="#3a3a5a" stroke-width="1"/><rect x="3.18" y="270.18" width="28.72" height="1.79" fill="#f4e0b0"/><rect x="6.97" y="273.17" width="23.93" height="0.79" fill="#c8a070"/><rect x="6.97" y="276.16" width="23.93" height="0.8" fill="#c8a070"/><rect x="3.18" y="279.75" width="28.72" height="1.19" fill="#3a3a5a"/><rect x="3.53" y="282.79" width="1.89" height="4.58" fill="#e8e0f0" stroke="#3a3a5a" stroke-width="0.7"/><rect x="29.45" y="282.79" width="1.9" height="4.58" fill="#e8e0f0" stroke="#3a3a5a" stroke-width="0.7"/><rect x="37.38" y="282.44" width="28.41" height="5.68" fill="#a89494"/><rect x="36.38" y="269.48" width="30.11" height="12.46" fill="#e08a3c" stroke="#3a3a5a" stroke-width="1"/><rect x="37.08" y="270.18" width="28.71" height="1.79" fill="#f0a850"/><rect x="40.87" y="273.17" width="23.93" height="0.79" fill="#c8562c"/><rect x="40.87" y="276.16" width="23.93" height="0.8" fill="#c8562c"/><rect x="37.08" y="279.75" width="28.71" height="1.19" fill="#3a3a5a"/><rect x="37.43" y="282.79" width="1.89" height="4.58" fill="#e8e0f0" stroke="#3a3a5a" stroke-width="0.7"/><rect x="63.35" y="282.79" width="1.89" height="4.58" fill="#e8e0f0" stroke="#3a3a5a" stroke-width="0.7"/><rect x="4.48" y="311.35" width="8.47" height="3.49" fill="#a89494"/><path d="M2.48 310.35L3.98 314.84L2.48 314.84Z" fill="#f4c058" stroke="#3a3a5a" stroke-width="0.7"/><path d="M14.75 310.35L13.15 314.84L14.75 314.84Z" fill="#f4c058" stroke="#3a3a5a" stroke-width="0.7"/><ellipse cx="8.57" cy="306.37" rx="6.58026" ry="5.18445" fill="#e8a840" stroke="#3a3a5a" stroke-width="1"/><rect x="2.48" y="306.07" width="12.27" height="0.99" fill="#3a3a5a"/><ellipse cx="8.57" cy="304.07" rx="4.48654" ry="2.19342" fill="#f4c058"/><rect x="21.43" y="311.35" width="8.47" height="3.49" fill="#a89494"/><path d="M19.43 310.35L20.93 314.84L19.43 314.84Z" fill="#f09848" stroke="#3a3a5a" stroke-width="0.7"/><path d="M31.7 310.35L30.1 314.84L31.7 314.84Z" fill="#f09848" stroke="#3a3a5a" stroke-width="0.7"/><ellipse cx="25.51" cy="306.37" rx="6.58026" ry="5.18445" fill="#e07830" stroke="#3a3a5a" stroke-width="1"/><rect x="19.43" y="306.07" width="12.27" height="0.99" fill="#3a3a5a"/><ellipse cx="25.51" cy="304.07" rx="4.48654" ry="2.19342" fill="#f09848"/><rect x="38.38" y="311.35" width="8.47" height="3.49" fill="#a89494"/><path d="M36.38 310.35L37.88 314.84L36.38 314.84Z" fill="#ecdcc0" stroke="#3a3a5a" stroke-width="0.7"/><path d="M48.65 310.35L47.05 314.84L48.65 314.84Z" fill="#ecdcc0" stroke="#3a3a5a" stroke-width="0.7"/><ellipse cx="42.46" cy="306.37" rx="6.58026" ry="5.18445" fill="#d8c0a0" stroke="#3a3a5a" stroke-width="1"/><rect x="36.38" y="306.07" width="12.27" height="0.99" fill="#3a3a5a"/><ellipse cx="42.46" cy="304.07" rx="4.48654" ry="2.19342" fill="#ecdcc0"/><rect x="4.48" y="336.28" width="8.47" height="3.49" fill="#a89494"/><path d="M2.48 335.28L3.98 339.77L2.48 339.77Z" fill="#f08848" stroke="#3a3a5a" stroke-width="0.7"/><path d="M14.75 335.28L13.15 339.77L14.75 339.77Z" fill="#f08848" stroke="#3a3a5a" stroke-width="0.7"/><ellipse cx="8.57" cy="331.29" rx="6.58026" ry="5.18445" fill="#d86830" stroke="#3a3a5a" stroke-width="1"/><rect x="2.48" y="330.99" width="12.27" height="1" fill="#3a3a5a"/><ellipse cx="8.57" cy="329" rx="4.48654" ry="2.19342" fill="#f08848"/><rect x="21.43" y="336.28" width="8.47" height="3.49" fill="#a89494"/><path d="M19.43 335.28L20.93 339.77L19.43 339.77Z" fill="#ecdcc0" stroke="#3a3a5a" stroke-width="0.7"/><path d="M31.7 335.28L30.1 339.77L31.7 339.77Z" fill="#ecdcc0" stroke="#3a3a5a" stroke-width="0.7"/><ellipse cx="25.51" cy="331.29" rx="6.58026" ry="5.18445" fill="#d8c0a0" stroke="#3a3a5a" stroke-width="1"/><rect x="19.43" y="330.99" width="12.27" height="1" fill="#3a3a5a"/><ellipse cx="25.51" cy="329" rx="4.48654" ry="2.19342" fill="#ecdcc0"/><rect x="38.38" y="336.28" width="8.47" height="3.49" fill="#a89494"/><path d="M36.38 335.28L37.88 339.77L36.38 339.77Z" fill="#f4c058" stroke="#3a3a5a" stroke-width="0.7"/><path d="M48.65 335.28L47.05 339.77L48.65 339.77Z" fill="#f4c058" stroke="#3a3a5a" stroke-width="0.7"/><ellipse cx="42.46" cy="331.29" rx="6.58026" ry="5.18445" fill="#e8a840" stroke="#3a3a5a" stroke-width="1"/><rect x="36.38" y="330.99" width="12.27" height="1" fill="#3a3a5a"/><ellipse cx="42.46" cy="329" rx="4.48654" ry="2.19342" fill="#f4c058"/><rect x="85.73" y="280.94" width="2.99" height="24.13" fill="#a89494"/><rect x="87" y="286" width="32.5" height="4.5" fill="#fbf6ee"/><rect x="87" y="290.5" width="32.5" height="5" fill="#d0c3bc"/><rect x="87" y="294.5" width="32.5" height="1" fill="#b8a09c"/><rect x="87" y="295.5" width="32.5" height="4.5" fill="#fbf6ee"/><rect x="87" y="300" width="32.5" height="4.5" fill="#fbf6ee"/><rect x="87" y="304.5" width="32.5" height="0.5" fill="#d0c3bc"/><rect x="87" y="304" width="32.5" height="1" fill="#b8a09c"/><rect x="85.73" y="284.93" width="34.9" height="1.2" fill="#3a3a5a"/><rect x="77.26" y="268.48" width="6.38" height="36.09" fill="#d98040" stroke="#3a3a5a" stroke-width="1"/><rect x="77.96" y="268.98" width="1.99" height="35.39" fill="#f0a850"/><rect x="76.46" y="268.48" width="7.98" height="8.97" fill="#eca050" stroke="#3a3a5a" stroke-width="1"/><rect x="121.43" y="268.48" width="6.38" height="36.09" fill="#d98040" stroke="#3a3a5a" stroke-width="1"/><rect x="122.12" y="268.98" width="2" height="35.39" fill="#f0a850"/><rect x="120.63" y="268.48" width="7.97" height="8.97" fill="#eca050" stroke="#3a3a5a" stroke-width="1"/><rect x="64.8" y="325.81" width="24.92" height="7.48" fill="#a89494"/><rect x="64.6" y="306.47" width="25.02" height="15.25" fill="#9a9ec2" stroke="#3a3a5a" stroke-width="1.2" rx="2"/><rect x="64.5" y="323.32" width="25.22" height="1.99" fill="#8a8eb4" stroke="#3a3a5a" stroke-width="1"/><rect x="65.3" y="326.11" width="2.39" height="6.58" fill="#5c5e80" stroke="#3a3a5a" stroke-width="0.6"/><rect x="86.53" y="326.11" width="2.39" height="6.58" fill="#5c5e80" stroke="#3a3a5a" stroke-width="0.6"/><rect x="68.98" y="327.6" width="16.26" height="1.4" fill="#3a3a5a"/><rect x="52.53" y="344.45" width="14.96" height="9.27" fill="#ebb661" stroke="#3a3a5a" stroke-width="1"/><rect x="69.48" y="344.45" width="14.96" height="9.27" fill="#d98646" stroke="#3a3a5a" stroke-width="1"/><rect x="86.43" y="344.45" width="14.96" height="9.27" fill="#d8c098" stroke="#3a3a5a" stroke-width="1"/><path d="M17.5 0V355M34.5 0V355M51.5 0V355M68.5 0V355M85.5 0V355M102.5 0V355M119.5 0V355M136.5 0V355M153.5 0V355M170.5 0V355M187.5 0V355M204.5 0V355M221.5 0V355M238.5 0V355M255.5 0V355M272.5 0V355M289.5 0V355M0 16.5H290M0 33.5H290M0 50.5H290M0 67.5H290M0 84.5H290M0 101.5H290M0 118.5H290M0 135.5H290M0 152.5H290M0 169.5H290M0 186.5H290M0 203.5H290M0 220.5H290M0 237.5H290M0 254.5H290M0 271.5H290M0 288.5H290M0 305.5H290M0 322.5H290M0 339.5H290" stroke="#c0c0c0" stroke-width="1" fill="none"/></svg></div>
<div class="abs" style="left:0;top:768px;width:418px;height:1px;background:#262626"></div>
<div class="abs" style="left:0;top:769px;width:418px;height:34px;background:#2f2f2f"><svg class="ic" style="left:0;top:0" width="418" height="34" viewBox="1091 865 418 34"><path d="M1091 867.500H1409.500M1091 894.500H1409.500" stroke="#444" stroke-width="1"/><rect x="1097.8" y="873" width="12.6" height="15.4" rx="1.2" fill="url(#gpg2)" stroke="#bdbdbd" stroke-width=".5"/><circle cx="1107.8" cy="877.6" r="5.4" fill="url(#gst2)"/><path d="M1107.8 874.4l1 2.200 2.400.2-1.800 1.600.5 2.400-2.100-1.300-2.100 1.300.5-2.400-1.800-1.600 2.400-.2z" fill="#fff"/><path d="M1128.6 873.2h7.600l4 4v11.200h-11.600z" fill="#8a9292" stroke="#6a7272" stroke-width=".5" opacity="0.8"/><path d="M1136.2 873.2v4h4z" fill="#c8d0d0" opacity="0.8"/><path d="M1127.600 881.400h7M1132.400 879l2.600 2.400-2.600 2.400" stroke="#aab2b2" stroke-width="1" fill="none"/><path d="M1159.8 873.2h7.600l4 4v11.200h-11.600z" fill="#e4f0f0" stroke="#a8b8b8" stroke-width=".5" opacity="1"/><path d="M1167.4 873.2v4h4z" fill="#c8d0d0" opacity="1"/><path d="M1164 882h7.400M1169.400 879.400l3 2.600-3 2.600" stroke="#ffffff" stroke-width="1.300" fill="none"/><path d="M1188.4 873.2h7.600l4 4v11.200h-11.600z" fill="#e8e8e4" stroke="#b0b0ac" stroke-width=".5" opacity="1"/><path d="M1196 873.2v4h4z" fill="#c8d0d0" opacity="1"/><path d="M1196.400 877.600q-3.400-.6-3.600 2.400 0 1.400 1.400 2l-2.800 2.800q-1 1.600 1 2.200l3.200-3.200 5.600 4.800 1.600-1.400-5.200-5.200q1.200-3-1.200-4.400z" fill="#b8b8b4" stroke="#f8f8f8" stroke-width=".7"/><rect x="1219.600" y="873.200" width="10.600" height="15" fill="#ecece8" stroke="#b8b8b4" stroke-width=".5"/><path d="M1217.600 880.600q.2-5.200 5.600-5v-2l4 3.400-4 3.400v-2q-2.600-.2-3.200 2.200z" fill="#f47c0c" stroke="#b85800" stroke-width=".4"/><path d="M1232.400 881.200q-.2 5.200-5.600 5v2l-4-3.400 4-3.400v2q2.600.2 3.200-2.200z" fill="#2cd060" stroke="#0c9838" stroke-width=".4"/><path d="M1250 877h10.400l-1 9.600q-.2 1.200-1.400 1.200h-5.600q-1.200 0-1.400-1.200z" fill="url(#gtr)" stroke="#4a4e4a" stroke-width=".5"/><path d="M1252.8 880v6.600M1255.2 880v7M1257.6 880v6.600" stroke="#5a5e5a" stroke-width="1"/><path d="M1254 880v6.600M1256.4 880v7" stroke="#fafafa" stroke-width=".8"/><ellipse cx="1255.2" cy="876.4" rx="6.400" ry="3.200" fill="#dfe3df" stroke="#9a9e9a" stroke-width=".6"/><ellipse cx="1255.2" cy="876.2" rx="3.600" ry="1.500" fill="#3e423e"/><path d="M1403 876.600v3.200q0 2.200-2.200 2.200h-9.600M1394.200 879l-3.200 3 3.200 3" stroke="#6c6c6c" stroke-width="1.400" fill="none" stroke-linecap="round" stroke-linejoin="round"/></svg><div class="abs" style="left:322px;top:7.4px;width:90.4px;height:18px;border-radius:5px;background:#171717;box-shadow:0 0 0 1px #3c3c3c"><div class="t" style="left:1.2px;top:1.2px;font-size:13px;line-height:15px;color:#f4f4f4;letter-spacing:-0.019px;">100 %</div><div class="abs" style="right:0;top:0;width:17px;height:18px;border-radius:4px;background:#8c8c8c;box-shadow:-2px 0 0 0 #2f2f2f"><svg class="ic" style="left:4px;top:6.4px" width="9" height="6" viewBox="0 0 9 6"><path d="M1 1l3.500 3.500L8 1" stroke="#1e1e1e" stroke-width="1.500" fill="none" stroke-linecap="round" stroke-linejoin="round"/></svg></div></div></div>
<div class="abs" style="left:418px;top:0;width:1px;height:803px;background:#4a4a4a"></div>
<div class="abs" style="left:419px;top:0;width:2px;height:803px;background:#262626"></div>
</div>
<div class="abs" style="left:1090px;top:96px;width:1px;height:803px;background:#4a4a4a"></div>
<div id="status" class="abs"><div class="abs" style="left:2.500px;top:7.500px;width:25.500px;height:25.500px;background:#474747;border:1px solid #636363"></div><svg class="ic" style="left:0;top:0" width="240" height="43" viewBox="0 900 240 43"><rect x="8.400" y="914.800" width="13.400" height="10.400" rx=".8" fill="#3e5850" stroke="#9a9a9a" stroke-width=".8"/><path d="M10.400 917.400l2 4M13.200 916.600l.8 4.600M19.400 917l-2.600 4.600" stroke="#8ab0a0" stroke-width=".7"/><path d="M8.400 925.600h13.400" stroke="#c8c8c8" stroke-width="1"/><rect x="34.500" y="910.200" width="87" height="19.400" fill="#2c2c2c"/><path d="M34.500 929.700H121.900V910" stroke="#d0d0d0" stroke-width="1" fill="none"/><path d="M34.500 929.700V910.300H121.900" stroke="#3a3a3a" stroke-width="1" fill="none"/><circle cx="48.900" cy="920" r="7" fill="#b82c34"/><rect x="48" y="915.400" width="1.800" height="6" rx=".6" fill="#f4dcdc"/><circle cx="48.900" cy="923.600" r="1.100" fill="#f4dcdc"/><path d="M89.800 913.200l7.200 12.800h-14.400z" fill="#c4902c" stroke="#c4902c" stroke-width="1.200" stroke-linejoin="round"/><rect x="89" y="917" width="1.600" height="5" fill="#8a1c14"/><rect x="89" y="923" width="1.600" height="1.600" fill="#8a1c14"/></svg><div class="t" style="left:65px;top:13px;font-size:13px;line-height:15px;color:#6e6e6e">0</div><div class="t" style="left:106px;top:13px;font-size:13px;line-height:15px;color:#6e6e6e">0</div><div class="t" style="left:128.3px;top:12.5px;font-size:13px;line-height:15px;color:#f4f4f4;letter-spacing:0.278px;">74, 37 [empty]</div><div class="abs" style="left:1141px;top:9.200px;width:190.500px;height:20.200px;border-radius:5.500px;background:#656565"><svg class="ic" style="left:10px;top:3.600px" width="13" height="13" viewBox="0 0 13 13"><rect width="13" height="13" fill="#3a62b4"/><rect x="1.1" y="1.1" width="2.900" height="2.900" fill="#dbe6fb"/><rect x="1.1" y="5.05" width="2.900" height="2.900" fill="#dbe6fb"/><rect x="1.1" y="9" width="2.900" height="2.900" fill="#dbe6fb"/><rect x="5.05" y="1.1" width="2.900" height="2.900" fill="#dbe6fb"/><rect x="5.05" y="5.05" width="2.900" height="2.900" fill="#dbe6fb"/><rect x="5.05" y="9" width="2.900" height="2.900" fill="#dbe6fb"/><rect x="9" y="1.1" width="2.900" height="2.900" fill="#dbe6fb"/><rect x="9" y="5.05" width="2.900" height="2.900" fill="#dbe6fb"/><rect x="9" y="9" width="2.900" height="2.900" fill="#dbe6fb"/></svg><div class="t" style="left:28.2px;top:2.6px;font-size:13px;line-height:15px;color:#ececec;letter-spacing:0.239px;">collisions</div><div class="abs" style="right:1px;top:1.500px;width:16.500px;height:17px;border-radius:4px;background:#9c9c9c"><svg class="ic" style="left:3.500px;top:2.500px" width="10" height="12" viewBox="0 0 10 12"><path d="M2 4.500L5 1.600L8 4.500M2 7.500L5 10.400L8 7.500" stroke="#2a2a2a" stroke-width="1.400" fill="none" stroke-linecap="round" stroke-linejoin="round"/></svg></div></div><div class="abs" style="left:1345px;top:11.2px;width:90.4px;height:18px;border-radius:5px;background:#171717;box-shadow:0 0 0 1px #3c3c3c"><div class="t" style="left:1.2px;top:1.2px;font-size:13px;line-height:15px;color:#f4f4f4;letter-spacing:-0.100px;transform:scaleX(0.9513);transform-origin:0 0;will-change:transform;">181 %</div><div class="abs" style="right:0;top:0;width:17px;height:18px;border-radius:4px;background:#8c8c8c;box-shadow:-2px 0 0 0 #2f2f2f"><svg class="ic" style="left:4px;top:6.4px" width="9" height="6" viewBox="0 0 9 6"><path d="M1 1l3.500 3.500L8 1" stroke="#1e1e1e" stroke-width="1.500" fill="none" stroke-linecap="round" stroke-linejoin="round"/></svg></div></div><div class="abs" style="left:1445px;top:4.300px;width:63.500px;height:31.500px;background:#454545;border:1px solid #5c5c5c"><svg class="ic" style="left:3px;top:8px" width="15" height="15" viewBox="0 0 15 15"><circle cx="7.500" cy="7.500" r="7" fill="#f03c4c"/><rect x="6.600" y="3.200" width="1.800" height="5.800" rx=".6" fill="#fff"/><circle cx="7.500" cy="11.200" r="1.100" fill="#fff"/></svg><div class="t" style="left:20.5px;top:8.5px;font-size:11px;line-height:13px;color:#dcdcdc;font-weight:bold;letter-spacing:-0.100px;transform:scaleX(0.9033);transform-origin:0 0;will-change:transform;">News</div></div></div>
</div><div id="edge"></div></body></html>
